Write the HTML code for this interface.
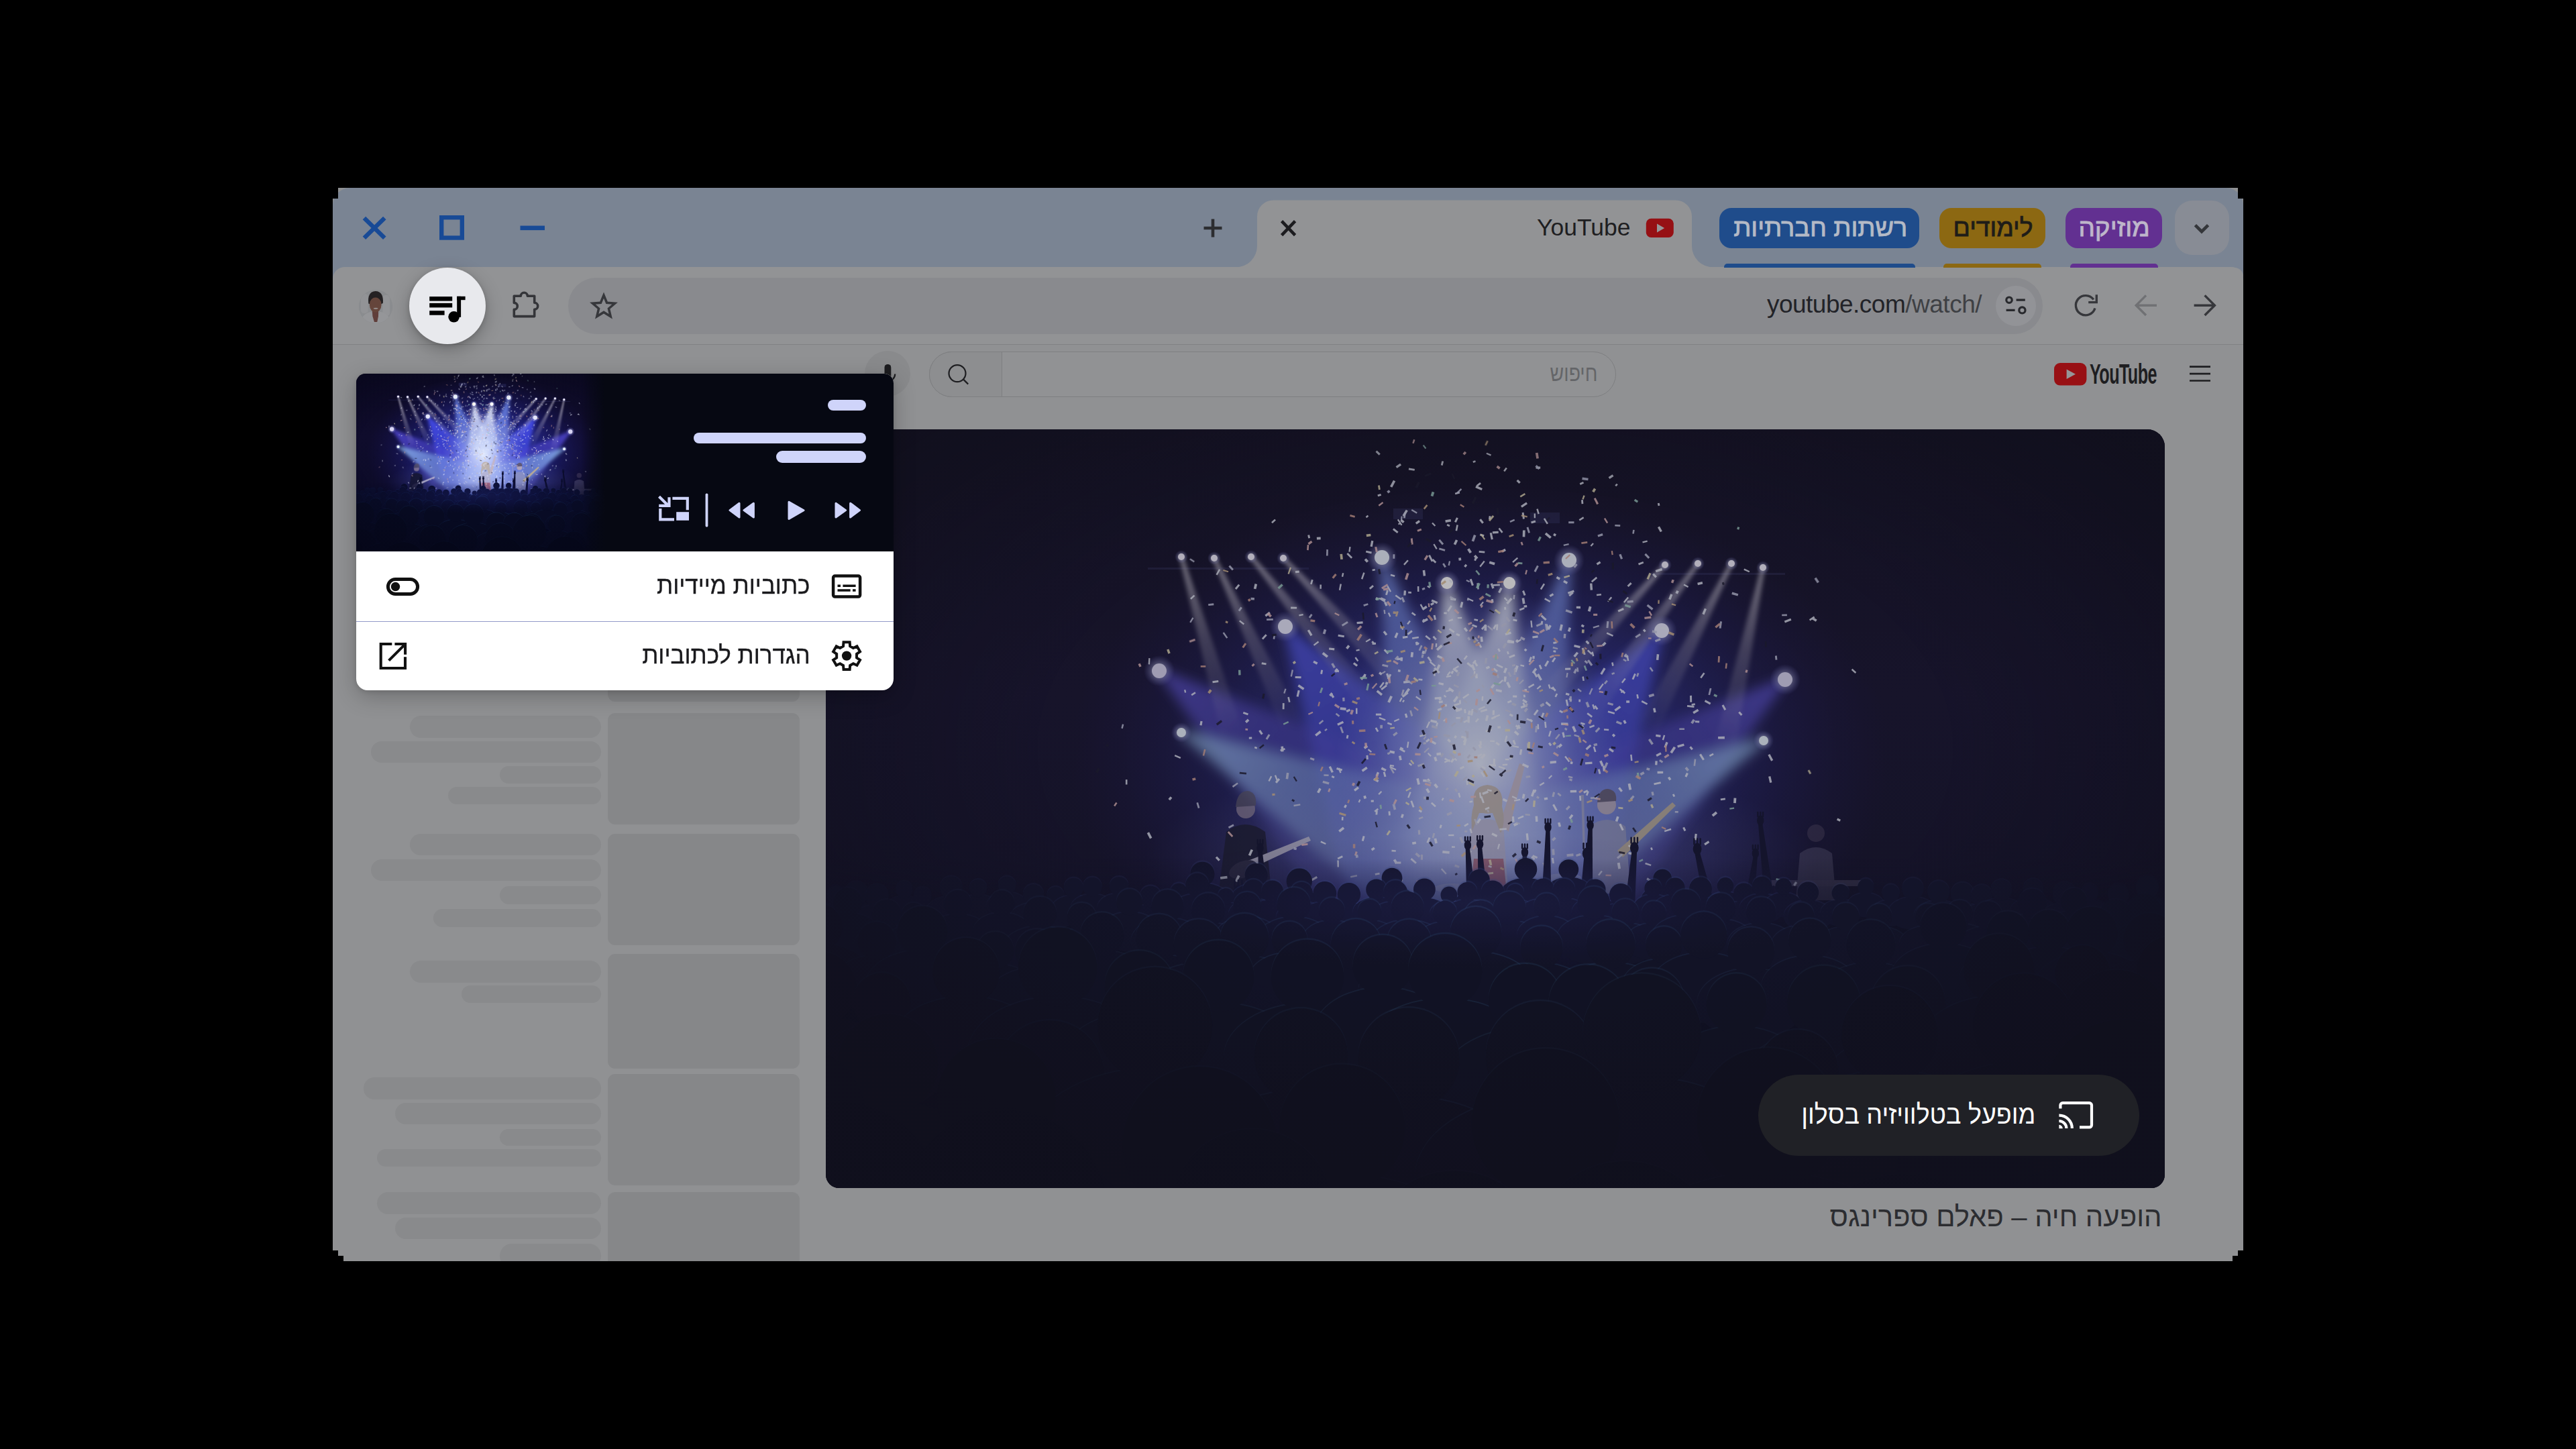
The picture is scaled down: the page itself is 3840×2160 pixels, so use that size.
<!DOCTYPE html>
<html lang="he"><head><meta charset="utf-8"><title>Chrome media controls</title>
<style>
*{box-sizing:border-box;margin:0;padding:0}
html,body{width:3840px;height:2160px;background:#000;overflow:hidden}
body{position:relative;font-family:"Liberation Sans",sans-serif;}
.abs{position:absolute}
.t{position:absolute;white-space:nowrap;line-height:1;}
.rtl{direction:rtl;unicode-bidi:isolate}
svg{position:absolute;overflow:visible}
#win{position:absolute;left:496px;top:280px;width:2848px;height:1600px;background:#8f9092;overflow:hidden;
 clip-path:polygon(8px 0,2840px 0,2840px 16px,2848px 16px,2848px 1584px,2840px 1584px,2840px 1592px,2832px 1592px,2832px 1600px,16px 1600px,16px 1592px,8px 1592px,8px 1584px,0 1584px,0 16px,8px 16px);}
</style></head><body>
<svg width="0" height="0" style="position:absolute"><defs><linearGradient id="sbg" x1="0" y1="0" x2="0" y2="1"><stop offset="0" stop-color="#0b0920"/><stop offset="0.35" stop-color="#0f0c2c"/><stop offset="0.62" stop-color="#0c0b28"/><stop offset="0.8" stop-color="#07081c"/><stop offset="1" stop-color="#040516"/></linearGradient><radialGradient id="sglow" cx="0.5" cy="0.5" r="0.5"><stop offset="0" stop-color="#4450e0" stop-opacity="0.85"/><stop offset="0.45" stop-color="#3036c0" stop-opacity="0.58"/><stop offset="0.8" stop-color="#242290" stop-opacity="0.2"/><stop offset="1" stop-color="#201870" stop-opacity="0"/></radialGradient><radialGradient id="swhite" cx="0.5" cy="0.5" r="0.5"><stop offset="0" stop-color="#e6eeff" stop-opacity="0.95"/><stop offset="0.4" stop-color="#b8c8f8" stop-opacity="0.6"/><stop offset="1" stop-color="#8090f0" stop-opacity="0"/></radialGradient><radialGradient id="svig" cx="0.5" cy="0.42" r="0.62"><stop offset="0.55" stop-color="#050516" stop-opacity="0"/><stop offset="1" stop-color="#050516" stop-opacity="0.75"/></radialGradient><radialGradient id="shalo" cx="0.5" cy="0.5" r="0.5"><stop offset="0" stop-color="#ffffff" stop-opacity="1"/><stop offset="0.3" stop-color="#dfe4ff" stop-opacity="0.75"/><stop offset="1" stop-color="#8a8cff" stop-opacity="0"/></radialGradient><linearGradient id="scrowd" x1="0" y1="0" x2="0" y2="1"><stop offset="0" stop-color="#070a26" stop-opacity="0"/><stop offset="0.25" stop-color="#060922" stop-opacity="0.85"/><stop offset="1" stop-color="#03051a" stop-opacity="1"/></linearGradient><linearGradient id="bm0" gradientUnits="userSpaceOnUse" x1="530" y1="190" x2="607.2" y2="459.2"><stop offset="0" stop-color="rgb(232,228,240)" stop-opacity="0.6"/><stop offset="0.45" stop-color="rgb(232,228,240)" stop-opacity="0.27"/><stop offset="1" stop-color="rgb(232,228,240)" stop-opacity="0"/></linearGradient><linearGradient id="bm1" gradientUnits="userSpaceOnUse" x1="579" y1="192" x2="697.3" y2="445.8"><stop offset="0" stop-color="rgb(232,228,240)" stop-opacity="0.6"/><stop offset="0.45" stop-color="rgb(232,228,240)" stop-opacity="0.27"/><stop offset="1" stop-color="rgb(232,228,240)" stop-opacity="0"/></linearGradient><linearGradient id="bm2" gradientUnits="userSpaceOnUse" x1="634" y1="190" x2="810.2" y2="407.6"><stop offset="0" stop-color="rgb(232,228,240)" stop-opacity="0.6"/><stop offset="0.45" stop-color="rgb(232,228,240)" stop-opacity="0.27"/><stop offset="1" stop-color="rgb(232,228,240)" stop-opacity="0"/></linearGradient><linearGradient id="bm3" gradientUnits="userSpaceOnUse" x1="682" y1="192" x2="873" y2="396.8"><stop offset="0" stop-color="rgb(232,228,240)" stop-opacity="0.6"/><stop offset="0.45" stop-color="rgb(232,228,240)" stop-opacity="0.27"/><stop offset="1" stop-color="rgb(232,228,240)" stop-opacity="0"/></linearGradient><linearGradient id="bm4" gradientUnits="userSpaceOnUse" x1="1251" y1="202" x2="1063.6" y2="410.1"><stop offset="0" stop-color="rgb(232,228,240)" stop-opacity="0.6"/><stop offset="0.45" stop-color="rgb(232,228,240)" stop-opacity="0.27"/><stop offset="1" stop-color="rgb(232,228,240)" stop-opacity="0"/></linearGradient><linearGradient id="bm5" gradientUnits="userSpaceOnUse" x1="1300" y1="200" x2="1135.4" y2="426.5"><stop offset="0" stop-color="rgb(232,228,240)" stop-opacity="0.6"/><stop offset="0.45" stop-color="rgb(232,228,240)" stop-opacity="0.27"/><stop offset="1" stop-color="rgb(232,228,240)" stop-opacity="0"/></linearGradient><linearGradient id="bm6" gradientUnits="userSpaceOnUse" x1="1350" y1="200" x2="1222.9" y2="449.5"><stop offset="0" stop-color="rgb(232,228,240)" stop-opacity="0.6"/><stop offset="0.45" stop-color="rgb(232,228,240)" stop-opacity="0.27"/><stop offset="1" stop-color="rgb(232,228,240)" stop-opacity="0"/></linearGradient><linearGradient id="bm7" gradientUnits="userSpaceOnUse" x1="1397" y1="206" x2="1338.8" y2="479.9"><stop offset="0" stop-color="rgb(232,228,240)" stop-opacity="0.6"/><stop offset="0.45" stop-color="rgb(232,228,240)" stop-opacity="0.27"/><stop offset="1" stop-color="rgb(232,228,240)" stop-opacity="0"/></linearGradient><linearGradient id="bm8" gradientUnits="userSpaceOnUse" x1="829" y1="191" x2="940.3" y2="637.3"><stop offset="0" stop-color="rgb(120,150,255)" stop-opacity="0.88"/><stop offset="0.45" stop-color="rgb(120,150,255)" stop-opacity="0.40"/><stop offset="1" stop-color="rgb(120,150,255)" stop-opacity="0"/></linearGradient><linearGradient id="bm9" gradientUnits="userSpaceOnUse" x1="1108" y1="195" x2="996.7" y2="641.3"><stop offset="0" stop-color="rgb(120,150,255)" stop-opacity="0.88"/><stop offset="0.45" stop-color="rgb(120,150,255)" stop-opacity="0.40"/><stop offset="1" stop-color="rgb(120,150,255)" stop-opacity="0"/></linearGradient><linearGradient id="bm10" gradientUnits="userSpaceOnUse" x1="926" y1="229" x2="1003.9" y2="783.6"><stop offset="0" stop-color="rgb(238,244,255)" stop-opacity="1.0"/><stop offset="0.45" stop-color="rgb(238,244,255)" stop-opacity="0.45"/><stop offset="1" stop-color="rgb(238,244,255)" stop-opacity="0"/></linearGradient><linearGradient id="bm11" gradientUnits="userSpaceOnUse" x1="1019" y1="229" x2="941.1" y2="783.6"><stop offset="0" stop-color="rgb(238,244,255)" stop-opacity="1.0"/><stop offset="0.45" stop-color="rgb(238,244,255)" stop-opacity="0.45"/><stop offset="1" stop-color="rgb(238,244,255)" stop-opacity="0"/></linearGradient><linearGradient id="bm12" gradientUnits="userSpaceOnUse" x1="685" y1="294" x2="1011.8" y2="797.2"><stop offset="0" stop-color="rgb(70,78,240)" stop-opacity="0.95"/><stop offset="0.45" stop-color="rgb(70,78,240)" stop-opacity="0.43"/><stop offset="1" stop-color="rgb(70,78,240)" stop-opacity="0"/></linearGradient><linearGradient id="bm13" gradientUnits="userSpaceOnUse" x1="1246" y1="300" x2="919.2" y2="803.2"><stop offset="0" stop-color="rgb(70,78,240)" stop-opacity="0.95"/><stop offset="0.45" stop-color="rgb(70,78,240)" stop-opacity="0.43"/><stop offset="1" stop-color="rgb(70,78,240)" stop-opacity="0"/></linearGradient><linearGradient id="bm14" gradientUnits="userSpaceOnUse" x1="497" y1="360" x2="938.3" y2="704.8"><stop offset="0" stop-color="rgb(84,74,218)" stop-opacity="0.85"/><stop offset="0.45" stop-color="rgb(84,74,218)" stop-opacity="0.38"/><stop offset="1" stop-color="rgb(84,74,218)" stop-opacity="0"/></linearGradient><linearGradient id="bm15" gradientUnits="userSpaceOnUse" x1="1430" y1="373" x2="988.7" y2="717.8"><stop offset="0" stop-color="rgb(84,74,218)" stop-opacity="0.85"/><stop offset="0.45" stop-color="rgb(84,74,218)" stop-opacity="0.38"/><stop offset="1" stop-color="rgb(84,74,218)" stop-opacity="0"/></linearGradient><linearGradient id="bm16" gradientUnits="userSpaceOnUse" x1="530" y1="452" x2="1100.2" y2="742.6"><stop offset="0" stop-color="rgb(140,185,240)" stop-opacity="0.8"/><stop offset="0.45" stop-color="rgb(140,185,240)" stop-opacity="0.36"/><stop offset="1" stop-color="rgb(140,185,240)" stop-opacity="0"/></linearGradient><linearGradient id="bm17" gradientUnits="userSpaceOnUse" x1="1398" y1="464" x2="827.8" y2="754.6"><stop offset="0" stop-color="rgb(140,185,240)" stop-opacity="0.8"/><stop offset="0.45" stop-color="rgb(140,185,240)" stop-opacity="0.36"/><stop offset="1" stop-color="rgb(140,185,240)" stop-opacity="0"/></linearGradient><filter id="sblur" x="-10%" y="-10%" width="120%" height="120%"><feGaussianBlur stdDeviation="9"/></filter><filter id="sblur3" x="-10%" y="-10%" width="120%" height="120%"><feGaussianBlur stdDeviation="3.2"/></filter><filter id="sblur2" x="-10%" y="-10%" width="120%" height="120%"><feGaussianBlur stdDeviation="2.2"/></filter></defs><symbol id="scene" viewBox="0 0 1996 1131" preserveAspectRatio="none"><rect width="1996" height="1131" fill="url(#sbg)"/><g fill="#2a2a58" opacity="0.55"><rect x="846" y="118" width="44" height="16"/><rect x="1050" y="124" width="44" height="16"/><rect x="480" y="206" width="240" height="3"/><rect x="1230" y="214" width="200" height="3"/></g><ellipse cx="975" cy="490" rx="610" ry="410" fill="url(#sglow)"/><g filter="url(#sblur)"><polygon points="826.1,191.7 831.9,190.3 1030.7,604.4 845.1,650.7" fill="url(#bm8)"/><polygon points="1105.1,194.3 1110.9,195.7 1091.9,654.7 906.3,608.4" fill="url(#bm9)"/><polygon points="923,229.4 929,228.6 1144.8,744.5 857.8,784.8" fill="url(#bm10)"/><polygon points="1016,228.6 1022,229.4 1087.2,784.8 800.2,744.5" fill="url(#bm11)"/><polygon points="682.5,295.6 687.5,292.4 1164.2,655.1 820,878.6" fill="url(#bm12)"/><polygon points="1243.5,298.4 1248.5,301.6 1111,884.6 766.8,661.1" fill="url(#bm13)"/><polygon points="495.2,362.4 498.8,357.6 1019.8,560.7 818.2,818.7" fill="url(#bm14)"/><polygon points="1428.2,370.6 1431.8,375.4 1108.8,831.7 907.2,573.7" fill="url(#bm15)"/><polygon points="528.6,454.7 531.4,449.3 1153.6,596 1013,871.9" fill="url(#bm16)"/><polygon points="1396.6,461.3 1399.4,466.7 915,883.9 774.4,608" fill="url(#bm17)"/></g><g filter="url(#sblur3)"><polygon points="527.1,190.8 532.9,189.2 623,454.1 591.1,463.3" fill="url(#bm0)"/><polygon points="576.3,193.3 581.7,190.7 712.2,438.3 682.1,452.3" fill="url(#bm1)"/><polygon points="631.7,191.9 636.3,188.1 822.8,396.8 797,417.7" fill="url(#bm2)"/><polygon points="679.8,194 684.2,190 884.8,385.1 860.5,407.7" fill="url(#bm3)"/><polygon points="1248.8,200 1253.2,204 1076.3,420.8 1051.6,398.6" fill="url(#bm4)"/><polygon points="1297.6,198.2 1302.4,201.8 1149.1,435.9 1122.3,416.4" fill="url(#bm5)"/><polygon points="1347.3,198.6 1352.7,201.4 1237.9,456.6 1208.3,441.5" fill="url(#bm6)"/><polygon points="1394.1,205.4 1399.9,206.6 1355.1,482.9 1322.6,475.9" fill="url(#bm7)"/></g><ellipse cx="975" cy="500" rx="215" ry="270" fill="url(#swhite)"/><ellipse cx="975" cy="640" rx="500" ry="150" fill="url(#swhite)" opacity="0.34"/><circle cx="530" cy="190" r="10" fill="url(#shalo)" opacity="0.7"/><circle cx="530" cy="190" r="5" fill="#f4f0ff"/><circle cx="579" cy="192" r="10" fill="url(#shalo)" opacity="0.7"/><circle cx="579" cy="192" r="5" fill="#f4f0ff"/><circle cx="634" cy="190" r="10" fill="url(#shalo)" opacity="0.7"/><circle cx="634" cy="190" r="5" fill="#f4f0ff"/><circle cx="682" cy="192" r="10" fill="url(#shalo)" opacity="0.7"/><circle cx="682" cy="192" r="5" fill="#f4f0ff"/><circle cx="1251" cy="202" r="10" fill="url(#shalo)" opacity="0.7"/><circle cx="1251" cy="202" r="5" fill="#f4f0ff"/><circle cx="1300" cy="200" r="10" fill="url(#shalo)" opacity="0.7"/><circle cx="1300" cy="200" r="5" fill="#f4f0ff"/><circle cx="1350" cy="200" r="10" fill="url(#shalo)" opacity="0.7"/><circle cx="1350" cy="200" r="5" fill="#f4f0ff"/><circle cx="1397" cy="206" r="10" fill="url(#shalo)" opacity="0.7"/><circle cx="1397" cy="206" r="5" fill="#f4f0ff"/><circle cx="829" cy="191" r="23" fill="url(#shalo)" opacity="0.7"/><circle cx="829" cy="191" r="11" fill="#e8f0ff"/><circle cx="1108" cy="195" r="23" fill="url(#shalo)" opacity="0.7"/><circle cx="1108" cy="195" r="11" fill="#e8f0ff"/><circle cx="926" cy="229" r="19" fill="url(#shalo)" opacity="0.7"/><circle cx="926" cy="229" r="9" fill="#ffffff"/><circle cx="1019" cy="229" r="19" fill="url(#shalo)" opacity="0.7"/><circle cx="1019" cy="229" r="9" fill="#ffffff"/><circle cx="685" cy="294" r="23" fill="url(#shalo)" opacity="0.7"/><circle cx="685" cy="294" r="11" fill="#e6e8ff"/><circle cx="1246" cy="300" r="23" fill="url(#shalo)" opacity="0.7"/><circle cx="1246" cy="300" r="11" fill="#e6e8ff"/><circle cx="497" cy="360" r="23" fill="url(#shalo)" opacity="0.7"/><circle cx="497" cy="360" r="11" fill="#d8d4f4"/><circle cx="1430" cy="373" r="23" fill="url(#shalo)" opacity="0.7"/><circle cx="1430" cy="373" r="11" fill="#d8d4f4"/><circle cx="530" cy="452" r="15" fill="url(#shalo)" opacity="0.7"/><circle cx="530" cy="452" r="7" fill="#e8f4ff"/><circle cx="1398" cy="464" r="15" fill="url(#shalo)" opacity="0.7"/><circle cx="1398" cy="464" r="7" fill="#e8f4ff"/><g opacity="0.8"><g><path d="M597 600 q28 -22 58 0 l10 95 l-80 0z" fill="#15162e"/><circle cx="626" cy="566" r="14" fill="#8d7f9a"/><path d="M611 563 q2 -24 18 -24 q14 2 12 22 z" fill="#54506a"/><path d="M612 650 L720 607 l3 6 L618 662z" fill="#c8c6d8"/><ellipse cx="622" cy="656" rx="22" ry="12" transform="rotate(-22 622 656)" fill="#2a2840"/></g><g><path d="M962 590 q24 -18 48 0 l8 110 l-62 0z" fill="#b8b4d0"/><path d="M1004 590 L1034 498 l8 3 L1018 600z" fill="#c6b4c0"/><circle cx="986" cy="556" r="17" fill="#c9b8b8"/><path d="M966 560 q-4 -28 20 -30 q26 2 22 32 q6 24 -2 40 l-12 -30 l-20 0 l-10 26 q-4 -20 2 -38z" fill="#bfae9e"/><path d="M966 640 h44 l6 60 h-56z" fill="#b05a68"/></g><g><path d="M1138 592 q26 -20 54 0 l8 100 l-72 0z" fill="#8f94c0"/><circle cx="1164" cy="560" r="14" fill="#c0aeb4"/><path d="M1150 556 q2 -20 16 -20 q14 2 12 18z" fill="#5c5060"/><path d="M1180 628 L1262 556 l5 5 L1188 638z" fill="#c9b48c"/><path d="M1126 545 l3 90 l3 0 l-2 -90z" fill="#a0a4c8"/></g><g opacity="0.35"><circle cx="1476" cy="602" r="13" fill="#7a6a80"/><path d="M1452 632 q24 -18 48 0 l6 70 h-60z" fill="#8a86a8"/><rect x="1405" y="672" width="150" height="9" fill="#9a96b8"/></g><g opacity="0.5" fill="#b9bde0"><ellipse cx="1050" cy="690" rx="34" ry="9"/><ellipse cx="1100" cy="668" rx="26" ry="6"/><ellipse cx="935" cy="684" rx="28" ry="7"/></g></g><g fill="#e8ecfa" opacity="0.85"><rect x="-4.5" y="-1.2" width="8.9" height="2.3" transform="translate(926.4 494.6) rotate(-24)"/><rect x="-1.9" y="-1.4" width="3.8" height="2.9" transform="translate(1086.4 330.9) rotate(9)"/><rect x="-3.5" y="-1.6" width="7" height="3.2" transform="translate(1020.4 315.8) rotate(14)"/><rect x="-2.2" y="-1.7" width="4.3" height="3.3" transform="translate(1051.5 434.3) rotate(42)"/><rect x="-2.3" y="-1.6" width="4.6" height="3.3" transform="translate(1042.9 263.8) rotate(-7)"/><rect x="-4.2" y="-1.8" width="8.5" height="3.6" transform="translate(1156.5 498) rotate(66)"/><rect x="-2.1" y="-1.2" width="4.2" height="2.3" transform="translate(898.7 234.9) rotate(29)"/><rect x="-5" y="-1.7" width="9.9" height="3.5" transform="translate(1241.9 210) rotate(-18)"/><rect x="-3.3" y="-1.2" width="6.7" height="2.4" transform="translate(978.9 401.3) rotate(-85)"/><rect x="-2.5" y="-1.2" width="4.9" height="2.3" transform="translate(1187.6 391) rotate(-28)"/><rect x="-4.2" y="-1.9" width="8.4" height="3.8" transform="translate(932.1 388.4) rotate(35)"/><rect x="-5.2" y="-1.5" width="10.3" height="2.9" transform="translate(958.2 683.7) rotate(88)"/><rect x="-2.7" y="-1.7" width="5.4" height="3.5" transform="translate(1091.8 221.8) rotate(29)"/><rect x="-3.1" y="-1.7" width="6.2" height="3.4" transform="translate(822.3 514.1) rotate(-67)"/><rect x="-4.5" y="-1.6" width="9" height="3.2" transform="translate(796.1 288.2) rotate(-5)"/><rect x="-3" y="-1.8" width="6" height="3.5" transform="translate(1160.3 320.1) rotate(-45)"/><rect x="-2.8" y="-1.8" width="5.7" height="3.6" transform="translate(761 359.3) rotate(-56)"/><rect x="-5" y="-1.9" width="9.9" height="3.7" transform="translate(1249.8 297) rotate(11)"/><rect x="-2" y="-1.5" width="3.9" height="2.9" transform="translate(1030.3 315.2) rotate(-47)"/><rect x="-3.3" y="-1.7" width="6.6" height="3.4" transform="translate(1012.5 552.8) rotate(26)"/><rect x="-4.6" y="-1.1" width="9.2" height="2.2" transform="translate(1030.6 552.7) rotate(-11)"/><rect x="-2.2" y="-1.9" width="4.4" height="3.7" transform="translate(803.6 548.4) rotate(75)"/><rect x="-3.6" y="-1.1" width="7.2" height="2.3" transform="translate(1063 384.6) rotate(-41)"/><rect x="-3.2" y="-1.1" width="6.4" height="2.3" transform="translate(708.5 276.7) rotate(-13)"/><rect x="-3.2" y="-1.3" width="6.4" height="2.6" transform="translate(970.8 433.8) rotate(-50)"/><rect x="-3.8" y="-1.5" width="7.5" height="3.1" transform="translate(1111 245.5) rotate(-42)"/><rect x="-5.1" y="-1.9" width="10.2" height="3.8" transform="translate(1262.8 478) rotate(-57)"/><rect x="-3.5" y="-1.5" width="6.9" height="2.9" transform="translate(813.5 235.3) rotate(-41)"/><rect x="-3" y="-1.5" width="6.1" height="3" transform="translate(1027.1 398.2) rotate(3)"/><rect x="-4.8" y="-1.4" width="9.7" height="2.9" transform="translate(1057.6 365) rotate(60)"/><rect x="-3.1" y="-1.6" width="6.2" height="3.3" transform="translate(1121.9 265.4) rotate(1)"/><rect x="-3.1" y="-1.2" width="6.2" height="2.5" transform="translate(737.6 234.7) rotate(-89)"/><rect x="-4.2" y="-1.3" width="8.5" height="2.6" transform="translate(1470.1 282) rotate(-34)"/><rect x="-1.9" y="-1.4" width="3.8" height="2.8" transform="translate(1123.7 404.5) rotate(-86)"/><rect x="-5.2" y="-1.2" width="10.4" height="2.4" transform="translate(845.3 505.2) rotate(26)"/><rect x="-2.1" y="-1.1" width="4.2" height="2.2" transform="translate(855.4 140.5) rotate(-25)"/><rect x="-3.1" y="-1.1" width="6.2" height="2.2" transform="translate(826.3 541.9) rotate(-46)"/><rect x="-4.7" y="-1.5" width="9.4" height="3" transform="translate(1314.6 406.9) rotate(29)"/><rect x="-2.9" y="-1.8" width="5.8" height="3.6" transform="translate(969.2 190.4) rotate(46)"/><rect x="-3.7" y="-1.6" width="7.5" height="3.2" transform="translate(1057.1 637.2) rotate(22)"/><rect x="-3.6" y="-1.6" width="7.2" height="3.3" transform="translate(1042 405.1) rotate(32)"/><rect x="-4" y="-1.7" width="8.1" height="3.4" transform="translate(935.2 253.3) rotate(9)"/><rect x="-3.3" y="-1.4" width="6.6" height="2.8" transform="translate(821.5 447.8) rotate(61)"/><rect x="-3.6" y="-1.1" width="7.3" height="2.3" transform="translate(988.2 37.1) rotate(24)"/><rect x="-4.1" y="-1.3" width="8.3" height="2.5" transform="translate(975.6 545.4) rotate(82)"/><rect x="-5.1" y="-1.9" width="10.1" height="3.7" transform="translate(1076.8 158.4) rotate(40)"/><rect x="-3.8" y="-1.3" width="7.5" height="2.7" transform="translate(1124.7 550) rotate(86)"/><rect x="-2.5" y="-1.6" width="4.9" height="3.3" transform="translate(858.4 475.9) rotate(26)"/><rect x="-5" y="-1.9" width="10.1" height="3.8" transform="translate(841.1 402.4) rotate(-65)"/><rect x="-4.3" y="-1.4" width="8.5" height="2.7" transform="translate(979.4 514.6) rotate(56)"/><rect x="-3.9" y="-1.4" width="7.9" height="2.9" transform="translate(1215.1 199.7) rotate(-22)"/><rect x="-4.3" y="-1.4" width="8.6" height="2.8" transform="translate(978 182.8) rotate(5)"/><rect x="-3.9" y="-1.6" width="7.7" height="3.2" transform="translate(1313.3 616.7) rotate(-34)"/><rect x="-4.7" y="-1.7" width="9.4" height="3.5" transform="translate(1114.4 539.6) rotate(-2)"/><rect x="-4.9" y="-1.8" width="9.7" height="3.6" transform="translate(637.6 666.6) rotate(-45)"/><rect x="-2.8" y="-1.1" width="5.7" height="2.2" transform="translate(1038.2 352.2) rotate(12)"/><rect x="-3.3" y="-1.3" width="6.6" height="2.6" transform="translate(876.3 275.3) rotate(36)"/><rect x="-5.1" y="-1.3" width="10.2" height="2.5" transform="translate(1105.2 491.5) rotate(52)"/><rect x="-3.1" y="-1.4" width="6.1" height="2.9" transform="translate(739.1 361.7) rotate(-80)"/><rect x="-3.9" y="-1.3" width="7.9" height="2.6" transform="translate(690.4 402.9) rotate(77)"/><rect x="-4.6" y="-1.4" width="9.2" height="2.8" transform="translate(682.2 412.7) rotate(-89)"/><rect x="-3.5" y="-1.9" width="6.9" height="3.8" transform="translate(959.6 181.2) rotate(58)"/><rect x="-5" y="-1.2" width="10" height="2.4" transform="translate(829.5 431.6) rotate(20)"/><rect x="-3.1" y="-1.6" width="6.3" height="3.2" transform="translate(559.5 438.1) rotate(-80)"/><rect x="-3.1" y="-1.1" width="6.2" height="2.3" transform="translate(1078.7 383.4) rotate(72)"/><rect x="-3.1" y="-1.5" width="6.3" height="2.9" transform="translate(919 50.6) rotate(-76)"/><rect x="-3.9" y="-1.7" width="7.8" height="3.5" transform="translate(1012.6 372.3) rotate(-83)"/><rect x="-1.9" y="-1.3" width="3.8" height="2.5" transform="translate(641 474.7) rotate(19)"/><rect x="-4.7" y="-1.8" width="9.3" height="3.5" transform="translate(1115 704.1) rotate(19)"/><rect x="-4.8" y="-1.6" width="9.5" height="3.2" transform="translate(1110.9 242.6) rotate(-19)"/><rect x="-3.1" y="-1.5" width="6.2" height="3.1" transform="translate(976.2 467.7) rotate(86)"/><rect x="-3.4" y="-1.3" width="6.8" height="2.6" transform="translate(961.7 598.6) rotate(73)"/><rect x="-1.8" y="-1.8" width="3.6" height="3.6" transform="translate(924.1 411.4) rotate(-9)"/><rect x="-3.3" y="-1.3" width="6.5" height="2.5" transform="translate(1128.4 438.7) rotate(15)"/><rect x="-4" y="-1.3" width="8" height="2.6" transform="translate(710.3 666.9) rotate(80)"/><rect x="-3.8" y="-1.1" width="7.6" height="2.3" transform="translate(780.9 178.8) rotate(-82)"/><rect x="-5.1" y="-1.8" width="10.1" height="3.5" transform="translate(1274.6 471.5) rotate(-16)"/><rect x="-3.5" y="-1.7" width="6.9" height="3.5" transform="translate(1040.1 546.9) rotate(-79)"/><rect x="-3.3" y="-1.5" width="6.7" height="3.1" transform="translate(1054.7 138) rotate(-18)"/><rect x="-3.7" y="-1.9" width="7.4" height="3.7" transform="translate(844.2 481.1) rotate(12)"/><rect x="-4.7" y="-1.7" width="9.4" height="3.5" transform="translate(943.8 418.2) rotate(-20)"/><rect x="-5" y="-1.4" width="10.1" height="2.9" transform="translate(980.9 419.2) rotate(-17)"/><rect x="-3" y="-1.5" width="6.1" height="3.1" transform="translate(865.2 426.8) rotate(74)"/><rect x="-4.7" y="-1.2" width="9.3" height="2.5" transform="translate(584.8 212.8) rotate(-61)"/><rect x="-4.1" y="-1.7" width="8.2" height="3.5" transform="translate(1056.4 359.9) rotate(-54)"/><rect x="-5.1" y="-1.4" width="10.1" height="2.7" transform="translate(1004.5 352.9) rotate(25)"/><rect x="-4.9" y="-1.2" width="9.7" height="2.5" transform="translate(1193 254.2) rotate(-50)"/><rect x="-2.4" y="-1.6" width="4.9" height="3.1" transform="translate(880.7 319.3) rotate(79)"/><rect x="-2.9" y="-1.4" width="5.8" height="2.8" transform="translate(1126.9 80.4) rotate(-25)"/><rect x="-3.2" y="-1.7" width="6.4" height="3.4" transform="translate(856.8 672) rotate(27)"/><rect x="-4.8" y="-1.6" width="9.6" height="3.3" transform="translate(893.2 728.2) rotate(-50)"/><rect x="-3.7" y="-1.6" width="7.5" height="3.2" transform="translate(863.6 309.8) rotate(-8)"/><rect x="-3.5" y="-1.3" width="6.9" height="2.6" transform="translate(548.1 394.2) rotate(-33)"/><rect x="-4.4" y="-1.3" width="8.9" height="2.6" transform="translate(1035.9 578.5) rotate(-22)"/><rect x="-3.6" y="-1.5" width="7.1" height="3.1" transform="translate(823.2 35.1) rotate(43)"/><rect x="-2.8" y="-1.5" width="5.7" height="2.9" transform="translate(816.2 318.3) rotate(44)"/><rect x="-3.7" y="-1.9" width="7.4" height="3.7" transform="translate(909.2 613.5) rotate(77)"/><rect x="-3.5" y="-1.3" width="7" height="2.7" transform="translate(941.5 95) rotate(-15)"/><rect x="-2.1" y="-1.6" width="4.2" height="3.2" transform="translate(1055.1 339.9) rotate(-90)"/><rect x="-4.2" y="-1.4" width="8.4" height="2.9" transform="translate(898.4 612.4) rotate(-66)"/><rect x="-2" y="-1.8" width="4" height="3.7" transform="translate(821.5 252.5) rotate(-63)"/><rect x="-4.5" y="-1.3" width="9" height="2.6" transform="translate(1072.8 440.3) rotate(84)"/><rect x="-1.8" y="-1.1" width="3.6" height="2.3" transform="translate(861 405) rotate(-57)"/><rect x="-3" y="-1.5" width="6.1" height="3.1" transform="translate(1283.1 515.3) rotate(-64)"/><rect x="-4.5" y="-1.4" width="8.9" height="2.9" transform="translate(704.2 369.6) rotate(2)"/><rect x="-2.8" y="-1.5" width="5.6" height="2.9" transform="translate(968.6 193.1) rotate(-71)"/><rect x="-5" y="-1.8" width="10" height="3.7" transform="translate(914.8 325.4) rotate(-43)"/><rect x="-5.1" y="-1.3" width="10.1" height="2.5" transform="translate(1007.7 504.2) rotate(18)"/><rect x="-4" y="-1.7" width="8" height="3.4" transform="translate(853.8 54.4) rotate(-35)"/><rect x="-5" y="-1.8" width="9.9" height="3.7" transform="translate(1029.4 356.9) rotate(-71)"/><rect x="-3.2" y="-1.2" width="6.4" height="2.4" transform="translate(869 288) rotate(-53)"/><rect x="-2.3" y="-1.8" width="4.5" height="3.7" transform="translate(898.5 523.2) rotate(47)"/><rect x="-4.1" y="-1.3" width="8.1" height="2.7" transform="translate(1006.1 150.7) rotate(52)"/><rect x="-3.8" y="-1.7" width="7.6" height="3.3" transform="translate(673.5 523.9) rotate(-51)"/><rect x="-4" y="-1.5" width="8" height="3" transform="translate(835.5 331.3) rotate(45)"/><rect x="-2.5" y="-1.7" width="4.9" height="3.5" transform="translate(1195.7 405.9) rotate(-1)"/><rect x="-4.3" y="-1.2" width="8.6" height="2.5" transform="translate(1195.4 340.9) rotate(79)"/><rect x="-4.4" y="-1.2" width="8.9" height="2.3" transform="translate(883.3 400.9) rotate(35)"/><rect x="-4.2" y="-1.7" width="8.4" height="3.4" transform="translate(996.8 604.6) rotate(26)"/><rect x="-4.3" y="-1.2" width="8.6" height="2.4" transform="translate(671.5 519.6) rotate(69)"/><rect x="-4.7" y="-1.8" width="9.4" height="3.5" transform="translate(825.3 392.9) rotate(40)"/><rect x="-2.7" y="-1.3" width="5.4" height="2.5" transform="translate(1088.9 396.5) rotate(-63)"/><rect x="-2.1" y="-1.6" width="4.1" height="3.2" transform="translate(953.7 203.4) rotate(-53)"/><rect x="-3" y="-1.4" width="5.9" height="2.9" transform="translate(945.5 406.6) rotate(87)"/><rect x="-2.1" y="-1.2" width="4.2" height="2.5" transform="translate(816.7 209.6) rotate(-12)"/><rect x="-3.9" y="-1.7" width="7.9" height="3.5" transform="translate(915.3 339.4) rotate(23)"/><rect x="-3" y="-1.8" width="6.1" height="3.6" transform="translate(1102.6 227.7) rotate(29)"/><rect x="-3" y="-1.8" width="6" height="3.5" transform="translate(1108.5 298.5) rotate(-71)"/><rect x="-4.1" y="-1.1" width="8.1" height="2.2" transform="translate(851 433.6) rotate(-23)"/><rect x="-3.5" y="-1.6" width="6.9" height="3.3" transform="translate(584.4 640.2) rotate(47)"/><rect x="-4.4" y="-1.3" width="8.9" height="2.6" transform="translate(940.7 146.9) rotate(-79)"/><rect x="-5.2" y="-1.9" width="10.4" height="3.8" transform="translate(593.3 668.3) rotate(-7)"/><rect x="-4.8" y="-1.6" width="9.6" height="3.2" transform="translate(1201.2 632.5) rotate(11)"/><rect x="-4.5" y="-1.8" width="9" height="3.5" transform="translate(1017.2 304.4) rotate(-16)"/><rect x="-2.4" y="-1.2" width="4.8" height="2.5" transform="translate(871.5 499.3) rotate(40)"/><rect x="-3.7" y="-1.5" width="7.4" height="3" transform="translate(801.2 610) rotate(-75)"/><rect x="-3.9" y="-1.2" width="7.7" height="2.3" transform="translate(1067.6 528.8) rotate(-32)"/><rect x="-2.6" y="-1.6" width="5.2" height="3.3" transform="translate(803.4 367.4) rotate(-77)"/><rect x="-3.3" y="-1.3" width="6.6" height="2.6" transform="translate(975 485.6) rotate(-28)"/><rect x="-4.2" y="-1.6" width="8.4" height="3.2" transform="translate(1024.7 581.4) rotate(86)"/><rect x="-4.1" y="-1.6" width="8.1" height="3.1" transform="translate(1338.9 414.7) rotate(61)"/><rect x="-5.2" y="-1.5" width="10.4" height="3" transform="translate(1129.7 330.9) rotate(72)"/><rect x="-3.5" y="-1.4" width="6.9" height="2.9" transform="translate(653.2 349.3) rotate(10)"/><rect x="-3.9" y="-1.5" width="7.8" height="3" transform="translate(880.1 734.4) rotate(1)"/><rect x="-3.9" y="-1.5" width="7.8" height="3.1" transform="translate(1519.6 725.3) rotate(13)"/><rect x="-2.7" y="-1.6" width="5.3" height="3.2" transform="translate(1021.8 426.2) rotate(29)"/><rect x="-5.1" y="-1.1" width="10.2" height="2.2" transform="translate(897.9 440.3) rotate(-65)"/><rect x="-3.9" y="-1.2" width="7.9" height="2.4" transform="translate(1189.3 374.7) rotate(-52)"/><rect x="-3" y="-1.6" width="6" height="3.3" transform="translate(834.9 260.3) rotate(65)"/><rect x="-1.8" y="-1.7" width="3.6" height="3.4" transform="translate(1043.1 328.9) rotate(42)"/><rect x="-2.8" y="-1.7" width="5.6" height="3.3" transform="translate(1135.4 317.7) rotate(47)"/><rect x="-5" y="-1.6" width="10" height="3.3" transform="translate(1040.8 413) rotate(-20)"/><rect x="-2" y="-1.9" width="4" height="3.7" transform="translate(945.2 193.6) rotate(82)"/><rect x="-3.3" y="-1.8" width="6.7" height="3.5" transform="translate(969.9 367.7) rotate(86)"/><rect x="-4.4" y="-1.8" width="8.7" height="3.6" transform="translate(768.7 596.7) rotate(-39)"/><rect x="-3.4" y="-1.8" width="6.7" height="3.7" transform="translate(909.8 531.6) rotate(51)"/><rect x="-2.5" y="-1.7" width="5.1" height="3.5" transform="translate(929.2 464) rotate(45)"/><rect x="-3.9" y="-1.7" width="7.8" height="3.3" transform="translate(951.1 459.3) rotate(16)"/><rect x="-4.9" y="-1.4" width="9.7" height="2.7" transform="translate(829 381.1) rotate(-54)"/><rect x="-4.3" y="-1.4" width="8.7" height="2.8" transform="translate(1000.7 295.1) rotate(-86)"/><rect x="-3.1" y="-1.3" width="6.2" height="2.6" transform="translate(1013 60) rotate(-54)"/><rect x="-3.1" y="-1.4" width="6.2" height="2.8" transform="translate(942.6 430.3) rotate(-2)"/><rect x="-3" y="-1.7" width="6.1" height="3.3" transform="translate(1152 199.5) rotate(-33)"/><rect x="-4" y="-1.2" width="8" height="2.5" transform="translate(883.2 238.1) rotate(89)"/><rect x="-3.1" y="-1.1" width="6.3" height="2.3" transform="translate(906.2 141.7) rotate(46)"/><rect x="-2.6" y="-1.7" width="5.2" height="3.4" transform="translate(904 260.3) rotate(-32)"/><rect x="-3.9" y="-1.5" width="7.7" height="2.9" transform="translate(833 514.3) rotate(75)"/><rect x="-2" y="-1.5" width="4" height="2.9" transform="translate(1241.6 112) rotate(77)"/><rect x="-3.8" y="-1.8" width="7.5" height="3.5" transform="translate(830.7 253.4) rotate(23)"/><rect x="-3.4" y="-1.5" width="6.8" height="2.9" transform="translate(822.2 662.8) rotate(-11)"/><rect x="-3.4" y="-1.3" width="6.7" height="2.6" transform="translate(954.9 589.6) rotate(-30)"/><rect x="-3.5" y="-1.5" width="7" height="3" transform="translate(1198.1 231.6) rotate(-44)"/><rect x="-3.6" y="-1.2" width="7.2" height="2.5" transform="translate(1163.6 447.8) rotate(4)"/><rect x="-3.2" y="-1.2" width="6.4" height="2.3" transform="translate(945 281.1) rotate(-1)"/><rect x="-2.7" y="-1.6" width="5.4" height="3.2" transform="translate(1021.6 489.6) rotate(-35)"/><rect x="-2.4" y="-1.7" width="4.7" height="3.4" transform="translate(1257.7 520.6) rotate(56)"/><rect x="-5.1" y="-1.2" width="10.3" height="2.3" transform="translate(921.2 658.9) rotate(47)"/><rect x="-3.4" y="-1.8" width="6.8" height="3.5" transform="translate(1078.7 295.1) rotate(-61)"/><rect x="-3.8" y="-1.8" width="7.6" height="3.7" transform="translate(640.4 234.2) rotate(-77)"/><rect x="-3.5" y="-1.5" width="7.1" height="2.9" transform="translate(836.5 243.5) rotate(-73)"/><rect x="-4.1" y="-1.5" width="8.2" height="3" transform="translate(1068.5 426.5) rotate(-68)"/><rect x="-3.5" y="-1.3" width="7" height="2.6" transform="translate(1152.5 246.6) rotate(-7)"/><rect x="-4.8" y="-1.8" width="9.6" height="3.7" transform="translate(482.6 605.4) rotate(63)"/><rect x="-4.5" y="-1.4" width="9.1" height="2.8" transform="translate(926.5 492.9) rotate(29)"/><rect x="-3.2" y="-1.4" width="6.3" height="2.9" transform="translate(821.1 571.3) rotate(-86)"/><rect x="-3.1" y="-1.5" width="6.3" height="2.9" transform="translate(807.1 488.9) rotate(86)"/><rect x="-3.6" y="-1.6" width="7.2" height="3.3" transform="translate(1240.9 456.8) rotate(8)"/><rect x="-4.2" y="-1.4" width="8.3" height="2.9" transform="translate(870.6 303) rotate(-38)"/><rect x="-3.1" y="-1.9" width="6.3" height="3.7" transform="translate(908.9 491.5) rotate(72)"/><rect x="-3.4" y="-1.9" width="6.7" height="3.7" transform="translate(631.6 654.5) rotate(-31)"/><rect x="-3.4" y="-1.2" width="6.7" height="2.3" transform="translate(882.8 705.3) rotate(-11)"/><rect x="-3.8" y="-1.4" width="7.5" height="2.8" transform="translate(967.1 293.1) rotate(21)"/><rect x="-3.7" y="-1.4" width="7.3" height="2.8" transform="translate(681.1 477.5) rotate(-21)"/><rect x="-5.2" y="-1.4" width="10.5" height="2.8" transform="translate(1289.2 413) rotate(7)"/><rect x="-3.9" y="-1.5" width="7.8" height="3" transform="translate(1099.7 455.5) rotate(77)"/><rect x="-4.4" y="-1.9" width="8.8" height="3.8" transform="translate(771.1 416.6) rotate(5)"/><rect x="-5.2" y="-1.8" width="10.4" height="3.5" transform="translate(1054.4 542.2) rotate(-70)"/><rect x="-5.2" y="-1.8" width="10.5" height="3.6" transform="translate(845.1 81.3) rotate(-62)"/><rect x="-3" y="-1.4" width="6" height="2.9" transform="translate(1027.4 284.5) rotate(12)"/><rect x="-3.9" y="-1.7" width="7.9" height="3.5" transform="translate(938.5 358.9) rotate(34)"/><rect x="-2.6" y="-1.3" width="5.3" height="2.6" transform="translate(1172.9 350) rotate(78)"/><rect x="-4.4" y="-1.9" width="8.7" height="3.7" transform="translate(1040 255.9) rotate(81)"/><rect x="-4.3" y="-1.4" width="8.6" height="2.9" transform="translate(849.3 151.1) rotate(38)"/><rect x="-2" y="-1.4" width="4.1" height="2.8" transform="translate(1012.7 266.8) rotate(85)"/><rect x="-3.8" y="-1.8" width="7.5" height="3.6" transform="translate(831.7 506.8) rotate(27)"/><rect x="-3.8" y="-1.2" width="7.5" height="2.4" transform="translate(1249 459.5) rotate(-73)"/><rect x="-4.2" y="-1.5" width="8.5" height="2.9" transform="translate(653.8 309.4) rotate(-47)"/><rect x="-3" y="-1.7" width="6.1" height="3.3" transform="translate(953.9 298.5) rotate(50)"/><rect x="-3.2" y="-1.5" width="6.5" height="3.1" transform="translate(854.1 646) rotate(0)"/><rect x="-3.2" y="-1.3" width="6.4" height="2.7" transform="translate(1081.4 675.8) rotate(-18)"/><rect x="-4.7" y="-1.8" width="9.5" height="3.6" transform="translate(633.4 631) rotate(-66)"/><rect x="-4.9" y="-1.4" width="9.8" height="2.8" transform="translate(930 267.2) rotate(-57)"/><rect x="-3.9" y="-1.1" width="7.7" height="2.3" transform="translate(1026.7 548.9) rotate(25)"/><rect x="-3.6" y="-1.2" width="7.1" height="2.4" transform="translate(928.8 364) rotate(-52)"/><rect x="-4.6" y="-1.4" width="9.1" height="2.8" transform="translate(974.8 321.5) rotate(59)"/><rect x="-5.2" y="-1.6" width="10.4" height="3.2" transform="translate(958.2 632) rotate(-45)"/><rect x="-3.5" y="-1.5" width="7.1" height="3" transform="translate(907.8 280.4) rotate(78)"/><rect x="-2.8" y="-1.6" width="5.5" height="3.1" transform="translate(942.4 306.2) rotate(23)"/><rect x="-4.6" y="-1.1" width="9.1" height="2.2" transform="translate(867.7 470) rotate(-82)"/><rect x="-3.2" y="-1.1" width="6.3" height="2.2" transform="translate(899.9 485.1) rotate(45)"/><rect x="-2.1" y="-1.2" width="4.3" height="2.4" transform="translate(891.9 284.8) rotate(49)"/><rect x="-3.7" y="-1.2" width="7.5" height="2.5" transform="translate(1126.4 133.4) rotate(-32)"/><rect x="-4.5" y="-1.2" width="9.1" height="2.5" transform="translate(907.2 363.1) rotate(85)"/><rect x="-1.8" y="-1.9" width="3.6" height="3.7" transform="translate(1027.9 357.8) rotate(40)"/><rect x="-2.6" y="-1.4" width="5.1" height="2.8" transform="translate(916.7 592) rotate(-75)"/><rect x="-2.7" y="-1.5" width="5.4" height="2.9" transform="translate(1096.1 420.8) rotate(29)"/><rect x="-3.8" y="-1.3" width="7.6" height="2.6" transform="translate(546.7 250.2) rotate(-43)"/><rect x="-3" y="-1.3" width="5.9" height="2.6" transform="translate(886.5 373.1) rotate(6)"/><rect x="-3.8" y="-1.4" width="7.6" height="2.8" transform="translate(625.9 423.6) rotate(19)"/><rect x="-4.1" y="-1.2" width="8.2" height="2.3" transform="translate(662.4 520.8) rotate(-63)"/><rect x="-3.3" y="-1.5" width="6.7" height="3" transform="translate(1148.3 414.7) rotate(54)"/><rect x="-3" y="-1.6" width="6" height="3.2" transform="translate(1081.9 247.1) rotate(-31)"/><rect x="-4.4" y="-1.3" width="8.8" height="2.5" transform="translate(937.2 490.8) rotate(41)"/><rect x="-3.8" y="-1.1" width="7.6" height="2.2" transform="translate(808.4 314.7) rotate(-30)"/><rect x="-4.6" y="-1.2" width="9.3" height="2.4" transform="translate(766.9 235.2) rotate(-79)"/><rect x="-2.4" y="-1.6" width="4.8" height="3.1" transform="translate(1079.6 469.5) rotate(53)"/><rect x="-4.7" y="-1.7" width="9.4" height="3.4" transform="translate(907.4 256.9) rotate(24)"/><rect x="-2.6" y="-1.3" width="5.1" height="2.7" transform="translate(777.5 458.3) rotate(-78)"/><rect x="-4.3" y="-1.6" width="8.6" height="3.3" transform="translate(947.7 261.5) rotate(-77)"/><rect x="-5.1" y="-1.8" width="10.1" height="3.5" transform="translate(863.7 124.9) rotate(-58)"/><rect x="-3" y="-1.6" width="5.9" height="3.2" transform="translate(1054.3 639.3) rotate(42)"/><rect x="-4.8" y="-1.8" width="9.6" height="3.6" transform="translate(912.8 355.4) rotate(-65)"/><rect x="-2.6" y="-1.7" width="5.2" height="3.5" transform="translate(1191.1 436.2) rotate(65)"/><rect x="-4.7" y="-1.9" width="9.5" height="3.8" transform="translate(1198.4 532.7) rotate(79)"/><rect x="-4.5" y="-1.4" width="8.9" height="2.7" transform="translate(1138.7 426) rotate(38)"/><rect x="-3.5" y="-1.5" width="6.9" height="3" transform="translate(995.4 429.9) rotate(-26)"/><rect x="-4.3" y="-1.5" width="8.6" height="3.1" transform="translate(765.6 506.7) rotate(18)"/><rect x="-5.2" y="-1.2" width="10.4" height="2.4" transform="translate(1255.1 597.6) rotate(-18)"/><rect x="-2" y="-1.5" width="3.9" height="3.1" transform="translate(1220.4 300.1) rotate(50)"/><rect x="-3.3" y="-1.2" width="6.7" height="2.5" transform="translate(1143.4 334.8) rotate(76)"/><rect x="-4.6" y="-1.5" width="9.2" height="2.9" transform="translate(801.2 369.4) rotate(-52)"/><rect x="-2.1" y="-1.7" width="4.2" height="3.5" transform="translate(1128.3 293) rotate(29)"/><rect x="-3.2" y="-1.1" width="6.4" height="2.2" transform="translate(1080 518.2) rotate(-45)"/><rect x="-4.9" y="-1.2" width="9.9" height="2.5" transform="translate(763.7 647.5) rotate(89)"/><rect x="-4.3" y="-1.6" width="8.7" height="3.1" transform="translate(1076.8 409.6) rotate(41)"/><rect x="-3" y="-1.4" width="6.1" height="2.8" transform="translate(840.2 572.4) rotate(84)"/><rect x="-4.6" y="-1.9" width="9.1" height="3.8" transform="translate(744.4 336.3) rotate(39)"/><rect x="-3.9" y="-1.2" width="7.7" height="2.4" transform="translate(766.1 508.6) rotate(69)"/><rect x="-4.9" y="-1.5" width="9.8" height="3" transform="translate(1289.6 401.8) rotate(89)"/><rect x="-3" y="-1.4" width="5.9" height="2.8" transform="translate(1127.7 108.2) rotate(86)"/><rect x="-5.1" y="-1.5" width="10.2" height="3" transform="translate(993.9 500.8) rotate(5)"/><rect x="-3.9" y="-1.8" width="7.7" height="3.5" transform="translate(1013.1 359.4) rotate(-68)"/><rect x="-5.2" y="-1.7" width="10.5" height="3.3" transform="translate(1137.2 497.5) rotate(-4)"/><rect x="-4.5" y="-1.4" width="9.1" height="2.8" transform="translate(981 294.7) rotate(-47)"/><rect x="-2.2" y="-1.4" width="4.3" height="2.7" transform="translate(1106.4 665.2) rotate(60)"/><rect x="-2.7" y="-1.4" width="5.4" height="2.7" transform="translate(931.5 226.5) rotate(46)"/><rect x="-4.2" y="-1.7" width="8.5" height="3.4" transform="translate(1252.5 470.4) rotate(-69)"/><rect x="-3.9" y="-1.1" width="7.8" height="2.3" transform="translate(1033 315.4) rotate(-32)"/><rect x="-5.2" y="-1.3" width="10.4" height="2.6" transform="translate(954.2 397.7) rotate(-34)"/><rect x="-3.9" y="-1.8" width="7.8" height="3.6" transform="translate(892.6 266.4) rotate(-35)"/><rect x="-3.7" y="-1.5" width="7.4" height="3.1" transform="translate(917.2 379.3) rotate(12)"/><rect x="-4.1" y="-1.6" width="8.2" height="3.3" transform="translate(658.6 275.6) rotate(-37)"/><rect x="-4.7" y="-1.7" width="9.5" height="3.3" transform="translate(865.8 376.6) rotate(-6)"/><rect x="-3.6" y="-1.8" width="7.2" height="3.6" transform="translate(735.4 538.6) rotate(-62)"/><rect x="-3.4" y="-1.5" width="6.7" height="2.9" transform="translate(1065.3 354.4) rotate(67)"/><rect x="-3.3" y="-1.2" width="6.7" height="2.5" transform="translate(931.6 284.5) rotate(-18)"/><rect x="-5.1" y="-1.9" width="10.2" height="3.8" transform="translate(1020.9 316.8) rotate(5)"/><rect x="-4.8" y="-1.8" width="9.5" height="3.6" transform="translate(939.1 402.2) rotate(-54)"/><rect x="-5.1" y="-1.1" width="10.2" height="2.3" transform="translate(1052 290.3) rotate(84)"/><rect x="-3.7" y="-1.2" width="7.4" height="2.5" transform="translate(1012.4 499.9) rotate(-3)"/><rect x="-2.9" y="-1.3" width="5.7" height="2.7" transform="translate(969.3 284) rotate(11)"/><rect x="-3.4" y="-1.5" width="6.7" height="3.1" transform="translate(1132.8 539.9) rotate(-24)"/><rect x="-5.2" y="-1.8" width="10.4" height="3.7" transform="translate(924.5 630.3) rotate(6)"/><rect x="-2.9" y="-1.8" width="5.8" height="3.5" transform="translate(1010.6 180.8) rotate(-29)"/><rect x="-3.7" y="-1.8" width="7.4" height="3.7" transform="translate(873.8 335.9) rotate(-84)"/><rect x="-3.4" y="-1.7" width="6.8" height="3.5" transform="translate(1110.9 577.5) rotate(-53)"/><rect x="-3.4" y="-1.6" width="6.9" height="3.2" transform="translate(977.5 136.9) rotate(52)"/><rect x="-5.2" y="-1.7" width="10.4" height="3.5" transform="translate(1063.9 369.4) rotate(61)"/><rect x="-3.9" y="-1.6" width="7.8" height="3.2" transform="translate(1241.6 484.7) rotate(-28)"/><rect x="-3.5" y="-1.6" width="7" height="3.2" transform="translate(837.7 367.3) rotate(71)"/><rect x="-4.9" y="-1.9" width="9.9" height="3.7" transform="translate(1040.7 155.5) rotate(-88)"/><rect x="-2.5" y="-1.8" width="5" height="3.6" transform="translate(915.2 401.6) rotate(55)"/><rect x="-2" y="-1.3" width="4.1" height="2.7" transform="translate(1138.1 657.9) rotate(-36)"/><rect x="-4.7" y="-1.4" width="9.5" height="2.8" transform="translate(780.7 188.3) rotate(44)"/><rect x="-3.3" y="-1.6" width="6.7" height="3.3" transform="translate(1061.8 57.1) rotate(0)"/><rect x="-3.5" y="-1.2" width="7" height="2.4" transform="translate(956 526.7) rotate(85)"/><rect x="-4.1" y="-1.9" width="8.3" height="3.8" transform="translate(993.1 199.4) rotate(17)"/><rect x="-3.2" y="-1.3" width="6.5" height="2.6" transform="translate(1320.2 485.4) rotate(-29)"/><rect x="-4.8" y="-1.1" width="9.5" height="2.2" transform="translate(929 389.4) rotate(-14)"/><rect x="-2.8" y="-1.7" width="5.6" height="3.4" transform="translate(1032.6 77.9) rotate(46)"/><rect x="-2.2" y="-1.4" width="4.3" height="2.8" transform="translate(928.1 143.1) rotate(24)"/><rect x="-4.9" y="-1.4" width="9.9" height="2.8" transform="translate(999.8 232.2) rotate(-3)"/><rect x="-3.8" y="-1.6" width="7.6" height="3.3" transform="translate(973.5 583.6) rotate(-55)"/><rect x="-3.5" y="-1.6" width="7" height="3.1" transform="translate(995.4 422.2) rotate(-88)"/><rect x="-2.8" y="-1.8" width="5.7" height="3.6" transform="translate(778.2 324.7) rotate(-53)"/><rect x="-4.1" y="-1.4" width="8.2" height="2.8" transform="translate(900 342.7) rotate(54)"/><rect x="-4.7" y="-1.3" width="9.4" height="2.6" transform="translate(1220.4 407.4) rotate(27)"/><rect x="-2.9" y="-1.1" width="5.8" height="2.3" transform="translate(1406.7 681.1) rotate(-47)"/><rect x="-3.2" y="-1.7" width="6.5" height="3.5" transform="translate(1093.6 589.2) rotate(75)"/><rect x="-3.2" y="-1.9" width="6.5" height="3.8" transform="translate(1028.5 588.8) rotate(-27)"/><rect x="-3" y="-1.9" width="6" height="3.8" transform="translate(1094.6 471.7) rotate(-41)"/><rect x="-4.4" y="-1.9" width="8.7" height="3.8" transform="translate(983.4 295.7) rotate(-89)"/><rect x="-2.8" y="-1.7" width="5.6" height="3.4" transform="translate(858.3 342.6) rotate(-86)"/><rect x="-4.5" y="-1.8" width="9.1" height="3.6" transform="translate(965.1 354.9) rotate(68)"/><rect x="-3.6" y="-1.2" width="7.1" height="2.4" transform="translate(858.7 295.4) rotate(62)"/><rect x="-2.6" y="-1.6" width="5.2" height="3.2" transform="translate(1314.7 704.2) rotate(81)"/><rect x="-3.6" y="-1.1" width="7.2" height="2.2" transform="translate(977.8 260.2) rotate(-52)"/><rect x="-2.8" y="-1.2" width="5.6" height="2.4" transform="translate(770.6 217.1) rotate(-78)"/><rect x="-3.2" y="-1.1" width="6.3" height="2.2" transform="translate(952.1 463.4) rotate(-64)"/><rect x="-4.1" y="-1.8" width="8.3" height="3.6" transform="translate(927.7 136.5) rotate(-9)"/><rect x="-1.8" y="-1.8" width="3.7" height="3.5" transform="translate(778.2 692.4) rotate(64)"/><rect x="-3.6" y="-1.1" width="7.2" height="2.3" transform="translate(888.4 264) rotate(61)"/><rect x="-2.6" y="-1.3" width="5.1" height="2.6" transform="translate(770.2 580.3) rotate(-87)"/><rect x="-4.2" y="-1.2" width="8.4" height="2.5" transform="translate(1138.9 332.2) rotate(43)"/><rect x="-3.3" y="-1.3" width="6.5" height="2.6" transform="translate(820.8 567.7) rotate(-39)"/><rect x="-4.5" y="-1.8" width="8.9" height="3.6" transform="translate(1017.8 381.1) rotate(64)"/><rect x="-5" y="-1.1" width="9.9" height="2.3" transform="translate(839.7 237.8) rotate(61)"/><rect x="-4.1" y="-1.2" width="8.2" height="2.4" transform="translate(932.3 605.1) rotate(-1)"/><rect x="-3.4" y="-1.3" width="6.8" height="2.6" transform="translate(1135.4 542.6) rotate(-69)"/><rect x="-2" y="-1.8" width="4.1" height="3.6" transform="translate(836 378.7) rotate(-75)"/><rect x="-4.8" y="-1.2" width="9.5" height="2.4" transform="translate(524.6 488) rotate(24)"/><rect x="-3.8" y="-1.2" width="7.6" height="2.4" transform="translate(1052.6 662.2) rotate(-3)"/><rect x="-4.8" y="-1.8" width="9.7" height="3.6" transform="translate(708.4 384.4) rotate(34)"/><rect x="-4.1" y="-1.6" width="8.2" height="3.2" transform="translate(840 368.8) rotate(-64)"/><rect x="-4" y="-1.8" width="8" height="3.6" transform="translate(680.5 476.5) rotate(86)"/><rect x="-2.1" y="-1.2" width="4.1" height="2.3" transform="translate(919.7 551.3) rotate(-60)"/><rect x="-4.1" y="-1.5" width="8.1" height="3" transform="translate(1106.2 357.1) rotate(-1)"/><rect x="-4.9" y="-1.3" width="9.8" height="2.5" transform="translate(879 310.8) rotate(-8)"/><rect x="-4.2" y="-1.6" width="8.3" height="3.1" transform="translate(1036.1 481) rotate(-80)"/><rect x="-4.8" y="-1.7" width="9.7" height="3.5" transform="translate(906.2 435.3) rotate(13)"/><rect x="-3" y="-1.2" width="6.1" height="2.4" transform="translate(923.3 433) rotate(-38)"/><rect x="-3.3" y="-1.3" width="6.5" height="2.6" transform="translate(845.1 217.8) rotate(16)"/><rect x="-3" y="-1.6" width="6" height="3.1" transform="translate(1001.6 468.8) rotate(35)"/><rect x="-5.2" y="-1.3" width="10.3" height="2.6" transform="translate(853.5 250.5) rotate(36)"/><rect x="-3.7" y="-1.9" width="7.5" height="3.8" transform="translate(1138.7 267.8) rotate(-74)"/><rect x="-3.3" y="-1.7" width="6.6" height="3.4" transform="translate(789.5 350.5) rotate(37)"/><rect x="-2" y="-1.3" width="3.9" height="2.6" transform="translate(807 129.9) rotate(-42)"/><rect x="-4.4" y="-1.6" width="8.8" height="3.2" transform="translate(580.9 376.1) rotate(-8)"/><rect x="-2.8" y="-1.4" width="5.5" height="2.9" transform="translate(817.3 319.4) rotate(-3)"/><rect x="-2.8" y="-1.9" width="5.5" height="3.7" transform="translate(805.9 195.6) rotate(48)"/><rect x="-3.1" y="-1.5" width="6.3" height="2.9" transform="translate(907.6 311.1) rotate(48)"/><rect x="-4.2" y="-1.7" width="8.4" height="3.4" transform="translate(985.5 430.5) rotate(-77)"/><rect x="-2.1" y="-1.2" width="4.3" height="2.5" transform="translate(1016.9 333.1) rotate(72)"/><rect x="-4.7" y="-1.8" width="9.4" height="3.6" transform="translate(883.1 524.9) rotate(77)"/><rect x="-3.4" y="-1.7" width="6.9" height="3.3" transform="translate(1184.5 537.1) rotate(52)"/><rect x="-2.4" y="-1.4" width="4.9" height="2.9" transform="translate(720.2 159.8) rotate(78)"/><rect x="-3.5" y="-1.3" width="6.9" height="2.7" transform="translate(667.5 136.9) rotate(-43)"/><rect x="-3.8" y="-1.7" width="7.5" height="3.3" transform="translate(1171 478.4) rotate(36)"/><rect x="-3.7" y="-1.7" width="7.4" height="3.4" transform="translate(791 536.2) rotate(-37)"/><rect x="-5.1" y="-1.8" width="10.2" height="3.6" transform="translate(866.6 390.9) rotate(-54)"/><rect x="-5" y="-1.6" width="9.9" height="3.3" transform="translate(1041 112.6) rotate(-34)"/><rect x="-3.9" y="-1.5" width="7.7" height="3" transform="translate(1031.9 443.6) rotate(30)"/><rect x="-4.4" y="-1.2" width="8.8" height="2.4" transform="translate(1372.8 210.4) rotate(25)"/><rect x="-3.1" y="-1.5" width="6.1" height="3.1" transform="translate(1226.8 671.3) rotate(33)"/><rect x="-4.7" y="-1.7" width="9.4" height="3.4" transform="translate(952.9 466.3) rotate(-75)"/><rect x="-3.4" y="-1.5" width="6.7" height="3.1" transform="translate(1032 443.9) rotate(-60)"/><rect x="-4.7" y="-1.8" width="9.3" height="3.6" transform="translate(1084.3 496.2) rotate(-5)"/><rect x="-4" y="-1.7" width="8.1" height="3.3" transform="translate(850.5 307.1) rotate(-67)"/><rect x="-2.7" y="-1.1" width="5.4" height="2.3" transform="translate(1142.2 171.9) rotate(-48)"/><rect x="-4.4" y="-1.8" width="8.7" height="3.6" transform="translate(1296.9 420.5) rotate(-31)"/><rect x="-3.8" y="-1.4" width="7.6" height="2.8" transform="translate(1037.7 267.9) rotate(-22)"/><rect x="-4.5" y="-1.7" width="9" height="3.4" transform="translate(1003.3 389.6) rotate(12)"/><rect x="-1.9" y="-1.8" width="3.7" height="3.6" transform="translate(1086.6 157.2) rotate(-63)"/><rect x="-2.3" y="-1.8" width="4.6" height="3.5" transform="translate(969.4 670.2) rotate(7)"/><rect x="-5" y="-1.7" width="10.1" height="3.5" transform="translate(1141.1 234.5) rotate(86)"/><rect x="-4.7" y="-1.8" width="9.4" height="3.5" transform="translate(767.2 438.3) rotate(-25)"/><rect x="-1.8" y="-1.7" width="3.7" height="3.5" transform="translate(1111.6 497.1) rotate(-77)"/><rect x="-4.9" y="-1.6" width="9.9" height="3.2" transform="translate(912.6 400.8) rotate(-4)"/><rect x="-5" y="-1.5" width="10" height="3" transform="translate(876.2 643.4) rotate(42)"/><rect x="-5.1" y="-1.6" width="10.1" height="3.2" transform="translate(962.8 228) rotate(71)"/><rect x="-3" y="-1.6" width="6" height="3.3" transform="translate(778.8 419.2) rotate(-25)"/><rect x="-2.8" y="-1.8" width="5.5" height="3.7" transform="translate(805 473.5) rotate(-36)"/><rect x="-3.1" y="-1.5" width="6.1" height="3.1" transform="translate(1193.2 338.2) rotate(24)"/><rect x="-4.2" y="-1.5" width="8.3" height="3" transform="translate(824.1 425.1) rotate(0)"/><rect x="-5.2" y="-1.4" width="10.4" height="2.8" transform="translate(1239.6 527.8) rotate(-13)"/><rect x="-4.5" y="-1.5" width="8.9" height="2.9" transform="translate(873.4 59.8) rotate(9)"/><rect x="-4.8" y="-1.6" width="9.6" height="3.1" transform="translate(728.1 669.8) rotate(-29)"/><rect x="-3.4" y="-1.2" width="6.8" height="2.4" transform="translate(791.4 342.7) rotate(54)"/><rect x="-2.2" y="-1.8" width="4.5" height="3.5" transform="translate(826.9 364) rotate(34)"/><rect x="-4.6" y="-1.8" width="9.2" height="3.7" transform="translate(948.2 699.7) rotate(9)"/><rect x="-4.7" y="-1.6" width="9.4" height="3.2" transform="translate(1296.7 607.6) rotate(-83)"/><rect x="-2.2" y="-1.7" width="4.5" height="3.3" transform="translate(1003.6 444.1) rotate(-7)"/><rect x="-2.4" y="-1.5" width="4.8" height="3" transform="translate(886.2 568.9) rotate(31)"/><rect x="-4.9" y="-1.8" width="9.9" height="3.7" transform="translate(613.6 669.7) rotate(-64)"/><rect x="-4.5" y="-1.5" width="8.9" height="3" transform="translate(933.1 300) rotate(36)"/><rect x="-4.6" y="-1.3" width="9.2" height="2.5" transform="translate(1075.7 254.6) rotate(29)"/><rect x="-5.1" y="-1.6" width="10.2" height="3.2" transform="translate(1434.1 285.1) rotate(-22)"/><rect x="-2.7" y="-1.6" width="5.4" height="3.2" transform="translate(1105.7 394.8) rotate(14)"/><rect x="-5" y="-1.6" width="10.1" height="3.1" transform="translate(992.2 159.1) rotate(78)"/><rect x="-2.4" y="-1.4" width="4.8" height="2.8" transform="translate(1003.6 329.1) rotate(60)"/><rect x="-4.8" y="-1.7" width="9.6" height="3.4" transform="translate(753.3 507) rotate(65)"/><rect x="-5.2" y="-1.1" width="10.3" height="2.3" transform="translate(855.7 138.6) rotate(56)"/><rect x="-2.5" y="-1.7" width="5.1" height="3.4" transform="translate(1509.9 582.1) rotate(25)"/><rect x="-2.5" y="-1.5" width="5" height="2.9" transform="translate(1067.4 288.3) rotate(-75)"/><rect x="-2.9" y="-1.2" width="5.8" height="2.4" transform="translate(1015.7 492.1) rotate(0)"/><rect x="-4.7" y="-1.3" width="9.4" height="2.6" transform="translate(1073.4 136.9) rotate(58)"/><rect x="-4.5" y="-1.5" width="9.1" height="3.1" transform="translate(1074.6 349.2) rotate(-60)"/><rect x="-2.2" y="-1.1" width="4.4" height="2.2" transform="translate(795.5 554) rotate(-68)"/><rect x="-1.8" y="-1.5" width="3.6" height="3.1" transform="translate(1043.3 388.6) rotate(1)"/><rect x="-3.1" y="-1.4" width="6.2" height="2.9" transform="translate(1019.2 406) rotate(-21)"/><rect x="-3.8" y="-1.8" width="7.6" height="3.6" transform="translate(939 168.4) rotate(-65)"/><rect x="-4.8" y="-1.2" width="9.6" height="2.4" transform="translate(1028.2 472.9) rotate(12)"/><rect x="-2.5" y="-1.1" width="5.1" height="2.2" transform="translate(793 329.2) rotate(-14)"/><rect x="-3.1" y="-1.1" width="6.2" height="2.3" transform="translate(1013.9 253.3) rotate(45)"/><rect x="-2.3" y="-1.3" width="4.7" height="2.5" transform="translate(1109.8 402.9) rotate(34)"/><rect x="-3.1" y="-1.3" width="6.3" height="2.5" transform="translate(1047.6 432.8) rotate(23)"/><rect x="-3.4" y="-1.6" width="6.9" height="3.3" transform="translate(755 396.9) rotate(56)"/><rect x="-2.6" y="-1.9" width="5.2" height="3.8" transform="translate(859.5 137) rotate(39)"/><rect x="-4.9" y="-1.2" width="9.7" height="2.5" transform="translate(1068.4 234.3) rotate(-58)"/><rect x="-1.9" y="-1.3" width="3.8" height="2.6" transform="translate(1231 625.3) rotate(67)"/><rect x="-3.7" y="-1.2" width="7.3" height="2.4" transform="translate(928.6 368.2) rotate(-10)"/><rect x="-5.1" y="-1.5" width="10.2" height="3" transform="translate(832.1 384.7) rotate(-38)"/><rect x="-3.6" y="-1.4" width="7.2" height="2.7" transform="translate(998.3 358.8) rotate(41)"/><rect x="-4.4" y="-1.7" width="8.9" height="3.3" transform="translate(814 170.6) rotate(-79)"/><rect x="-4.4" y="-1.8" width="8.7" height="3.6" transform="translate(803.2 506.7) rotate(-35)"/><rect x="-2.8" y="-1.7" width="5.5" height="3.4" transform="translate(859.4 576.3) rotate(-72)"/><rect x="-3.3" y="-1.6" width="6.7" height="3.2" transform="translate(948.5 504.4) rotate(-27)"/><rect x="-3.7" y="-1.8" width="7.5" height="3.6" transform="translate(1303.2 229.7) rotate(-13)"/><rect x="-3.9" y="-1.2" width="7.8" height="2.5" transform="translate(1532.5 360.3) rotate(42)"/><rect x="-3.5" y="-1.5" width="7.1" height="2.9" transform="translate(1153.1 510.1) rotate(75)"/><rect x="-5.2" y="-1.2" width="10.5" height="2.3" transform="translate(978.5 200.7) rotate(-52)"/><rect x="-4.6" y="-1.2" width="9.2" height="2.4" transform="translate(869.9 544.9) rotate(-69)"/><rect x="-2.7" y="-1.2" width="5.4" height="2.4" transform="translate(910 321.8) rotate(-86)"/><rect x="-5.2" y="-1.3" width="10.5" height="2.5" transform="translate(977.8 415.6) rotate(-25)"/><rect x="-4" y="-1.8" width="8.1" height="3.5" transform="translate(1011.4 724.9) rotate(42)"/><rect x="-2.2" y="-1.4" width="4.5" height="2.8" transform="translate(691.3 670.6) rotate(8)"/><rect x="-4.5" y="-1.7" width="9" height="3.4" transform="translate(1309.7 271.6) rotate(-67)"/><rect x="-5.2" y="-1.7" width="10.4" height="3.4" transform="translate(1408.3 489.3) rotate(62)"/><rect x="-3.4" y="-1.4" width="6.8" height="2.7" transform="translate(840.5 439) rotate(19)"/><rect x="-1.9" y="-1.6" width="3.8" height="3.2" transform="translate(938.6 458.5) rotate(-61)"/><rect x="-5.1" y="-1.7" width="10.2" height="3.5" transform="translate(1018.8 255.9) rotate(-49)"/><rect x="-3.9" y="-1.2" width="7.8" height="2.5" transform="translate(1061.6 122.3) rotate(74)"/><rect x="-4" y="-1.2" width="7.9" height="2.5" transform="translate(1154.4 661.6) rotate(-52)"/><rect x="-4.3" y="-1.8" width="8.6" height="3.6" transform="translate(893.3 284.9) rotate(-27)"/><rect x="-4.3" y="-1.3" width="8.6" height="2.5" transform="translate(791.3 419.9) rotate(-90)"/><rect x="-4.4" y="-1.2" width="8.8" height="2.4" transform="translate(731 319.2) rotate(-37)"/><rect x="-4.8" y="-1.4" width="9.7" height="2.9" transform="translate(1039.8 128.7) rotate(82)"/><rect x="-2.6" y="-1.5" width="5.1" height="3.1" transform="translate(1290.2 475.3) rotate(51)"/><rect x="-5.1" y="-1.2" width="10.2" height="2.5" transform="translate(800.7 218.4) rotate(-71)"/><rect x="-3.7" y="-1.3" width="7.4" height="2.6" transform="translate(1085.5 387) rotate(54)"/><rect x="-1.9" y="-1.3" width="3.7" height="2.6" transform="translate(1178.6 82.9) rotate(-45)"/><rect x="-4.7" y="-1.4" width="9.4" height="2.9" transform="translate(988.2 448.9) rotate(-19)"/><rect x="-5.1" y="-1.8" width="10.3" height="3.6" transform="translate(1101.2 439.2) rotate(2)"/><rect x="-4.8" y="-1.8" width="9.7" height="3.6" transform="translate(1043 501.3) rotate(24)"/><rect x="-3.3" y="-1.6" width="6.6" height="3.3" transform="translate(834 303.9) rotate(52)"/><rect x="-3.4" y="-1.2" width="6.7" height="2.3" transform="translate(1056.8 128.9) rotate(89)"/><rect x="-4" y="-1.5" width="8.1" height="3" transform="translate(1050.2 343.3) rotate(-71)"/><rect x="-2.3" y="-1.6" width="4.6" height="3.2" transform="translate(774.5 562) rotate(-63)"/><rect x="-2.6" y="-1.4" width="5.1" height="2.9" transform="translate(1087 318) rotate(-10)"/><rect x="-3.8" y="-1.2" width="7.7" height="2.4" transform="translate(967 364.3) rotate(-87)"/><rect x="-4.8" y="-1.5" width="9.7" height="3.1" transform="translate(704.1 393.8) rotate(-77)"/><rect x="-4.3" y="-1.7" width="8.6" height="3.4" transform="translate(1243.9 511.4) rotate(-1)"/><rect x="-2.4" y="-1.7" width="4.8" height="3.3" transform="translate(882 319) rotate(29)"/><rect x="-4.2" y="-1.4" width="8.4" height="2.9" transform="translate(1084 643) rotate(82)"/><rect x="-3.8" y="-1.7" width="7.7" height="3.3" transform="translate(820.2 523) rotate(27)"/><rect x="-2.3" y="-1.4" width="4.7" height="2.8" transform="translate(870.5 243.2) rotate(2)"/><rect x="-4.9" y="-1.3" width="9.8" height="2.6" transform="translate(1187.5 390.3) rotate(39)"/><rect x="-3.6" y="-1.7" width="7.2" height="3.5" transform="translate(1170.5 70.6) rotate(-34)"/><rect x="-3" y="-1.5" width="5.9" height="3" transform="translate(762.1 360.3) rotate(9)"/><rect x="-3.2" y="-1.3" width="6.4" height="2.5" transform="translate(1129.1 371.7) rotate(81)"/><rect x="-3" y="-1.4" width="5.9" height="2.8" transform="translate(952.9 420.2) rotate(83)"/><rect x="-4.3" y="-1.5" width="8.7" height="2.9" transform="translate(859.4 478.4) rotate(30)"/><rect x="-5.2" y="-1.4" width="10.4" height="2.8" transform="translate(978.8 552) rotate(70)"/><rect x="-4.4" y="-1.6" width="8.8" height="3.1" transform="translate(998.3 153.7) rotate(-3)"/><rect x="-4.5" y="-1.4" width="9" height="2.7" transform="translate(1306.9 366.9) rotate(-55)"/><rect x="-2.9" y="-1.8" width="5.9" height="3.5" transform="translate(916.7 406.4) rotate(-10)"/><rect x="-4.1" y="-1.4" width="8.2" height="2.9" transform="translate(940.5 410.3) rotate(-16)"/><rect x="-3.1" y="-1.7" width="6.2" height="3.5" transform="translate(994.2 382.9) rotate(-50)"/><rect x="-4.9" y="-1.8" width="9.8" height="3.6" transform="translate(1335 459.7) rotate(-1)"/><rect x="-2.7" y="-1.7" width="5.4" height="3.5" transform="translate(986.9 355.1) rotate(-21)"/><rect x="-4" y="-1.7" width="8.1" height="3.4" transform="translate(1243.4 148.9) rotate(61)"/><rect x="-4.2" y="-1.7" width="8.3" height="3.5" transform="translate(1059.6 580.7) rotate(86)"/><rect x="-4.5" y="-1.6" width="9.1" height="3.3" transform="translate(1119.9 323.6) rotate(12)"/><rect x="-3.3" y="-1.7" width="6.5" height="3.4" transform="translate(882.5 138.4) rotate(-35)"/><rect x="-2.5" y="-1.5" width="5.1" height="2.9" transform="translate(825.2 98.2) rotate(-18)"/><rect x="-4.7" y="-1.2" width="9.4" height="2.3" transform="translate(1014 461.4) rotate(-75)"/><rect x="-3.1" y="-1.6" width="6.1" height="3.2" transform="translate(915.1 417.5) rotate(-19)"/><rect x="-4.6" y="-1.7" width="9.2" height="3.5" transform="translate(991.7 725.8) rotate(36)"/><rect x="-5.2" y="-1.5" width="10.5" height="3" transform="translate(1087 563.9) rotate(61)"/><rect x="-4.4" y="-1.7" width="8.9" height="3.4" transform="translate(905.5 466.7) rotate(29)"/><rect x="-5.2" y="-1.2" width="10.3" height="2.4" transform="translate(1168.9 305.8) rotate(25)"/><rect x="-3.1" y="-1.8" width="6.1" height="3.6" transform="translate(476.8 693.7) rotate(-23)"/><rect x="-5.2" y="-1.7" width="10.5" height="3.4" transform="translate(940.6 416.5) rotate(33)"/><rect x="-5.1" y="-1.6" width="10.2" height="3.3" transform="translate(973.6 87.4) rotate(24)"/><rect x="-4.1" y="-1.5" width="8.2" height="3" transform="translate(968.9 349.4) rotate(56)"/><rect x="-2.8" y="-1.2" width="5.6" height="2.5" transform="translate(911.1 439.9) rotate(-73)"/><rect x="-3.7" y="-1.2" width="7.4" height="2.3" transform="translate(1282.3 233.2) rotate(28)"/><rect x="-3.7" y="-1.8" width="7.5" height="3.6" transform="translate(1029.7 452.8) rotate(41)"/><rect x="-3.3" y="-1.7" width="6.6" height="3.3" transform="translate(1235.5 218.1) rotate(47)"/><rect x="-4.4" y="-1.2" width="8.9" height="2.4" transform="translate(864.9 198.6) rotate(-48)"/><rect x="-5" y="-1.7" width="9.9" height="3.5" transform="translate(1180.4 416.2) rotate(-36)"/><rect x="-3.5" y="-1.6" width="6.9" height="3.2" transform="translate(854.7 342.4) rotate(-4)"/><rect x="-3.1" y="-1.5" width="6.1" height="3.1" transform="translate(1363.4 423.7) rotate(49)"/><rect x="-3.4" y="-1.3" width="6.9" height="2.7" transform="translate(724.3 227.6) rotate(-73)"/><rect x="-3.6" y="-1.5" width="7.1" height="3" transform="translate(1026.3 466.7) rotate(69)"/><rect x="-3.7" y="-1.3" width="7.4" height="2.5" transform="translate(1144.5 413.7) rotate(72)"/><rect x="-3.6" y="-1.5" width="7.3" height="3" transform="translate(939.9 135.2) rotate(-65)"/><rect x="-2.1" y="-1.3" width="4.3" height="2.6" transform="translate(923.5 274) rotate(4)"/><rect x="-4.1" y="-1.1" width="8.1" height="2.3" transform="translate(1002.9 621.8) rotate(-75)"/><rect x="-5.2" y="-1.4" width="10.3" height="2.8" transform="translate(874.5 558.6) rotate(70)"/><rect x="-5.2" y="-1.7" width="10.4" height="3.3" transform="translate(1045.7 607.5) rotate(84)"/><rect x="-5.2" y="-1.2" width="10.3" height="2.4" transform="translate(904.7 349.8) rotate(40)"/><rect x="-2.2" y="-1.5" width="4.4" height="3.1" transform="translate(633 460.1) rotate(-2)"/><rect x="-5.2" y="-1.5" width="10.4" height="3" transform="translate(901.8 192.2) rotate(63)"/><rect x="-4.7" y="-1.2" width="9.5" height="2.5" transform="translate(889.9 456.1) rotate(-17)"/><rect x="-2.2" y="-1.2" width="4.4" height="2.3" transform="translate(535.6 390.4) rotate(77)"/><rect x="-4.2" y="-1.5" width="8.3" height="3" transform="translate(613.6 234.8) rotate(-51)"/><rect x="-4.3" y="-1.5" width="8.6" height="3" transform="translate(809.4 183.1) rotate(13)"/><rect x="-3.2" y="-1.3" width="6.3" height="2.6" transform="translate(846.7 628.3) rotate(3)"/><rect x="-3.1" y="-1.2" width="6.2" height="2.3" transform="translate(810.9 479.1) rotate(40)"/><rect x="-3.3" y="-1.1" width="6.5" height="2.3" transform="translate(857.2 403.1) rotate(-63)"/><rect x="-4.6" y="-1.7" width="9.1" height="3.5" transform="translate(983.2 541.7) rotate(-20)"/><rect x="-4.6" y="-1.2" width="9.3" height="2.3" transform="translate(482.2 345.8) rotate(-87)"/><rect x="-3.6" y="-1.5" width="7.2" height="2.9" transform="translate(997.3 294.5) rotate(-60)"/><rect x="-3.8" y="-1.1" width="7.6" height="2.3" transform="translate(1084.4 387.1) rotate(26)"/><rect x="-4.5" y="-1.4" width="9.1" height="2.8" transform="translate(1204.7 368.6) rotate(-66)"/><rect x="-2.7" y="-1.7" width="5.4" height="3.4" transform="translate(993.6 255.9) rotate(83)"/><rect x="-2.5" y="-1.4" width="5.1" height="2.7" transform="translate(1059.4 734.2) rotate(-38)"/><rect x="-4.1" y="-1.5" width="8.2" height="3.1" transform="translate(1057.5 309.4) rotate(-8)"/><rect x="-3.8" y="-1.8" width="7.6" height="3.6" transform="translate(1179.7 580.9) rotate(-72)"/><rect x="-4.4" y="-1.8" width="8.8" height="3.6" transform="translate(894.6 523.8) rotate(3)"/><rect x="-2" y="-1.4" width="4" height="2.8" transform="translate(756.1 518.2) rotate(27)"/><rect x="-3.4" y="-1.3" width="6.8" height="2.7" transform="translate(1041 410.5) rotate(66)"/><rect x="-5" y="-1.6" width="10" height="3.2" transform="translate(863.7 395.6) rotate(-37)"/><rect x="-4.2" y="-1.7" width="8.4" height="3.5" transform="translate(1259.3 249.7) rotate(-69)"/><rect x="-2.2" y="-1.8" width="4.5" height="3.6" transform="translate(890.7 332.6) rotate(-72)"/><rect x="-3.7" y="-1.5" width="7.4" height="3" transform="translate(1040.8 244.1) rotate(69)"/><rect x="-2.9" y="-1.8" width="5.7" height="3.7" transform="translate(877.1 616.7) rotate(-11)"/><rect x="-4.3" y="-1.7" width="8.5" height="3.5" transform="translate(892 214.3) rotate(83)"/><rect x="-4.2" y="-1.1" width="8.5" height="2.2" transform="translate(908.5 174.7) rotate(59)"/><rect x="-3.3" y="-1.2" width="6.6" height="2.3" transform="translate(940.6 354.7) rotate(-32)"/><rect x="-3.8" y="-1.2" width="7.6" height="2.4" transform="translate(1061.9 443.3) rotate(87)"/><rect x="-3.4" y="-1.9" width="6.8" height="3.7" transform="translate(897.5 538.7) rotate(59)"/><rect x="-3.7" y="-1.3" width="7.4" height="2.6" transform="translate(448.2 525.8) rotate(-90)"/><rect x="-3.1" y="-1.3" width="6.2" height="2.6" transform="translate(1210.1 398.2) rotate(80)"/><rect x="-5.1" y="-1.3" width="10.2" height="2.6" transform="translate(1170.9 422.1) rotate(15)"/><rect x="-4" y="-1.6" width="8.1" height="3.2" transform="translate(754.1 327.4) rotate(6)"/><rect x="-3.2" y="-1.9" width="6.4" height="3.8" transform="translate(913.7 483.9) rotate(-7)"/><rect x="-3.6" y="-1.6" width="7.1" height="3.2" transform="translate(648.5 451.8) rotate(57)"/><rect x="-2.6" y="-1.4" width="5.2" height="2.8" transform="translate(1293.2 410.1) rotate(-12)"/><rect x="-4" y="-1.8" width="8" height="3.7" transform="translate(979.7 487.4) rotate(-49)"/><rect x="-5.2" y="-1.4" width="10.4" height="2.7" transform="translate(1009.6 596.1) rotate(-4)"/><rect x="-5.1" y="-1.2" width="10.1" height="2.4" transform="translate(829.5 254.4) rotate(31)"/><rect x="-4.5" y="-1.4" width="9" height="2.9" transform="translate(1022.9 338.2) rotate(-22)"/><rect x="-2.6" y="-1.8" width="5.2" height="3.5" transform="translate(1073.5 550.6) rotate(-10)"/><rect x="-2.5" y="-1.7" width="5.1" height="3.5" transform="translate(753.1 395.2) rotate(-49)"/><rect x="-2.3" y="-1.4" width="4.5" height="2.7" transform="translate(1198.6 621.5) rotate(27)"/><rect x="-3" y="-1.7" width="6.1" height="3.3" transform="translate(1238 497.5) rotate(-86)"/><rect x="-4.7" y="-1.8" width="9.4" height="3.6" transform="translate(733.9 453.4) rotate(-38)"/><rect x="-3.2" y="-1.5" width="6.3" height="2.9" transform="translate(1299.1 435.9) rotate(4)"/><rect x="-4.9" y="-1.2" width="9.8" height="2.3" transform="translate(1027.7 194.9) rotate(-42)"/><rect x="-2.9" y="-1.5" width="5.8" height="3" transform="translate(1279.8 595.9) rotate(64)"/><rect x="-4.7" y="-1.3" width="9.4" height="2.6" transform="translate(1051.6 382.5) rotate(-29)"/><rect x="-2.5" y="-1.8" width="5" height="3.5" transform="translate(815.8 625.6) rotate(-35)"/><rect x="-3.9" y="-1.7" width="7.9" height="3.4" transform="translate(993.6 233.4) rotate(70)"/><rect x="-3.9" y="-1.3" width="7.7" height="2.6" transform="translate(1142.1 442.9) rotate(-21)"/><rect x="-3.3" y="-1.8" width="6.7" height="3.6" transform="translate(856.3 489.9) rotate(78)"/><rect x="-2.4" y="-1.8" width="4.9" height="3.6" transform="translate(513.4 550.3) rotate(-49)"/><rect x="-4.4" y="-1.6" width="8.9" height="3.1" transform="translate(1185.2 269.4) rotate(-24)"/><rect x="-4.1" y="-1.1" width="8.2" height="2.2" transform="translate(1000.9 427.3) rotate(-21)"/><rect x="-2.7" y="-1.8" width="5.5" height="3.6" transform="translate(628.1 434.8) rotate(-43)"/><rect x="-4.9" y="-1.7" width="9.8" height="3.4" transform="translate(958.2 432.5) rotate(-89)"/><rect x="-3.2" y="-1.1" width="6.3" height="2.2" transform="translate(840.2 276.4) rotate(66)"/><rect x="-2" y="-1.4" width="4.1" height="2.8" transform="translate(1264 545.6) rotate(65)"/><rect x="-4.6" y="-1.9" width="9.1" height="3.8" transform="translate(1182.4 650.7) rotate(81)"/><rect x="-3.2" y="-1.4" width="6.3" height="2.8" transform="translate(980.5 504.2) rotate(28)"/><rect x="-3.8" y="-1.8" width="7.7" height="3.7" transform="translate(977.7 312.9) rotate(83)"/><rect x="-4" y="-1.9" width="8" height="3.8" transform="translate(1324.9 573.5) rotate(-40)"/><rect x="-3" y="-1.5" width="6.1" height="3.1" transform="translate(897.2 463.9) rotate(-39)"/><rect x="-3.9" y="-1.6" width="7.9" height="3.2" transform="translate(1005.3 240) rotate(-63)"/><rect x="-4.3" y="-1.8" width="8.7" height="3.5" transform="translate(1240.1 339.6) rotate(-84)"/><rect x="-3.1" y="-1.7" width="6.3" height="3.4" transform="translate(729.8 347.7) rotate(26)"/><rect x="-2.1" y="-1.5" width="4.1" height="3" transform="translate(814.8 554.2) rotate(-3)"/><rect x="-4.6" y="-1.3" width="9.1" height="2.5" transform="translate(1225.9 648.5) rotate(18)"/><rect x="-4.8" y="-1.4" width="9.5" height="2.8" transform="translate(1105 407.6) rotate(78)"/><rect x="-4" y="-1.3" width="8" height="2.6" transform="translate(1146.1 477) rotate(73)"/><rect x="-2.2" y="-1.4" width="4.5" height="2.8" transform="translate(1057.2 539.3) rotate(-62)"/><rect x="-3.2" y="-1.7" width="6.4" height="3.4" transform="translate(1235.4 418.7) rotate(77)"/><rect x="-1.9" y="-1.4" width="3.9" height="2.7" transform="translate(966.6 48.2) rotate(-18)"/><rect x="-4.4" y="-1.9" width="8.9" height="3.7" transform="translate(1115.6 446.8) rotate(66)"/><rect x="-2.9" y="-1.9" width="5.8" height="3.7" transform="translate(734.8 162.5) rotate(-2)"/><rect x="-4.4" y="-1.6" width="8.7" height="3.2" transform="translate(996.3 495.3) rotate(-88)"/><rect x="-4.3" y="-1.3" width="8.6" height="2.5" transform="translate(1079.4 453.7) rotate(-73)"/><rect x="-1.9" y="-1.2" width="3.9" height="2.5" transform="translate(923 397.8) rotate(43)"/><rect x="-4.2" y="-1.4" width="8.5" height="2.8" transform="translate(973.1 730) rotate(15)"/><rect x="-4.3" y="-1.4" width="8.6" height="2.7" transform="translate(897.6 310.6) rotate(38)"/><rect x="-4.2" y="-1.5" width="8.4" height="3" transform="translate(1075.6 294.6) rotate(74)"/><rect x="-3.3" y="-1.3" width="6.6" height="2.7" transform="translate(986 565.1) rotate(-23)"/><rect x="-2.3" y="-1.3" width="4.6" height="2.6" transform="translate(961.8 555.1) rotate(-7)"/><rect x="-3.1" y="-1.2" width="6.2" height="2.3" transform="translate(843.9 501.4) rotate(9)"/><rect x="-2.3" y="-1.5" width="4.6" height="3" transform="translate(933.9 362.2) rotate(-64)"/><rect x="-3.6" y="-1.9" width="7.2" height="3.7" transform="translate(1473.6 283.4) rotate(31)"/><rect x="-4.1" y="-1.1" width="8.2" height="2.3" transform="translate(741.6 616.3) rotate(25)"/><rect x="-4.6" y="-1.5" width="9.2" height="3" transform="translate(768.2 308) rotate(9)"/><rect x="-4.8" y="-1.6" width="9.6" height="3.2" transform="translate(1070.1 280.9) rotate(43)"/><rect x="-2.9" y="-1.8" width="5.9" height="3.6" transform="translate(878.3 725.2) rotate(-88)"/><rect x="-4.5" y="-1.5" width="9.1" height="3.1" transform="translate(1136.9 473.9) rotate(-43)"/><rect x="-4.8" y="-1.6" width="9.5" height="3.2" transform="translate(963.4 421.7) rotate(-77)"/><rect x="-2.5" y="-1.9" width="5" height="3.8" transform="translate(1089.4 673.4) rotate(14)"/><rect x="-4.7" y="-1.2" width="9.3" height="2.5" transform="translate(1200.9 489.5) rotate(84)"/><rect x="-1.9" y="-1.4" width="3.8" height="2.7" transform="translate(1041.3 397.5) rotate(81)"/><rect x="-2.4" y="-1.2" width="4.9" height="2.4" transform="translate(935.4 622.6) rotate(1)"/><rect x="-4.1" y="-1.2" width="8.3" height="2.4" transform="translate(620 287.9) rotate(38)"/><rect x="-3.8" y="-1.4" width="7.6" height="2.8" transform="translate(1085.2 343.6) rotate(-57)"/><rect x="-3.4" y="-1.2" width="6.8" height="2.4" transform="translate(989.4 538.2) rotate(14)"/><rect x="-3.7" y="-1.9" width="7.4" height="3.8" transform="translate(1355.2 553.4) rotate(-86)"/><rect x="-3.5" y="-1.4" width="7.1" height="2.8" transform="translate(1337.3 551.4) rotate(-8)"/><rect x="-4.3" y="-1.6" width="8.6" height="3.3" transform="translate(934.8 492.8) rotate(-54)"/><rect x="-5" y="-1.3" width="9.9" height="2.7" transform="translate(1145.5 224) rotate(-40)"/><rect x="-2.3" y="-1.5" width="4.6" height="3" transform="translate(989.8 131.6) rotate(-81)"/><rect x="-4.6" y="-1.5" width="9.1" height="3.1" transform="translate(959.9 351.1) rotate(38)"/><rect x="-4.7" y="-1.6" width="9.5" height="3.3" transform="translate(1407.8 522) rotate(77)"/><rect x="-1.8" y="-1.7" width="3.7" height="3.4" transform="translate(854.8 359.9) rotate(12)"/><rect x="-4" y="-1.8" width="7.9" height="3.5" transform="translate(1118.3 335.8) rotate(-51)"/><rect x="-2.5" y="-1.2" width="5" height="2.4" transform="translate(990.1 651.8) rotate(16)"/><rect x="-3.5" y="-1.4" width="7" height="2.8" transform="translate(973.3 82.3) rotate(-38)"/><rect x="-3.5" y="-1.2" width="6.9" height="2.4" transform="translate(993.6 464.8) rotate(3)"/><rect x="-3.4" y="-1.9" width="6.8" height="3.8" transform="translate(849.2 644.3) rotate(60)"/><rect x="-4.2" y="-1.2" width="8.4" height="2.3" transform="translate(1006.2 376.8) rotate(-42)"/><rect x="-5.1" y="-1.1" width="10.3" height="2.3" transform="translate(1155.8 383.6) rotate(-54)"/><rect x="-3.4" y="-1.3" width="6.9" height="2.6" transform="translate(953.7 340.3) rotate(-52)"/><rect x="-3.8" y="-1.7" width="7.6" height="3.4" transform="translate(1160 505.7) rotate(84)"/><rect x="-4.2" y="-1.2" width="8.4" height="2.5" transform="translate(1168.5 253.5) rotate(-50)"/><rect x="-3.2" y="-1.4" width="6.3" height="2.8" transform="translate(953.8 435.4) rotate(-25)"/><rect x="-3.4" y="-1.5" width="6.7" height="2.9" transform="translate(906.9 196.4) rotate(45)"/><rect x="-4.2" y="-1.1" width="8.5" height="2.2" transform="translate(961.2 254.2) rotate(24)"/><rect x="-4.6" y="-1.8" width="9.2" height="3.6" transform="translate(1096.1 295.5) rotate(-77)"/><rect x="-4.5" y="-1.5" width="9.1" height="2.9" transform="translate(978.6 732.9) rotate(55)"/><rect x="-4.5" y="-1.4" width="9" height="2.8" transform="translate(697.6 266.1) rotate(1)"/><rect x="-3.2" y="-1.7" width="6.4" height="3.4" transform="translate(959.2 422.4) rotate(-76)"/><rect x="-4.8" y="-1.7" width="9.5" height="3.4" transform="translate(721.7 303.4) rotate(60)"/><rect x="-3.2" y="-1.3" width="6.4" height="2.6" transform="translate(966.8 346.7) rotate(-49)"/><rect x="-2" y="-1.8" width="4" height="3.6" transform="translate(1174.5 456.2) rotate(45)"/><rect x="-3.1" y="-1.5" width="6.2" height="3.1" transform="translate(978.2 157.8) rotate(18)"/><rect x="-5.1" y="-1.6" width="10.2" height="3.1" transform="translate(1186 593) rotate(64)"/><rect x="-2.8" y="-1.6" width="5.7" height="3.3" transform="translate(702.8 212.3) rotate(-4)"/><rect x="-3.4" y="-1.2" width="6.8" height="2.4" transform="translate(944.4 545.3) rotate(76)"/><rect x="-4.9" y="-1.6" width="9.8" height="3.2" transform="translate(1306 488.6) rotate(58)"/><rect x="-5.2" y="-1.6" width="10.5" height="3.2" transform="translate(1158.4 360.6) rotate(-59)"/><rect x="-4.1" y="-1.3" width="8.2" height="2.7" transform="translate(905.9 559.4) rotate(42)"/><rect x="-3.7" y="-1.2" width="7.4" height="2.4" transform="translate(1221.1 167.5) rotate(-15)"/><rect x="-3.9" y="-1.4" width="7.9" height="2.8" transform="translate(766.7 638.3) rotate(-25)"/><rect x="-3.6" y="-1.6" width="7.1" height="3.3" transform="translate(863.1 243.9) rotate(-86)"/><rect x="-5.2" y="-1.7" width="10.4" height="3.4" transform="translate(910.9 359.4) rotate(45)"/><rect x="-2.9" y="-1.7" width="5.9" height="3.4" transform="translate(975.2 472.6) rotate(63)"/><rect x="-2.2" y="-1.9" width="4.4" height="3.8" transform="translate(1269.1 242.8) rotate(-65)"/><rect x="-4.6" y="-1.5" width="9.3" height="3" transform="translate(1058.7 422.1) rotate(-54)"/></g><g fill="#eebcbc" opacity="0.85"><rect x="-4.3" y="-1.2" width="8.5" height="2.4" transform="translate(1102.8 440.1) rotate(7)"/><rect x="-3.4" y="-1.6" width="6.8" height="3.1" transform="translate(849.4 717.7) rotate(-23)"/><rect x="-3.7" y="-1.7" width="7.3" height="3.5" transform="translate(795.7 295.9) rotate(-46)"/><rect x="-3.6" y="-1.1" width="7.2" height="2.2" transform="translate(722.7 423.3) rotate(-24)"/><rect x="-3.4" y="-1.9" width="6.9" height="3.8" transform="translate(784.1 421.7) rotate(-70)"/><rect x="-3.1" y="-1.8" width="6.2" height="3.6" transform="translate(920.2 343.4) rotate(71)"/><rect x="-4.4" y="-1.2" width="8.8" height="2.4" transform="translate(1153.6 322.7) rotate(-3)"/><rect x="-3.6" y="-1.7" width="7.1" height="3.4" transform="translate(902.5 463.3) rotate(-83)"/><rect x="-4.4" y="-1.4" width="8.9" height="2.8" transform="translate(1150.2 550.6) rotate(10)"/><rect x="-4.8" y="-1.9" width="9.5" height="3.7" transform="translate(866.6 370.5) rotate(-72)"/><rect x="-3.3" y="-1.4" width="6.5" height="2.9" transform="translate(930 318.8) rotate(-5)"/><rect x="-3" y="-1.5" width="5.9" height="3" transform="translate(960.3 289.5) rotate(-24)"/><rect x="-3.9" y="-1.7" width="7.7" height="3.5" transform="translate(839.4 259.9) rotate(51)"/><rect x="-4.4" y="-1.6" width="8.8" height="3.2" transform="translate(897.5 529.6) rotate(18)"/><rect x="-5" y="-1.6" width="9.9" height="3.1" transform="translate(1148.4 107.1) rotate(63)"/><rect x="-3.2" y="-1.7" width="6.4" height="3.5" transform="translate(1029.6 201.7) rotate(-48)"/><rect x="-1.9" y="-1.6" width="3.8" height="3.2" transform="translate(1069.3 503.3) rotate(-34)"/><rect x="-1.9" y="-1.7" width="3.9" height="3.3" transform="translate(994.2 358.3) rotate(-87)"/><rect x="-1.8" y="-1.4" width="3.7" height="2.7" transform="translate(627.2 447.4) rotate(8)"/><rect x="-3" y="-1.7" width="6" height="3.4" transform="translate(1242.9 668.4) rotate(-0)"/><rect x="-3.5" y="-1.8" width="7" height="3.5" transform="translate(805.1 470.8) rotate(84)"/><rect x="-4" y="-1.7" width="7.9" height="3.5" transform="translate(762.1 412.5) rotate(33)"/><rect x="-3.8" y="-1.2" width="7.6" height="2.5" transform="translate(841.9 663.1) rotate(-72)"/><rect x="-4.1" y="-1.5" width="8.2" height="3" transform="translate(849.5 347.5) rotate(31)"/><rect x="-4.9" y="-1.7" width="9.8" height="3.4" transform="translate(970.1 406.6) rotate(-82)"/><rect x="-4.1" y="-1.3" width="8.2" height="2.5" transform="translate(1163 136.2) rotate(59)"/><rect x="-2.2" y="-1.9" width="4.4" height="3.7" transform="translate(944.4 484.5) rotate(-10)"/><rect x="-3.5" y="-1.4" width="7" height="2.9" transform="translate(924.8 434) rotate(89)"/><rect x="-2.5" y="-1.6" width="5" height="3.2" transform="translate(775.2 379.4) rotate(-18)"/><rect x="-3.1" y="-1.6" width="6.3" height="3.3" transform="translate(721.9 169) rotate(-37)"/><rect x="-4" y="-1.5" width="8.1" height="3.1" transform="translate(940.3 271.6) rotate(42)"/><rect x="-4" y="-1.8" width="7.9" height="3.6" transform="translate(883.1 675.9) rotate(67)"/><rect x="-3.6" y="-1.3" width="7.1" height="2.5" transform="translate(1229.2 274.6) rotate(61)"/><rect x="-3.7" y="-1.6" width="7.5" height="3.2" transform="translate(1253.4 487.2) rotate(-33)"/><rect x="-4.9" y="-1.8" width="9.8" height="3.6" transform="translate(989.3 256.4) rotate(16)"/><rect x="-2.1" y="-1.5" width="4.3" height="3.1" transform="translate(637 351.3) rotate(-43)"/><rect x="-5.1" y="-1.6" width="10.2" height="3.2" transform="translate(820.9 519) rotate(-71)"/><rect x="-2" y="-1.4" width="4" height="2.8" transform="translate(973.2 309.4) rotate(-83)"/><rect x="-5" y="-1.2" width="10" height="2.3" transform="translate(818.1 382.5) rotate(-48)"/><rect x="-4.3" y="-1.6" width="8.5" height="3.3" transform="translate(1088.5 484.3) rotate(32)"/><rect x="-3.3" y="-1.9" width="6.6" height="3.7" transform="translate(1139.4 435.9) rotate(-64)"/><rect x="-5.2" y="-1.4" width="10.4" height="2.8" transform="translate(833.2 234.3) rotate(-32)"/><rect x="-3" y="-1.5" width="6.1" height="3.1" transform="translate(1125.4 539.4) rotate(-35)"/><rect x="-4.3" y="-1.8" width="8.5" height="3.5" transform="translate(840.1 374.3) rotate(85)"/><rect x="-2.4" y="-1.8" width="4.9" height="3.5" transform="translate(1262.4 226.6) rotate(-70)"/><rect x="-2.6" y="-1.2" width="5.2" height="2.4" transform="translate(909.1 458.3) rotate(-8)"/><rect x="-2.3" y="-1.8" width="4.6" height="3.6" transform="translate(952.3 35.6) rotate(-49)"/><rect x="-3.1" y="-1.2" width="6.1" height="2.5" transform="translate(1290.1 351.3) rotate(38)"/><rect x="-3.9" y="-1.2" width="7.8" height="2.4" transform="translate(827.4 111.4) rotate(-37)"/><rect x="-4.6" y="-1.4" width="9.2" height="2.8" transform="translate(713.9 618.9) rotate(-8)"/><rect x="-4.9" y="-1.6" width="9.9" height="3.2" transform="translate(1225.3 280.8) rotate(-7)"/><rect x="-2.5" y="-1.7" width="4.9" height="3.4" transform="translate(468.1 351.6) rotate(67)"/><rect x="-3.4" y="-1.8" width="6.8" height="3.7" transform="translate(661.3 276.6) rotate(47)"/><rect x="-3.4" y="-1.6" width="6.8" height="3.2" transform="translate(966.9 622.9) rotate(-54)"/><rect x="-3.1" y="-1.5" width="6.1" height="2.9" transform="translate(1030.6 372.4) rotate(-77)"/><rect x="-3.7" y="-1.6" width="7.4" height="3.2" transform="translate(848.8 555.3) rotate(-64)"/><rect x="-4" y="-1.3" width="8" height="2.6" transform="translate(718.7 176.1) rotate(-86)"/><rect x="-4.4" y="-1.5" width="8.9" height="3" transform="translate(546.3 315) rotate(-20)"/><rect x="-5" y="-1.2" width="9.9" height="2.3" transform="translate(1030.5 644.8) rotate(61)"/><rect x="-3.1" y="-1.6" width="6.1" height="3.1" transform="translate(1147.2 276.4) rotate(-0)"/><rect x="-1.9" y="-1.3" width="3.9" height="2.7" transform="translate(977.8 263.9) rotate(-55)"/><rect x="-3.1" y="-1.4" width="6.2" height="2.9" transform="translate(972.4 389.3) rotate(-34)"/><rect x="-3.8" y="-1.7" width="7.6" height="3.3" transform="translate(895 191.4) rotate(-57)"/><rect x="-5" y="-1.4" width="10" height="2.8" transform="translate(993.2 391.1) rotate(60)"/><rect x="-4.3" y="-1.9" width="8.6" height="3.8" transform="translate(1060.4 39.2) rotate(81)"/><rect x="-2.1" y="-1.7" width="4.2" height="3.4" transform="translate(814.5 366.9) rotate(-26)"/><rect x="-4.1" y="-1.2" width="8.3" height="2.4" transform="translate(1166.6 664.9) rotate(2)"/><rect x="-3.7" y="-1.1" width="7.4" height="2.3" transform="translate(762 275.6) rotate(26)"/><rect x="-5.2" y="-1.3" width="10.4" height="2.6" transform="translate(1052.1 347.1) rotate(-46)"/><rect x="-5" y="-1.4" width="9.9" height="2.8" transform="translate(1058.8 302.9) rotate(21)"/><rect x="-2.8" y="-1.2" width="5.6" height="2.3" transform="translate(899 262.1) rotate(83)"/><rect x="-4.1" y="-1.7" width="8.2" height="3.3" transform="translate(882.5 484.5) rotate(3)"/><rect x="-3.6" y="-1.8" width="7.1" height="3.7" transform="translate(933.2 553.5) rotate(17)"/><rect x="-2" y="-1.5" width="4.1" height="3.1" transform="translate(1372.4 360.7) rotate(-74)"/><rect x="-4" y="-1.5" width="7.9" height="3" transform="translate(965.3 547.8) rotate(-6)"/><rect x="-3.4" y="-1.2" width="6.7" height="2.4" transform="translate(1131.2 465) rotate(36)"/><rect x="-3.9" y="-1.8" width="7.7" height="3.7" transform="translate(834.8 238.1) rotate(-9)"/><rect x="-2.3" y="-1.2" width="4.6" height="2.4" transform="translate(1228.3 311.5) rotate(3)"/><rect x="-3.3" y="-1.4" width="6.7" height="2.9" transform="translate(1082.3 338.6) rotate(-23)"/><rect x="-2.4" y="-1.4" width="4.9" height="2.7" transform="translate(1037.6 170.3) rotate(69)"/><rect x="-4.5" y="-1.5" width="9.1" height="2.9" transform="translate(904.1 323.7) rotate(-82)"/><rect x="-5" y="-1.8" width="10" height="3.7" transform="translate(866.2 219.2) rotate(-72)"/><rect x="-2.7" y="-1.4" width="5.3" height="2.7" transform="translate(750.5 537.9) rotate(-68)"/><rect x="-3.4" y="-1.3" width="6.7" height="2.6" transform="translate(1018.4 436.5) rotate(58)"/><rect x="-3.9" y="-1.2" width="7.8" height="2.4" transform="translate(1051 482.7) rotate(9)"/><rect x="-4" y="-1.5" width="8" height="3.1" transform="translate(820.6 179.1) rotate(78)"/><rect x="-4.8" y="-1.4" width="9.5" height="2.8" transform="translate(603.1 603.5) rotate(47)"/><rect x="-3.8" y="-1.6" width="7.7" height="3.2" transform="translate(1067.9 301) rotate(-31)"/><rect x="-3.2" y="-1.5" width="6.3" height="3.1" transform="translate(884.9 150.2) rotate(-21)"/><rect x="-3.4" y="-1.5" width="6.8" height="2.9" transform="translate(820.9 276.9) rotate(71)"/><rect x="-4.5" y="-1.5" width="9.1" height="3" transform="translate(873.7 167) rotate(84)"/><rect x="-3" y="-1.2" width="6" height="2.5" transform="translate(431.8 559) rotate(-56)"/><rect x="-5.1" y="-1.1" width="10.2" height="2.2" transform="translate(1043.3 390.5) rotate(13)"/><rect x="-3.1" y="-1.5" width="6.2" height="3" transform="translate(790.3 632.4) rotate(-72)"/><rect x="-3.1" y="-1.6" width="6.3" height="3.3" transform="translate(1163.4 486.2) rotate(-21)"/><rect x="-2.9" y="-1.3" width="5.9" height="2.5" transform="translate(876.4 18.1) rotate(-71)"/><rect x="-4.2" y="-1.3" width="8.4" height="2.6" transform="translate(962 298) rotate(-50)"/><rect x="-3.1" y="-1.6" width="6.1" height="3.2" transform="translate(997 338) rotate(-29)"/><rect x="-3.2" y="-1.3" width="6.3" height="2.5" transform="translate(1156 391.6) rotate(8)"/><rect x="-2.2" y="-1.9" width="4.4" height="3.7" transform="translate(786.6 529.2) rotate(-66)"/><rect x="-3.9" y="-1.3" width="7.9" height="2.7" transform="translate(1000.3 338.2) rotate(67)"/><rect x="-3.4" y="-1.2" width="6.8" height="2.3" transform="translate(1044.1 213) rotate(-76)"/><rect x="-2.5" y="-1.8" width="5" height="3.7" transform="translate(1002.6 56.8) rotate(36)"/><rect x="-3.8" y="-1.2" width="7.6" height="2.4" transform="translate(880.1 416.6) rotate(37)"/></g><g fill="#c8cce6" opacity="0.85"><rect x="-4.4" y="-1.5" width="8.8" height="3" transform="translate(917.2 168.2) rotate(50)"/><rect x="-3.8" y="-1.5" width="7.5" height="2.9" transform="translate(906 605.6) rotate(-77)"/><rect x="-4.8" y="-1.4" width="9.7" height="2.7" transform="translate(661.9 283.5) rotate(-1)"/><rect x="-3.5" y="-1.3" width="7" height="2.7" transform="translate(805 261.5) rotate(-18)"/><rect x="-4.9" y="-1.9" width="9.9" height="3.7" transform="translate(933.9 487) rotate(43)"/><rect x="-3.6" y="-1.4" width="7.1" height="2.8" transform="translate(893.8 331.1) rotate(-68)"/><rect x="-4.1" y="-1.7" width="8.2" height="3.4" transform="translate(1016.7 283.3) rotate(52)"/><rect x="-4.3" y="-1.8" width="8.6" height="3.6" transform="translate(847.4 562.8) rotate(75)"/><rect x="-4.1" y="-1.7" width="8.1" height="3.4" transform="translate(1010.5 291.6) rotate(-31)"/><rect x="-3.4" y="-1.3" width="6.9" height="2.6" transform="translate(1230.7 357.9) rotate(55)"/><rect x="-5.2" y="-1.3" width="10.4" height="2.6" transform="translate(1220.1 699.7) rotate(-18)"/><rect x="-3.5" y="-1.7" width="7" height="3.3" transform="translate(1121.9 634.5) rotate(-17)"/><rect x="-4.5" y="-1.9" width="9" height="3.7" transform="translate(1132 74) rotate(7)"/><rect x="-4.2" y="-1.4" width="8.3" height="2.9" transform="translate(1111.4 138.7) rotate(1)"/><rect x="-3" y="-1.5" width="6.1" height="2.9" transform="translate(1416.6 340.5) rotate(84)"/><rect x="-3.9" y="-1.9" width="7.8" height="3.8" transform="translate(929.6 573) rotate(-25)"/><rect x="-4" y="-1.9" width="8.1" height="3.7" transform="translate(1135.6 410.3) rotate(69)"/><rect x="-3.5" y="-1.4" width="6.9" height="2.8" transform="translate(1324.6 734.9) rotate(58)"/><rect x="-3.9" y="-1.3" width="7.7" height="2.6" transform="translate(1429.1 276.9) rotate(-1)"/><rect x="-3.2" y="-1.2" width="6.4" height="2.4" transform="translate(1123.6 388.9) rotate(38)"/><rect x="-3.7" y="-1.3" width="7.4" height="2.6" transform="translate(1023.3 136.4) rotate(-24)"/><rect x="-2.6" y="-1.7" width="5.3" height="3.3" transform="translate(1044.5 411.1) rotate(-66)"/><rect x="-5" y="-1.7" width="10" height="3.5" transform="translate(956.4 455.4) rotate(-89)"/><rect x="-4.6" y="-1.6" width="9.1" height="3.3" transform="translate(1199.2 256.7) rotate(-5)"/><rect x="-3.1" y="-1.8" width="6.2" height="3.6" transform="translate(1043.7 418.4) rotate(-54)"/><rect x="-5" y="-1.5" width="9.9" height="2.9" transform="translate(773.9 289.8) rotate(-32)"/><rect x="-4.4" y="-1.4" width="8.7" height="2.8" transform="translate(872.7 423.4) rotate(73)"/><rect x="-3.4" y="-1.7" width="6.9" height="3.3" transform="translate(1061 56.6) rotate(44)"/><rect x="-3.4" y="-1.8" width="6.9" height="3.7" transform="translate(968.4 419.6) rotate(28)"/><rect x="-4.1" y="-1.5" width="8.2" height="3" transform="translate(604.2 206.5) rotate(49)"/><rect x="-4.6" y="-1.4" width="9.2" height="2.8" transform="translate(1017.5 509.2) rotate(-18)"/><rect x="-5.1" y="-1.5" width="10.2" height="3" transform="translate(1064 291.1) rotate(-23)"/><rect x="-3.5" y="-1.8" width="7" height="3.7" transform="translate(743.5 301.7) rotate(-73)"/><rect x="-4.2" y="-1.1" width="8.5" height="2.2" transform="translate(1036.9 376.6) rotate(-44)"/><rect x="-2.2" y="-1.3" width="4.3" height="2.6" transform="translate(1173.7 364) rotate(-20)"/><rect x="-4.6" y="-1.3" width="9.3" height="2.7" transform="translate(1027 361.4) rotate(-87)"/><rect x="-3" y="-1.8" width="6" height="3.5" transform="translate(918.6 485.5) rotate(-57)"/><rect x="-3.2" y="-1.7" width="6.5" height="3.4" transform="translate(1101.5 308.2) rotate(-85)"/><rect x="-5.1" y="-1.4" width="10.2" height="2.8" transform="translate(1157.2 697) rotate(61)"/><rect x="-2" y="-1.2" width="4" height="2.4" transform="translate(745.5 447.9) rotate(-37)"/><rect x="-3" y="-1.1" width="6.1" height="2.2" transform="translate(1031.7 587.1) rotate(12)"/><rect x="-4.5" y="-1.5" width="8.9" height="3.1" transform="translate(833.9 352.2) rotate(13)"/><rect x="-2.5" y="-1.5" width="5" height="3" transform="translate(889.5 338.1) rotate(-76)"/><rect x="-4.2" y="-1.4" width="8.5" height="2.8" transform="translate(604.2 591.8) rotate(-28)"/><rect x="-2.3" y="-1.9" width="4.6" height="3.7" transform="translate(791.7 636.4) rotate(81)"/><rect x="-4" y="-1.9" width="8" height="3.8" transform="translate(1230.8 396.7) rotate(-17)"/><rect x="-3.5" y="-1.6" width="7" height="3.3" transform="translate(940.9 651.3) rotate(20)"/><rect x="-4" y="-1.1" width="8" height="2.3" transform="translate(1103.7 172) rotate(-13)"/><rect x="-1.9" y="-1.6" width="3.8" height="3.2" transform="translate(1061.4 548.7) rotate(34)"/><rect x="-4.7" y="-1.3" width="9.3" height="2.6" transform="translate(972.1 233.9) rotate(82)"/><rect x="-4" y="-1.3" width="7.9" height="2.7" transform="translate(1180.3 143.4) rotate(3)"/><rect x="-2.7" y="-1.7" width="5.4" height="3.5" transform="translate(636.2 252.6) rotate(1)"/><rect x="-3.1" y="-1.1" width="6.2" height="2.3" transform="translate(833 272.1) rotate(82)"/><rect x="-3.8" y="-1.7" width="7.5" height="3.3" transform="translate(1185.2 189.8) rotate(69)"/><rect x="-2.6" y="-1.3" width="5.3" height="2.6" transform="translate(668.3 310.2) rotate(-81)"/><rect x="-2.5" y="-1.9" width="5" height="3.7" transform="translate(828.2 443.3) rotate(-88)"/><rect x="-2.3" y="-1.8" width="4.7" height="3.6" transform="translate(1225.8 506.5) rotate(12)"/><rect x="-3.5" y="-1.7" width="6.9" height="3.4" transform="translate(848.9 454.2) rotate(-36)"/><rect x="-2" y="-1.8" width="4" height="3.7" transform="translate(838.9 92.9) rotate(-36)"/><rect x="-5" y="-1.2" width="10" height="2.4" transform="translate(1140.5 390.7) rotate(-66)"/><rect x="-4.2" y="-1.6" width="8.4" height="3.2" transform="translate(1110.3 402.1) rotate(89)"/><rect x="-2" y="-1.3" width="4.1" height="2.6" transform="translate(957.3 253.3) rotate(-82)"/><rect x="-5.1" y="-1.3" width="10.3" height="2.6" transform="translate(1295.4 496.7) rotate(-83)"/><rect x="-4" y="-1.4" width="8" height="2.8" transform="translate(935.6 440) rotate(-37)"/><rect x="-4.9" y="-1.4" width="9.8" height="2.9" transform="translate(769.2 448) rotate(70)"/><rect x="-2.8" y="-1.1" width="5.6" height="2.2" transform="translate(893 459.8) rotate(-54)"/><rect x="-3" y="-1.5" width="6.1" height="3" transform="translate(1117.6 203.4) rotate(-51)"/><rect x="-2.8" y="-1.5" width="5.5" height="3" transform="translate(1245.2 494.7) rotate(34)"/><rect x="-3" y="-1.3" width="5.9" height="2.6" transform="translate(1204 152.7) rotate(-81)"/><rect x="-3.1" y="-1.4" width="6.1" height="2.8" transform="translate(1162.9 377) rotate(-50)"/><rect x="-2.7" y="-1.2" width="5.4" height="2.3" transform="translate(957.3 226.2) rotate(26)"/><rect x="-1.9" y="-1.3" width="3.9" height="2.6" transform="translate(926.3 536) rotate(-41)"/><rect x="-4.6" y="-1.8" width="9.1" height="3.5" transform="translate(1229.9 465.8) rotate(56)"/><rect x="-3.2" y="-1.1" width="6.3" height="2.2" transform="translate(858.3 132.6) rotate(-83)"/><rect x="-4.7" y="-1.8" width="9.4" height="3.5" transform="translate(1355.3 245.6) rotate(16)"/><rect x="-4.5" y="-1.8" width="8.9" height="3.5" transform="translate(907.6 443.9) rotate(17)"/><rect x="-2.5" y="-1.1" width="4.9" height="2.2" transform="translate(979.8 383.1) rotate(56)"/><rect x="-2" y="-1.5" width="4" height="3.1" transform="translate(839.2 483) rotate(-19)"/><rect x="-5" y="-1.6" width="10" height="3.2" transform="translate(887.2 500.3) rotate(-19)"/><rect x="-4.5" y="-1.2" width="9" height="2.4" transform="translate(944.2 92) rotate(-44)"/><rect x="-2.2" y="-1.5" width="4.4" height="3" transform="translate(1110.5 522.5) rotate(19)"/><rect x="-3.2" y="-1.3" width="6.5" height="2.6" transform="translate(887.1 579.3) rotate(-21)"/><rect x="-3.6" y="-1.5" width="7.3" height="3.1" transform="translate(1019.4 365.3) rotate(63)"/><rect x="-5" y="-1.2" width="10.1" height="2.4" transform="translate(694.8 363.5) rotate(-78)"/><rect x="-5" y="-1.7" width="10" height="3.3" transform="translate(1107.8 271.6) rotate(19)"/><rect x="-3.2" y="-1.2" width="6.4" height="2.4" transform="translate(1120.8 358.3) rotate(82)"/><rect x="-5.2" y="-1.4" width="10.3" height="2.7" transform="translate(1318 391) rotate(-77)"/><rect x="-3.6" y="-1.3" width="7.3" height="2.5" transform="translate(1046.1 574.6) rotate(3)"/><rect x="-3.4" y="-1.4" width="6.8" height="2.8" transform="translate(955.4 452.3) rotate(55)"/><rect x="-4" y="-1.7" width="8" height="3.4" transform="translate(1477.2 225) rotate(56)"/><rect x="-5.1" y="-1.7" width="10.1" height="3.4" transform="translate(1228.6 265.2) rotate(39)"/><rect x="-4.9" y="-1.9" width="9.9" height="3.8" transform="translate(1109.5 634.7) rotate(-5)"/><rect x="-4.3" y="-1.6" width="8.5" height="3.1" transform="translate(984.1 345.1) rotate(-83)"/><rect x="-3.2" y="-1.9" width="6.5" height="3.8" transform="translate(1292.6 435.6) rotate(-56)"/><rect x="-4.5" y="-1.2" width="8.9" height="2.3" transform="translate(1017 419.9) rotate(20)"/><rect x="-4.7" y="-1.4" width="9.4" height="2.7" transform="translate(747.5 183.8) rotate(-88)"/><rect x="-1.9" y="-1.2" width="3.8" height="2.5" transform="translate(987.3 569) rotate(63)"/><rect x="-4.6" y="-1.2" width="9.1" height="2.5" transform="translate(969.1 585.3) rotate(68)"/><rect x="-2.1" y="-1.4" width="4.2" height="2.7" transform="translate(954.2 599.4) rotate(2)"/><rect x="-5" y="-1.9" width="9.9" height="3.7" transform="translate(966.1 162.2) rotate(-70)"/><rect x="-4.9" y="-1.1" width="9.7" height="2.2" transform="translate(895.6 478.3) rotate(-44)"/><rect x="-3.9" y="-1.3" width="7.7" height="2.6" transform="translate(738.5 436.4) rotate(-41)"/><rect x="-3.1" y="-1.9" width="6.1" height="3.8" transform="translate(1067.9 411) rotate(-30)"/><rect x="-2.3" y="-1.7" width="4.6" height="3.3" transform="translate(1140.7 633.9) rotate(53)"/><rect x="-1.8" y="-1.5" width="3.7" height="3" transform="translate(1103.2 446.8) rotate(39)"/><rect x="-4.7" y="-1.1" width="9.3" height="2.3" transform="translate(877.3 122.4) rotate(31)"/><rect x="-5" y="-1.5" width="9.9" height="3" transform="translate(1165.4 291.1) rotate(-85)"/><rect x="-3.6" y="-1.3" width="7.2" height="2.6" transform="translate(746 515.6) rotate(2)"/><rect x="-2.9" y="-1.8" width="5.8" height="3.6" transform="translate(1283.8 506.5) rotate(51)"/><rect x="-2.4" y="-1.6" width="4.8" height="3.2" transform="translate(958.7 312.2) rotate(60)"/><rect x="-3.4" y="-1.5" width="6.8" height="3" transform="translate(884.5 600.8) rotate(85)"/><rect x="-3.8" y="-1.6" width="7.6" height="3.2" transform="translate(1154.5 157.8) rotate(-18)"/><rect x="-4.7" y="-1.2" width="9.3" height="2.4" transform="translate(1090.9 458.1) rotate(-51)"/><rect x="-4.9" y="-1.1" width="9.8" height="2.3" transform="translate(990.4 296.2) rotate(41)"/><rect x="-4.5" y="-1.9" width="9" height="3.8" transform="translate(1084.5 630.1) rotate(86)"/><rect x="-4.5" y="-1.5" width="8.9" height="2.9" transform="translate(1047.2 150.2) rotate(73)"/><rect x="-2.2" y="-1.6" width="4.3" height="3.2" transform="translate(842 683.2) rotate(64)"/><rect x="-5.2" y="-1.5" width="10.4" height="3" transform="translate(1333.8 291.5) rotate(-82)"/><rect x="-3.6" y="-1.4" width="7.3" height="2.8" transform="translate(1036.3 663) rotate(80)"/><rect x="-2.6" y="-1.9" width="5.3" height="3.7" transform="translate(1147.3 470.2) rotate(-15)"/><rect x="-1.9" y="-1.4" width="3.9" height="2.8" transform="translate(892.6 549.3) rotate(85)"/><rect x="-4.7" y="-1.3" width="9.4" height="2.6" transform="translate(844.4 508.6) rotate(60)"/><rect x="-4.5" y="-1.4" width="8.9" height="2.9" transform="translate(934.8 469.5) rotate(2)"/><rect x="-3.7" y="-1.4" width="7.4" height="2.7" transform="translate(978.9 507.2) rotate(37)"/><rect x="-4.5" y="-1.4" width="9" height="2.9" transform="translate(860 392.5) rotate(-74)"/><rect x="-4.5" y="-1.3" width="9" height="2.6" transform="translate(898.9 525.3) rotate(34)"/><rect x="-3.2" y="-1.4" width="6.4" height="2.8" transform="translate(922 202.8) rotate(59)"/><rect x="-4.6" y="-1.8" width="9.2" height="3.6" transform="translate(947.7 612.2) rotate(66)"/><rect x="-3.2" y="-1.7" width="6.4" height="3.3" transform="translate(851.2 340.7) rotate(-47)"/><rect x="-4.4" y="-1.7" width="8.8" height="3.3" transform="translate(926.7 709.7) rotate(-24)"/><rect x="-4.1" y="-1.4" width="8.3" height="2.7" transform="translate(886.6 326) rotate(-66)"/><rect x="-4.1" y="-1.6" width="8.2" height="3.2" transform="translate(1240.3 314.2) rotate(-21)"/><rect x="-2" y="-1.3" width="4" height="2.7" transform="translate(1192.5 336.5) rotate(-73)"/><rect x="-3.4" y="-1.8" width="6.8" height="3.6" transform="translate(1038.8 311.9) rotate(26)"/><rect x="-2" y="-1.6" width="4.1" height="3.1" transform="translate(892.7 468) rotate(-4)"/><rect x="-4.1" y="-1.2" width="8.2" height="2.4" transform="translate(1070.8 649.7) rotate(67)"/><rect x="-4.9" y="-1.2" width="9.9" height="2.4" transform="translate(702.4 560.2) rotate(-9)"/><rect x="-4.8" y="-1.7" width="9.6" height="3.4" transform="translate(745.5 526.7) rotate(15)"/><rect x="-3" y="-1.3" width="6" height="2.7" transform="translate(1093.5 544.4) rotate(40)"/><rect x="-3.8" y="-1.2" width="7.7" height="2.5" transform="translate(1276.1 446.7) rotate(0)"/><rect x="-3.1" y="-1.5" width="6.2" height="2.9" transform="translate(958.5 487.7) rotate(-53)"/><rect x="-4.7" y="-1.2" width="9.4" height="2.4" transform="translate(1148.3 294.3) rotate(-17)"/><rect x="-2.7" y="-1.3" width="5.4" height="2.7" transform="translate(1210.2 365.9) rotate(-70)"/><rect x="-4" y="-1.4" width="8.1" height="2.7" transform="translate(939.7 382.7) rotate(25)"/><rect x="-2.5" y="-1.3" width="4.9" height="2.6" transform="translate(1268.3 570.3) rotate(2)"/><rect x="-4.1" y="-1.4" width="8.2" height="2.7" transform="translate(1046.3 471.8) rotate(89)"/><rect x="-2.5" y="-1.2" width="5" height="2.4" transform="translate(1191.1 344.2) rotate(29)"/><rect x="-3.9" y="-1.6" width="7.9" height="3.2" transform="translate(888.5 637.9) rotate(-89)"/><rect x="-4.2" y="-1.7" width="8.5" height="3.4" transform="translate(1182.4 437.4) rotate(22)"/><rect x="-4" y="-1.8" width="8" height="3.6" transform="translate(1012 322.6) rotate(-62)"/><rect x="-2.8" y="-1.8" width="5.7" height="3.7" transform="translate(1085.3 610.8) rotate(-41)"/><rect x="-2.4" y="-1.3" width="4.7" height="2.7" transform="translate(1025.6 351.8) rotate(-11)"/><rect x="-4.2" y="-1.4" width="8.4" height="2.9" transform="translate(1210.7 307.7) rotate(-33)"/><rect x="-5" y="-1.3" width="10" height="2.6" transform="translate(787.1 666.3) rotate(-11)"/><rect x="-2.7" y="-1.6" width="5.4" height="3.2" transform="translate(771.9 402.6) rotate(87)"/><rect x="-4.8" y="-1.6" width="9.6" height="3.2" transform="translate(1183.7 636.3) rotate(-39)"/><rect x="-3.3" y="-1.2" width="6.5" height="2.5" transform="translate(1110.1 518.5) rotate(14)"/><rect x="-3.7" y="-1.6" width="7.4" height="3.1" transform="translate(1084.8 544.4) rotate(-76)"/><rect x="-3.2" y="-1.5" width="6.5" height="3.1" transform="translate(925.5 457) rotate(23)"/><rect x="-2.8" y="-1.6" width="5.6" height="3.2" transform="translate(1232.6 543) rotate(76)"/><rect x="-3.6" y="-1.8" width="7.1" height="3.7" transform="translate(1235.5 301.7) rotate(12)"/><rect x="-3.3" y="-1.4" width="6.6" height="2.9" transform="translate(846.8 189.5) rotate(-89)"/><rect x="-2.1" y="-1.1" width="4.2" height="2.3" transform="translate(1090.3 473.5) rotate(-73)"/><rect x="-3.3" y="-1.1" width="6.7" height="2.3" transform="translate(929.3 199.8) rotate(-78)"/><rect x="-4.1" y="-1.7" width="8.3" height="3.3" transform="translate(1169.6 409.4) rotate(16)"/><rect x="-5.2" y="-1.3" width="10.4" height="2.6" transform="translate(869.9 376.6) rotate(33)"/><rect x="-4.6" y="-1.2" width="9.3" height="2.5" transform="translate(610.2 530.2) rotate(-35)"/><rect x="-3.1" y="-1.6" width="6.2" height="3.2" transform="translate(1445.1 677.5) rotate(-56)"/><rect x="-4.5" y="-1.4" width="9.1" height="2.8" transform="translate(918.6 179.2) rotate(16)"/><rect x="-3.2" y="-1.3" width="6.4" height="2.5" transform="translate(1026 250.1) rotate(-83)"/><rect x="-3.8" y="-1.9" width="7.6" height="3.8" transform="translate(882.4 634.6) rotate(41)"/><rect x="-3.5" y="-1.1" width="7" height="2.2" transform="translate(1105 366.4) rotate(-80)"/><rect x="-4.1" y="-1.5" width="8.1" height="2.9" transform="translate(862.9 128.3) rotate(-83)"/><rect x="-2.7" y="-1.5" width="5.3" height="3" transform="translate(1133.6 346.9) rotate(40)"/><rect x="-2.5" y="-1.6" width="5.1" height="3.1" transform="translate(1001.8 368) rotate(76)"/><rect x="-2.9" y="-1.1" width="5.7" height="2.2" transform="translate(831.7 362.4) rotate(-32)"/><rect x="-3.3" y="-1.8" width="6.6" height="3.6" transform="translate(1025.9 410.1) rotate(22)"/><rect x="-4.5" y="-1.8" width="9" height="3.5" transform="translate(1163 501) rotate(-66)"/><rect x="-3.9" y="-1.2" width="7.8" height="2.4" transform="translate(952.7 520.7) rotate(-44)"/><rect x="-3.5" y="-1.2" width="6.9" height="2.5" transform="translate(1128.9 443.4) rotate(74)"/><rect x="-4.6" y="-1.8" width="9.2" height="3.6" transform="translate(688 516.6) rotate(-82)"/><rect x="-4.1" y="-1.5" width="8.1" height="3.1" transform="translate(947.8 433.1) rotate(-71)"/><rect x="-3.7" y="-1.2" width="7.5" height="2.4" transform="translate(1087.4 326.2) rotate(15)"/><rect x="-3.3" y="-1.3" width="6.5" height="2.5" transform="translate(442.4 442.7) rotate(-76)"/><rect x="-3.6" y="-1.2" width="7.2" height="2.3" transform="translate(684.4 390.2) rotate(-72)"/><rect x="-5" y="-1.5" width="10" height="3" transform="translate(1059.2 207.8) rotate(-63)"/><rect x="-3.2" y="-1.3" width="6.5" height="2.6" transform="translate(763 425.7) rotate(40)"/><rect x="-3.3" y="-1.5" width="6.6" height="3" transform="translate(1046.9 517.9) rotate(-7)"/><rect x="-3.5" y="-1.4" width="7.1" height="2.7" transform="translate(969.6 313.2) rotate(49)"/><rect x="-2.5" y="-1.5" width="5" height="3.1" transform="translate(939.8 538.1) rotate(48)"/><rect x="-3.1" y="-1.8" width="6.1" height="3.6" transform="translate(1217.1 513.1) rotate(-29)"/><rect x="-4.9" y="-1.3" width="9.9" height="2.7" transform="translate(1144.8 549.5) rotate(-2)"/><rect x="-4.1" y="-1.5" width="8.1" height="3" transform="translate(574.3 261.2) rotate(-6)"/><rect x="-4.4" y="-1.4" width="8.7" height="2.7" transform="translate(554.9 560.6) rotate(74)"/><rect x="-4.1" y="-1.2" width="8.2" height="2.3" transform="translate(545.4 284.4) rotate(-59)"/><rect x="-2.1" y="-1.5" width="4.3" height="3" transform="translate(891 237.8) rotate(-23)"/><rect x="-5" y="-1.6" width="9.9" height="3.3" transform="translate(925.9 456.6) rotate(8)"/><rect x="-4" y="-1.6" width="7.9" height="3.2" transform="translate(860.5 254.1) rotate(66)"/><rect x="-3.2" y="-1.5" width="6.3" height="3" transform="translate(617.8 268) rotate(-54)"/><rect x="-4" y="-1.5" width="8.1" height="3.1" transform="translate(934 251.7) rotate(27)"/><rect x="-2.5" y="-1.4" width="5.1" height="2.7" transform="translate(1044.9 658.4) rotate(-2)"/><rect x="-3.2" y="-1.7" width="6.4" height="3.3" transform="translate(942.7 364.8) rotate(-70)"/><rect x="-2.1" y="-1.9" width="4.2" height="3.7" transform="translate(699.7 625.2) rotate(11)"/><rect x="-5.2" y="-1.5" width="10.3" height="3" transform="translate(944.4 395.8) rotate(-82)"/><rect x="-4.8" y="-1.6" width="9.6" height="3.1" transform="translate(1059.1 446.9) rotate(-82)"/><rect x="-4.1" y="-1.6" width="8.3" height="3.1" transform="translate(1150.5 448.2) rotate(-47)"/><rect x="-4.8" y="-1.6" width="9.7" height="3.3" transform="translate(1139.2 348) rotate(54)"/><rect x="-3.2" y="-1.5" width="6.4" height="3" transform="translate(725.1 491.4) rotate(20)"/><rect x="-4.9" y="-1.2" width="9.9" height="2.5" transform="translate(595.5 307) rotate(55)"/><rect x="-3.5" y="-1.6" width="6.9" height="3.2" transform="translate(1106.4 564.3) rotate(-46)"/><rect x="-3.5" y="-1.8" width="7" height="3.5" transform="translate(1117.4 360.5) rotate(-63)"/><rect x="-3" y="-1.5" width="6" height="3" transform="translate(966.7 476.3) rotate(49)"/><rect x="-4.1" y="-1.5" width="8.3" height="3.1" transform="translate(659 458.5) rotate(-59)"/><rect x="-3" y="-1.5" width="6" height="2.9" transform="translate(722.7 278.4) rotate(-53)"/><rect x="-4" y="-1.2" width="8" height="2.4" transform="translate(1119.4 456.9) rotate(17)"/><rect x="-5.1" y="-1.4" width="10.2" height="2.8" transform="translate(1074 294.9) rotate(81)"/><rect x="-3.7" y="-1.2" width="7.5" height="2.4" transform="translate(546 195.3) rotate(33)"/><rect x="-4.9" y="-1.5" width="9.8" height="3.1" transform="translate(965.2 367.7) rotate(-38)"/><rect x="-3.3" y="-1.6" width="6.7" height="3.3" transform="translate(1202.1 549.1) rotate(-48)"/><rect x="-4.2" y="-1.6" width="8.3" height="3.1" transform="translate(1224.3 189) rotate(46)"/><rect x="-3" y="-1.1" width="6" height="2.3" transform="translate(953.4 405.8) rotate(44)"/><rect x="-3.7" y="-1.7" width="7.4" height="3.4" transform="translate(756.6 352.2) rotate(60)"/></g><g fill="#15152c" opacity="0.85"><rect x="-2" y="-1.5" width="4" height="3" transform="translate(696.7 553.2) rotate(30)"/><rect x="-5.2" y="-1.8" width="10.4" height="3.6" transform="translate(1033.5 733.1) rotate(57)"/><rect x="-3" y="-1.7" width="6.1" height="3.5" transform="translate(1108.5 593.7) rotate(-72)"/><rect x="-3.7" y="-1.5" width="7.5" height="3.1" transform="translate(652.3 397.7) rotate(-79)"/><rect x="-4.1" y="-1.8" width="8.3" height="3.6" transform="translate(1049.3 477.7) rotate(20)"/><rect x="-2.1" y="-1.3" width="4.2" height="2.6" transform="translate(1135.1 370.6) rotate(69)"/><rect x="-2.3" y="-1.1" width="4.5" height="2.3" transform="translate(847.9 257.9) rotate(-77)"/><rect x="-3.2" y="-1.3" width="6.4" height="2.6" transform="translate(1045.2 552.6) rotate(-45)"/><rect x="-3" y="-1.8" width="6.1" height="3.7" transform="translate(1162.8 393.1) rotate(-74)"/><rect x="-2.3" y="-1.9" width="4.7" height="3.7" transform="translate(897.1 550) rotate(-88)"/><rect x="-5.2" y="-1.2" width="10.4" height="2.4" transform="translate(992.9 504.8) rotate(36)"/><rect x="-3.4" y="-1.5" width="6.9" height="3.1" transform="translate(1228 551.5) rotate(-32)"/><rect x="-4.6" y="-1.4" width="9.2" height="2.7" transform="translate(865.1 303.3) rotate(-89)"/><rect x="-2.4" y="-1.8" width="4.8" height="3.6" transform="translate(1022.1 487.5) rotate(7)"/><rect x="-4.9" y="-1.3" width="9.8" height="2.7" transform="translate(925.5 319.2) rotate(-23)"/><rect x="-2.6" y="-1.5" width="5.3" height="3" transform="translate(936.7 415.2) rotate(47)"/><rect x="-4.1" y="-1.1" width="8.3" height="2.3" transform="translate(1147.1 508.9) rotate(-75)"/><rect x="-3.8" y="-1.6" width="7.6" height="3.2" transform="translate(825.2 212.1) rotate(79)"/><rect x="-1.9" y="-1.5" width="3.8" height="3" transform="translate(1337.8 229.9) rotate(73)"/><rect x="-5.1" y="-1.8" width="10.3" height="3.7" transform="translate(989.5 446.5) rotate(-74)"/><rect x="-3.8" y="-1.3" width="7.6" height="2.6" transform="translate(931.7 152.1) rotate(-43)"/><rect x="-4.5" y="-1.8" width="8.9" height="3.6" transform="translate(898.6 165.3) rotate(27)"/><rect x="-4.6" y="-1.4" width="9.1" height="2.8" transform="translate(801.9 494.6) rotate(-50)"/><rect x="-3.3" y="-1.5" width="6.6" height="3" transform="translate(1174 474.5) rotate(7)"/><rect x="-2.3" y="-1.6" width="4.6" height="3.2" transform="translate(921.2 295.7) rotate(-82)"/><rect x="-3.3" y="-1.2" width="6.6" height="2.4" transform="translate(1019.9 586.7) rotate(-29)"/><rect x="-4.9" y="-1.4" width="9.9" height="2.7" transform="translate(897.8 67.7) rotate(-21)"/><rect x="-3.7" y="-1.6" width="7.4" height="3.2" transform="translate(902.4 618.3) rotate(59)"/><rect x="-1.9" y="-1.1" width="3.9" height="2.2" transform="translate(1140.9 307.2) rotate(-58)"/><rect x="-2.6" y="-1.1" width="5.3" height="2.2" transform="translate(1089.4 446.5) rotate(-19)"/><rect x="-3.4" y="-1.6" width="6.8" height="3.3" transform="translate(668.4 306.6) rotate(-7)"/><rect x="-3" y="-1.8" width="6" height="3.7" transform="translate(1062.8 615.2) rotate(23)"/><rect x="-5.2" y="-1.6" width="10.3" height="3.1" transform="translate(884.4 471.2) rotate(-65)"/><rect x="-3.8" y="-1.4" width="7.6" height="2.8" transform="translate(1205.4 597.1) rotate(55)"/><rect x="-4.9" y="-1.6" width="9.8" height="3.1" transform="translate(1173.4 203.8) rotate(90)"/><rect x="-4.3" y="-1.2" width="8.6" height="2.4" transform="translate(820.7 589.1) rotate(75)"/><rect x="-3.4" y="-1.6" width="6.8" height="3.1" transform="translate(907.8 362.2) rotate(-26)"/><rect x="-1.8" y="-1.4" width="3.6" height="2.7" transform="translate(939.8 663.1) rotate(-32)"/><rect x="-3.4" y="-1.8" width="6.7" height="3.6" transform="translate(1026.4 634.9) rotate(-42)"/><rect x="-4" y="-1.6" width="8" height="3.1" transform="translate(869.9 172.3) rotate(-52)"/><rect x="-3.5" y="-1.5" width="7.1" height="3" transform="translate(1191.3 243.1) rotate(35)"/><rect x="-3.2" y="-1.2" width="6.4" height="2.4" transform="translate(756.2 366) rotate(-38)"/><rect x="-2.5" y="-1.2" width="5.1" height="2.3" transform="translate(1143.4 211.7) rotate(-41)"/><rect x="-5" y="-1.5" width="10.1" height="2.9" transform="translate(961.4 524.3) rotate(25)"/><rect x="-3.8" y="-1.8" width="7.5" height="3.6" transform="translate(794.1 528) rotate(-64)"/><rect x="-4.3" y="-1.3" width="8.6" height="2.6" transform="translate(988.7 405.9) rotate(-51)"/><rect x="-4.2" y="-1.3" width="8.5" height="2.7" transform="translate(1031.1 429) rotate(-89)"/><rect x="-2.5" y="-1.8" width="5" height="3.5" transform="translate(1006.5 515.1) rotate(37)"/><rect x="-4" y="-1.9" width="8" height="3.8" transform="translate(936.8 473.7) rotate(78)"/><rect x="-5" y="-1.8" width="10" height="3.7" transform="translate(1111.4 417.6) rotate(49)"/><rect x="-4.4" y="-1.7" width="8.8" height="3.3" transform="translate(1018.5 469.1) rotate(53)"/><rect x="-3.3" y="-1.6" width="6.6" height="3.2" transform="translate(868.6 592.2) rotate(55)"/><rect x="-5.1" y="-1.4" width="10.2" height="2.9" transform="translate(621.9 512.6) rotate(6)"/><rect x="-3.3" y="-1.8" width="6.7" height="3.6" transform="translate(405.5 508.6) rotate(-59)"/><rect x="-5" y="-1.2" width="10" height="2.5" transform="translate(944.6 345.4) rotate(49)"/><rect x="-4" y="-1.2" width="7.9" height="2.3" transform="translate(699.8 521.3) rotate(58)"/><rect x="-2.8" y="-1.7" width="5.6" height="3.5" transform="translate(891.3 502.8) rotate(69)"/><rect x="-4" y="-1.6" width="8.1" height="3.2" transform="translate(928.8 308) rotate(-30)"/><rect x="-3.1" y="-1.2" width="6.3" height="2.5" transform="translate(999.1 541.5) rotate(-36)"/><rect x="-4.9" y="-1.2" width="9.7" height="2.4" transform="translate(1010 511.2) rotate(-42)"/><rect x="-1.9" y="-1.8" width="3.7" height="3.7" transform="translate(1115 389.5) rotate(-43)"/><rect x="-1.9" y="-1.4" width="3.7" height="2.8" transform="translate(419.8 471.2) rotate(22)"/><rect x="-5.2" y="-1.2" width="10.3" height="2.5" transform="translate(801.3 278.4) rotate(86)"/><rect x="-2.2" y="-1.3" width="4.3" height="2.7" transform="translate(965 310.7) rotate(85)"/><rect x="-4" y="-1.3" width="8.1" height="2.5" transform="translate(649.8 472.9) rotate(-39)"/><rect x="-2.5" y="-1.5" width="5" height="3" transform="translate(1149.5 349.5) rotate(46)"/><rect x="-3.6" y="-1.3" width="7.1" height="2.6" transform="translate(1060.3 226.7) rotate(-82)"/><rect x="-4.3" y="-1.2" width="8.7" height="2.4" transform="translate(935.4 70.1) rotate(67)"/><rect x="-4.5" y="-1.2" width="9" height="2.4" transform="translate(1125.8 442.8) rotate(36)"/><rect x="-5.2" y="-1.7" width="10.4" height="3.4" transform="translate(966.7 105.8) rotate(-64)"/><rect x="-4.9" y="-1.1" width="9.8" height="2.2" transform="translate(1066.8 430.5) rotate(33)"/><rect x="-3" y="-1.8" width="6" height="3.6" transform="translate(1025.8 276) rotate(-72)"/><rect x="-3.7" y="-1.8" width="7.5" height="3.5" transform="translate(890.9 451.8) rotate(67)"/><rect x="-4.1" y="-1.1" width="8.1" height="2.2" transform="translate(992.7 271.4) rotate(30)"/><rect x="-5.1" y="-1.4" width="10.1" height="2.7" transform="translate(1001.7 122.5) rotate(85)"/><rect x="-4.6" y="-1.7" width="9.1" height="3.4" transform="translate(586.5 437.3) rotate(-36)"/><rect x="-3.5" y="-1.5" width="7.1" height="3" transform="translate(1065.2 473.4) rotate(10)"/><rect x="-4.8" y="-1.5" width="9.5" height="3" transform="translate(986.3 577.4) rotate(-8)"/><rect x="-4.8" y="-1.8" width="9.6" height="3.6" transform="translate(882.2 83) rotate(-64)"/><rect x="-3.1" y="-1.1" width="6.1" height="2.3" transform="translate(1076.8 133.7) rotate(-47)"/><rect x="-5" y="-1.2" width="10" height="2.4" transform="translate(1141.5 321.6) rotate(64)"/><rect x="-4.2" y="-1.3" width="8.4" height="2.6" transform="translate(1401.2 320.3) rotate(87)"/><rect x="-4" y="-1.5" width="7.9" height="3.1" transform="translate(1154.9 338.6) rotate(88)"/><rect x="-4.4" y="-1.1" width="8.7" height="2.2" transform="translate(1169.6 256.3) rotate(20)"/><rect x="-3.8" y="-1.2" width="7.6" height="2.3" transform="translate(886.2 392.1) rotate(82)"/><rect x="-4.1" y="-1.4" width="8.2" height="2.8" transform="translate(834.7 473.1) rotate(70)"/><rect x="-4.1" y="-1.8" width="8.2" height="3.6" transform="translate(1039.1 436.3) rotate(8)"/><rect x="-5.1" y="-1.4" width="10.3" height="2.8" transform="translate(1126.7 495.9) rotate(-74)"/><rect x="-4.5" y="-1.4" width="9" height="2.9" transform="translate(1186.8 631) rotate(10)"/><rect x="-4.5" y="-1.2" width="8.9" height="2.3" transform="translate(1149.8 545.9) rotate(-34)"/><rect x="-4.7" y="-1.5" width="9.5" height="3" transform="translate(1068.3 326.3) rotate(-75)"/><rect x="-4.9" y="-1.1" width="9.8" height="2.2" transform="translate(858.6 291.5) rotate(70)"/></g><g fill="#9ad0c2" opacity="0.85"><rect x="-4.2" y="-1.3" width="8.3" height="2.5" transform="translate(686 438) rotate(-25)"/><rect x="-3" y="-1.4" width="6" height="2.8" transform="translate(827.3 562.7) rotate(81)"/><rect x="-4.4" y="-1.6" width="8.8" height="3.2" transform="translate(1195.5 263.4) rotate(17)"/><rect x="-4.7" y="-1.7" width="9.3" height="3.4" transform="translate(840.5 330.8) rotate(-8)"/><rect x="-3.8" y="-1.7" width="7.6" height="3.4" transform="translate(616.8 362.6) rotate(88)"/><rect x="-2.2" y="-1.6" width="4.4" height="3.2" transform="translate(1193.2 691) rotate(63)"/><rect x="-3.8" y="-1.6" width="7.6" height="3.2" transform="translate(900.3 231.2) rotate(81)"/><rect x="-5.1" y="-1.5" width="10.3" height="2.9" transform="translate(801.5 370.7) rotate(1)"/><rect x="-3.3" y="-1.9" width="6.5" height="3.8" transform="translate(904.5 96.5) rotate(-72)"/><rect x="-4.5" y="-1.6" width="8.9" height="3.2" transform="translate(1210.9 516.3) rotate(84)"/><rect x="-3.1" y="-1.1" width="6.2" height="2.3" transform="translate(892.6 26.1) rotate(53)"/><rect x="-5.1" y="-1.5" width="10.2" height="3" transform="translate(1000.6 379.5) rotate(13)"/><rect x="-4.1" y="-1.7" width="8.2" height="3.4" transform="translate(677.6 234.2) rotate(-43)"/><rect x="-4.5" y="-1.5" width="8.9" height="3" transform="translate(999 339.5) rotate(-87)"/><rect x="-4.2" y="-1.4" width="8.4" height="2.9" transform="translate(987.3 247) rotate(27)"/><rect x="-3.5" y="-1.2" width="7.1" height="2.3" transform="translate(1113.8 346.4) rotate(46)"/><rect x="-2.7" y="-1.7" width="5.4" height="3.5" transform="translate(822.5 252.9) rotate(-4)"/><rect x="-5.2" y="-1.4" width="10.3" height="2.8" transform="translate(807.8 384) rotate(-78)"/><rect x="-3.1" y="-1.6" width="6.2" height="3.1" transform="translate(1102.1 506.2) rotate(-27)"/><rect x="-2.7" y="-1.6" width="5.4" height="3.2" transform="translate(987.1 233.9) rotate(-86)"/><rect x="-3.4" y="-1.1" width="6.8" height="2.2" transform="translate(1350.7 565.1) rotate(-8)"/><rect x="-3.4" y="-1.2" width="6.8" height="2.5" transform="translate(906.4 382.1) rotate(0)"/><rect x="-1.8" y="-1.6" width="3.7" height="3.2" transform="translate(1360.2 147.5) rotate(-74)"/><rect x="-3" y="-1.3" width="6.1" height="2.6" transform="translate(1215.2 642.8) rotate(-25)"/><rect x="-3.4" y="-1.6" width="6.8" height="3.2" transform="translate(1063.9 163.2) rotate(-63)"/><rect x="-3.5" y="-1.4" width="7" height="2.8" transform="translate(1420 671.2) rotate(14)"/><rect x="-4.2" y="-1.9" width="8.3" height="3.7" transform="translate(972.5 233.1) rotate(-63)"/><rect x="-2.5" y="-1.6" width="5" height="3.2" transform="translate(1326.2 396.9) rotate(26)"/><rect x="-4.1" y="-1.3" width="8.2" height="2.6" transform="translate(971.9 213.7) rotate(51)"/><rect x="-3.4" y="-1.4" width="6.7" height="2.8" transform="translate(1035.1 199.6) rotate(6)"/><rect x="-2.8" y="-1.6" width="5.5" height="3.2" transform="translate(1208 106.7) rotate(33)"/><rect x="-4.4" y="-1.7" width="8.8" height="3.3" transform="translate(1109.1 651.2) rotate(-37)"/><rect x="-4" y="-1.4" width="8.1" height="2.9" transform="translate(738.6 389.1) rotate(-70)"/><rect x="-3.9" y="-1.4" width="7.9" height="2.7" transform="translate(1132.3 355.9) rotate(69)"/><rect x="-4.1" y="-1.1" width="8.3" height="2.2" transform="translate(1106.6 456.9) rotate(-5)"/><rect x="-2.8" y="-1.7" width="5.5" height="3.3" transform="translate(1111.5 583.8) rotate(73)"/></g><g fill="#e0a492" opacity="0.85"><rect x="-3.8" y="-1.3" width="7.6" height="2.6" transform="translate(562.5 353.4) rotate(0)"/><rect x="-4.1" y="-1.4" width="8.1" height="2.7" transform="translate(1052.2 441.6) rotate(87)"/><rect x="-4.3" y="-1.7" width="8.5" height="3.4" transform="translate(1006.5 181.9) rotate(-10)"/><rect x="-4.5" y="-1.4" width="9" height="2.7" transform="translate(1130.8 169) rotate(-8)"/><rect x="-2.6" y="-1.2" width="5.1" height="2.5" transform="translate(779.2 554.6) rotate(-70)"/><rect x="-2" y="-1.1" width="4" height="2.2" transform="translate(1132.6 326.5) rotate(35)"/><rect x="-3.6" y="-1.8" width="7.2" height="3.6" transform="translate(1102.5 419.8) rotate(-22)"/><rect x="-3.7" y="-1.4" width="7.5" height="2.7" transform="translate(785 129.4) rotate(16)"/><rect x="-4.8" y="-1.2" width="9.6" height="2.5" transform="translate(564 481.8) rotate(-76)"/><rect x="-2.4" y="-1.5" width="4.8" height="3" transform="translate(968.9 488.8) rotate(2)"/><rect x="-3.5" y="-1.7" width="6.9" height="3.3" transform="translate(725.9 285.5) rotate(9)"/><rect x="-4.7" y="-1.7" width="9.3" height="3.4" transform="translate(1074.3 198.6) rotate(-4)"/><rect x="-2.9" y="-1.3" width="5.9" height="2.6" transform="translate(1254.5 714) rotate(-71)"/><rect x="-4.1" y="-1.3" width="8.2" height="2.5" transform="translate(1342.3 352.6) rotate(-84)"/><rect x="-4.5" y="-1.2" width="9" height="2.4" transform="translate(814.7 484.4) rotate(5)"/><rect x="-3.7" y="-1.6" width="7.4" height="3.2" transform="translate(758.1 218.9) rotate(-50)"/><rect x="-3.6" y="-1.3" width="7.2" height="2.6" transform="translate(739.2 506.3) rotate(-67)"/><rect x="-2.4" y="-1.3" width="4.8" height="2.5" transform="translate(1105.5 428.7) rotate(85)"/><rect x="-2.4" y="-1.8" width="4.8" height="3.6" transform="translate(548.9 521.6) rotate(-12)"/><rect x="-3.4" y="-1.8" width="6.8" height="3.5" transform="translate(971.8 321.1) rotate(-14)"/><rect x="-4" y="-1.9" width="8" height="3.7" transform="translate(1211.1 518.8) rotate(29)"/><rect x="-5.2" y="-1.2" width="10.5" height="2.5" transform="translate(1171.9 291.4) rotate(87)"/><rect x="-4.6" y="-1.3" width="9.1" height="2.6" transform="translate(1005.4 227.7) rotate(-5)"/><rect x="-3.8" y="-1.8" width="7.6" height="3.7" transform="translate(977.5 251.5) rotate(-38)"/><rect x="-3.2" y="-1.8" width="6.3" height="3.5" transform="translate(787.6 621.3) rotate(-89)"/><rect x="-5.2" y="-1.8" width="10.4" height="3.6" transform="translate(795.5 310.1) rotate(-56)"/><rect x="-3" y="-1.5" width="6" height="3.1" transform="translate(920 412.4) rotate(-32)"/><rect x="-4.7" y="-1.3" width="9.5" height="2.5" transform="translate(1252.2 475.8) rotate(87)"/><rect x="-5.1" y="-1.8" width="10.1" height="3.7" transform="translate(901.3 281.3) rotate(50)"/><rect x="-2.7" y="-1.7" width="5.4" height="3.4" transform="translate(894.1 326.2) rotate(34)"/><rect x="-1.8" y="-1.7" width="3.6" height="3.5" transform="translate(631.3 254.4) rotate(56)"/><rect x="-4.8" y="-1.9" width="9.5" height="3.7" transform="translate(799.7 449.3) rotate(-3)"/><rect x="-4.1" y="-1.9" width="8.2" height="3.8" transform="translate(1202.5 293) rotate(44)"/><rect x="-3.4" y="-1.1" width="6.7" height="2.3" transform="translate(735.1 409.4) rotate(-75)"/><rect x="-3" y="-1.9" width="6" height="3.8" transform="translate(1134.8 485.4) rotate(23)"/><rect x="-4.3" y="-1.1" width="8.6" height="2.2" transform="translate(1106.1 190.1) rotate(-43)"/><rect x="-4.3" y="-1.4" width="8.6" height="2.8" transform="translate(1088.3 314.6) rotate(47)"/><rect x="-2.5" y="-1.8" width="5" height="3.5" transform="translate(793.6 401.3) rotate(-14)"/><rect x="-3.8" y="-1.5" width="7.6" height="3" transform="translate(623.8 322.2) rotate(-55)"/><rect x="-4.2" y="-1.2" width="8.4" height="2.5" transform="translate(1054.7 470.8) rotate(-73)"/><rect x="-3.1" y="-1.7" width="6.3" height="3.4" transform="translate(1074.6 425.6) rotate(-64)"/><rect x="-4.4" y="-1.7" width="8.7" height="3.3" transform="translate(1329.7 292.5) rotate(-41)"/><rect x="-3.6" y="-1.6" width="7.1" height="3.3" transform="translate(876.3 376.3) rotate(-10)"/><rect x="-2.6" y="-1.5" width="5.2" height="3" transform="translate(785.7 436.8) rotate(87)"/><rect x="-4.7" y="-1.4" width="9.4" height="2.8" transform="translate(1331.3 342.8) rotate(-87)"/><rect x="-3.3" y="-1.1" width="6.6" height="2.3" transform="translate(948.6 114) rotate(31)"/><rect x="-3.3" y="-1.1" width="6.6" height="2.3" transform="translate(1109.5 491.6) rotate(42)"/><rect x="-4.6" y="-1.2" width="9.3" height="2.3" transform="translate(950.9 169.9) rotate(42)"/><rect x="-3.4" y="-1.2" width="6.8" height="2.4" transform="translate(1249.1 594.4) rotate(25)"/><rect x="-3.2" y="-1.3" width="6.5" height="2.7" transform="translate(1065 276.6) rotate(-45)"/><rect x="-3" y="-1.2" width="6" height="2.3" transform="translate(1172.2 184.1) rotate(82)"/><rect x="-3" y="-1.7" width="5.9" height="3.4" transform="translate(1163.2 509.6) rotate(37)"/><rect x="-4.2" y="-1.2" width="8.4" height="2.4" transform="translate(1090.2 337) rotate(-1)"/><rect x="-3.3" y="-1.9" width="6.6" height="3.8" transform="translate(997.3 364.9) rotate(21)"/><rect x="-3.4" y="-1.4" width="6.7" height="2.7" transform="translate(1187.4 336.2) rotate(-76)"/><rect x="-3.2" y="-1.8" width="6.4" height="3.6" transform="translate(1111.1 416.9) rotate(43)"/></g><g fill="#ece2b4" opacity="0.85"><rect x="-4.1" y="-1.2" width="8.2" height="2.5" transform="translate(1038.8 98.2) rotate(-30)"/><rect x="-4.8" y="-1.1" width="9.7" height="2.2" transform="translate(979.4 160.2) rotate(54)"/><rect x="-3.3" y="-1.8" width="6.6" height="3.5" transform="translate(510.9 331.1) rotate(70)"/><rect x="-5.1" y="-1.2" width="10.3" height="2.3" transform="translate(691.3 210.8) rotate(-71)"/><rect x="-4.8" y="-1.5" width="9.5" height="3" transform="translate(992.1 132.6) rotate(-49)"/><rect x="-4" y="-1.8" width="8.1" height="3.7" transform="translate(768.7 189.8) rotate(84)"/><rect x="-3.1" y="-1.4" width="6.2" height="2.8" transform="translate(1466.4 510.8) rotate(61)"/><rect x="-4.8" y="-1.7" width="9.6" height="3.3" transform="translate(1056 558.2) rotate(-85)"/><rect x="-4.4" y="-1.8" width="8.9" height="3.6" transform="translate(940.1 513.6) rotate(-60)"/><rect x="-3.3" y="-1.4" width="6.6" height="2.8" transform="translate(824.9 86.7) rotate(81)"/><rect x="-2.7" y="-1.8" width="5.4" height="3.6" transform="translate(1128.8 301) rotate(-86)"/><rect x="-3.4" y="-1.2" width="6.9" height="2.4" transform="translate(874.1 495.9) rotate(51)"/><rect x="-3.3" y="-1.8" width="6.6" height="3.7" transform="translate(809.1 157.9) rotate(-8)"/><rect x="-5" y="-1.8" width="10" height="3.5" transform="translate(1048.2 470.8) rotate(-87)"/><rect x="-4.3" y="-1.8" width="8.5" height="3.6" transform="translate(990.7 645.8) rotate(78)"/><rect x="-2.8" y="-1.8" width="5.5" height="3.7" transform="translate(1145.2 90.8) rotate(-58)"/><rect x="-4.8" y="-1.6" width="9.7" height="3.2" transform="translate(1227 218.9) rotate(-66)"/><rect x="-2.2" y="-1.8" width="4.4" height="3.7" transform="translate(1086 468.3) rotate(-43)"/><rect x="-3.5" y="-1.3" width="7.1" height="2.6" transform="translate(1184.8 564.5) rotate(6)"/><rect x="-3.5" y="-1.1" width="6.9" height="2.2" transform="translate(696.5 720.7) rotate(72)"/><rect x="-3.8" y="-1.8" width="7.7" height="3.6" transform="translate(888.7 347.5) rotate(-12)"/><rect x="-3.4" y="-1.3" width="6.8" height="2.5" transform="translate(915 301.3) rotate(38)"/><rect x="-3" y="-1.6" width="5.9" height="3.2" transform="translate(1231.7 561.8) rotate(67)"/><rect x="-4.2" y="-1.5" width="8.3" height="3.1" transform="translate(991 661.7) rotate(-6)"/><rect x="-1.8" y="-1.8" width="3.6" height="3.7" transform="translate(965.2 517) rotate(-46)"/><rect x="-4.2" y="-1.3" width="8.4" height="2.6" transform="translate(1017.3 301.1) rotate(-56)"/><rect x="-3.1" y="-1.4" width="6.1" height="2.8" transform="translate(820.8 333.1) rotate(-30)"/><rect x="-2.6" y="-1.7" width="5.3" height="3.5" transform="translate(937.2 481.3) rotate(33)"/><rect x="-3.4" y="-1.2" width="6.8" height="2.5" transform="translate(844.6 445.1) rotate(-8)"/><rect x="-3.1" y="-1.2" width="6.2" height="2.4" transform="translate(1129.5 101.5) rotate(-71)"/><rect x="-4.8" y="-1.4" width="9.6" height="2.8" transform="translate(1109.7 709.4) rotate(57)"/><rect x="-3.7" y="-1.5" width="7.5" height="2.9" transform="translate(838.8 601.6) rotate(-57)"/><rect x="-4.3" y="-1.2" width="8.7" height="2.4" transform="translate(868.6 536.6) rotate(-29)"/><rect x="-2.9" y="-1.3" width="5.9" height="2.7" transform="translate(867 557.7) rotate(33)"/><rect x="-4" y="-1.6" width="8" height="3.1" transform="translate(879.5 373.1) rotate(39)"/><rect x="-4.6" y="-1.5" width="9.2" height="3" transform="translate(1001.4 271.7) rotate(37)"/><rect x="-2" y="-1.8" width="4.1" height="3.5" transform="translate(698.4 347.7) rotate(-34)"/><rect x="-4.4" y="-1.3" width="8.8" height="2.6" transform="translate(1104.7 219.5) rotate(-17)"/><rect x="-4.8" y="-1.5" width="9.6" height="2.9" transform="translate(962.5 528.8) rotate(29)"/><rect x="-3.7" y="-1.8" width="7.4" height="3.7" transform="translate(1016.2 448.5) rotate(-1)"/></g><g fill="#e0bc8c" opacity="0.85"><rect x="-4.1" y="-1.6" width="8.2" height="3.3" transform="translate(788.6 406.9) rotate(21)"/><rect x="-3.4" y="-1.8" width="6.8" height="3.7" transform="translate(1129.4 331.1) rotate(-84)"/><rect x="-3.1" y="-1.5" width="6.3" height="3" transform="translate(886.9 564.8) rotate(56)"/><rect x="-4" y="-1.7" width="8" height="3.5" transform="translate(950.8 633.8) rotate(-42)"/><rect x="-3.9" y="-1.4" width="7.8" height="2.8" transform="translate(851.4 275.1) rotate(-74)"/><rect x="-3.7" y="-1.4" width="7.4" height="2.9" transform="translate(839.3 345.6) rotate(-12)"/><rect x="-4" y="-1.1" width="8" height="2.2" transform="translate(596.2 211.1) rotate(17)"/><rect x="-4.2" y="-1.3" width="8.4" height="2.6" transform="translate(1138.4 554.7) rotate(-21)"/><rect x="-2.9" y="-1.9" width="5.8" height="3.8" transform="translate(572.4 390.8) rotate(-53)"/><rect x="-2.9" y="-1.5" width="5.8" height="3" transform="translate(1008.1 654.9) rotate(27)"/><rect x="-2" y="-1.6" width="4.1" height="3.3" transform="translate(967.4 316.5) rotate(-29)"/><rect x="-4.8" y="-1.5" width="9.7" height="2.9" transform="translate(983.3 513.5) rotate(59)"/><rect x="-3.8" y="-1.6" width="7.6" height="3.3" transform="translate(921 228.5) rotate(-36)"/><rect x="-3.7" y="-1.3" width="7.4" height="2.6" transform="translate(894.1 115.8) rotate(-51)"/><rect x="-3.3" y="-1.6" width="6.6" height="3.1" transform="translate(1199.5 553.1) rotate(-23)"/><rect x="-5.1" y="-1.5" width="10.2" height="3" transform="translate(770.4 573.8) rotate(17)"/><rect x="-3.2" y="-1.3" width="6.4" height="2.6" transform="translate(859.4 295.2) rotate(-10)"/><rect x="-2.8" y="-1.2" width="5.5" height="2.3" transform="translate(1241.6 257.2) rotate(-88)"/><rect x="-2.5" y="-1.9" width="5.1" height="3.7" transform="translate(848.1 273.3) rotate(6)"/><rect x="-3" y="-1.3" width="6" height="2.5" transform="translate(901.8 268.9) rotate(-62)"/><rect x="-3.3" y="-1.2" width="6.6" height="2.3" transform="translate(977.6 285.2) rotate(-36)"/><rect x="-1.8" y="-1.5" width="3.6" height="2.9" transform="translate(597.6 287.4) rotate(24)"/><rect x="-2.8" y="-1.3" width="5.6" height="2.6" transform="translate(1066.3 389.5) rotate(-24)"/><rect x="-3" y="-1.2" width="6" height="2.4" transform="translate(1208.6 495.8) rotate(-11)"/><rect x="-3.6" y="-1.5" width="7.2" height="3" transform="translate(860.3 331) rotate(-15)"/><rect x="-3.4" y="-1.4" width="6.8" height="2.9" transform="translate(1080 216.2) rotate(-17)"/><rect x="-2.9" y="-1.6" width="5.8" height="3.2" transform="translate(1112.3 350.2) rotate(90)"/><rect x="-3.5" y="-1.3" width="7.1" height="2.7" transform="translate(1021.9 158.5) rotate(-19)"/><rect x="-3.5" y="-1.8" width="7.1" height="3.5" transform="translate(1128.9 451.3) rotate(70)"/><rect x="-2.5" y="-1.4" width="4.9" height="2.8" transform="translate(786.6 467.3) rotate(36)"/><rect x="-4.3" y="-1.3" width="8.6" height="2.5" transform="translate(1024.5 563) rotate(-79)"/><rect x="-2.4" y="-1.4" width="4.9" height="2.7" transform="translate(1119.6 343.2) rotate(71)"/><rect x="-4.6" y="-1.1" width="9.1" height="2.3" transform="translate(1041.3 129.4) rotate(12)"/><rect x="-3.8" y="-1.6" width="7.6" height="3.2" transform="translate(960.6 494.6) rotate(-8)"/><rect x="-4.1" y="-1.7" width="8.1" height="3.4" transform="translate(1124 463.1) rotate(77)"/><rect x="-3.2" y="-1.1" width="6.4" height="2.2" transform="translate(1264 261.3) rotate(17)"/><rect x="-4.2" y="-1.2" width="8.5" height="2.5" transform="translate(1267.3 682.7) rotate(76)"/><rect x="-2.8" y="-1.3" width="5.5" height="2.6" transform="translate(943.3 590.7) rotate(-3)"/><rect x="-2.1" y="-1.6" width="4.2" height="3.1" transform="translate(667.5 544.5) rotate(-5)"/><rect x="-4.2" y="-1.8" width="8.5" height="3.5" transform="translate(1260.4 304.6) rotate(23)"/><rect x="-5.1" y="-1.2" width="10.2" height="2.4" transform="translate(914.6 426.7) rotate(-82)"/><rect x="-3.5" y="-1.5" width="7" height="3" transform="translate(820.8 521.2) rotate(-25)"/><rect x="-3.7" y="-1.3" width="7.3" height="2.6" transform="translate(985 20.5) rotate(-64)"/></g><rect x="0" y="640" width="1996" height="491" fill="url(#scrowd)"/><g fill="#0b0d2e"><path d="M645.4 697.7 L644.4 629 L650.7 629 L659.4 697.7Z"/><ellipse cx="647.5" cy="624" rx="5.2" ry="7.4"/><rect x="642.5" y="610.7" width="2.4" height="8.4" rx="1.2"/><rect x="646.3" y="610.7" width="2.4" height="8.4" rx="1.2"/><rect x="650.2" y="610.7" width="2.4" height="8.4" rx="1.2"/><path d="M955.2 699.8 L953.7 624.7 L960 624.7 L969.2 699.8Z"/><ellipse cx="956.9" cy="619.7" rx="5.2" ry="7.4"/><rect x="951.8" y="606.4" width="2.4" height="8.4" rx="1.2"/><rect x="955.7" y="606.4" width="2.4" height="8.4" rx="1.2"/><rect x="959.5" y="606.4" width="2.4" height="8.4" rx="1.2"/><path d="M972.6 700.1 L971.9 623.3 L978.2 623.3 L986.6 700.1Z"/><ellipse cx="975.1" cy="618.3" rx="5.2" ry="7.4"/><rect x="970" y="605" width="2.4" height="8.4" rx="1.2"/><rect x="973.9" y="605" width="2.4" height="8.4" rx="1.2"/><rect x="977.7" y="605" width="2.4" height="8.4" rx="1.2"/><path d="M1032.9 701.2 L1038.8 635.5 L1045.1 635.5 L1046.9 701.2Z"/><ellipse cx="1042" cy="630.5" rx="5.2" ry="7.4"/><rect x="1036.9" y="617.2" width="2.4" height="8.4" rx="1.2"/><rect x="1040.8" y="617.2" width="2.4" height="8.4" rx="1.2"/><rect x="1044.6" y="617.2" width="2.4" height="8.4" rx="1.2"/><path d="M1067.3 697 L1073.3 598.1 L1079.6 598.1 L1081.3 697Z"/><ellipse cx="1076.5" cy="593.1" rx="5.2" ry="7.4"/><rect x="1071.4" y="579.8" width="2.4" height="8.4" rx="1.2"/><rect x="1075.3" y="579.8" width="2.4" height="8.4" rx="1.2"/><rect x="1079.1" y="579.8" width="2.4" height="8.4" rx="1.2"/><path d="M1129.2 695.9 L1136.5 594.9 L1142.8 594.9 L1143.2 695.9Z"/><ellipse cx="1139.6" cy="589.9" rx="5.2" ry="7.4"/><rect x="1134.6" y="576.6" width="2.4" height="8.4" rx="1.2"/><rect x="1138.4" y="576.6" width="2.4" height="8.4" rx="1.2"/><rect x="1142.3" y="576.6" width="2.4" height="8.4" rx="1.2"/><path d="M1370.3 701.8 L1382.6 637 L1388.9 637 L1384.3 701.8Z"/><ellipse cx="1385.8" cy="632" rx="5.2" ry="7.4"/><rect x="1380.7" y="618.7" width="2.4" height="8.4" rx="1.2"/><rect x="1384.6" y="618.7" width="2.4" height="8.4" rx="1.2"/><rect x="1388.4" y="618.7" width="2.4" height="8.4" rx="1.2"/><path d="M1398.4 691.4 L1390 588 L1396.3 588 L1412.4 691.4Z"/><ellipse cx="1393.2" cy="583" rx="5.2" ry="7.4"/><rect x="1388.1" y="569.7" width="2.4" height="8.4" rx="1.2"/><rect x="1392" y="569.7" width="2.4" height="8.4" rx="1.2"/><rect x="1395.8" y="569.7" width="2.4" height="8.4" rx="1.2"/><path d="M966.2 738.1 L971.2 687.8 L978.9 687.8 L983.2 738.1Z"/><ellipse cx="975.1" cy="682.8" rx="6.4" ry="8.9"/><rect x="969.2" y="666.7" width="2.4" height="10.2" rx="1.2"/><rect x="973.9" y="666.7" width="2.4" height="10.2" rx="1.2"/><rect x="978.5" y="666.7" width="2.4" height="10.2" rx="1.2"/><path d="M1122.9 716.2 L1130.3 637.3 L1138 637.3 L1139.9 716.2Z"/><ellipse cx="1134.2" cy="632.3" rx="6.4" ry="8.9"/><rect x="1128.3" y="616.1" width="2.4" height="10.2" rx="1.2"/><rect x="1133" y="616.1" width="2.4" height="10.2" rx="1.2"/><rect x="1137.6" y="616.1" width="2.4" height="10.2" rx="1.2"/><path d="M1188.4 730.9 L1201.5 628.8 L1209.1 628.8 L1205.4 730.9Z"/><ellipse cx="1205.3" cy="623.8" rx="6.4" ry="8.9"/><rect x="1199.4" y="607.6" width="2.4" height="10.2" rx="1.2"/><rect x="1204.1" y="607.6" width="2.4" height="10.2" rx="1.2"/><rect x="1208.8" y="607.6" width="2.4" height="10.2" rx="1.2"/><path d="M1312.3 723.7 L1295.2 630.5 L1302.9 630.5 L1329.3 723.7Z"/><ellipse cx="1299.1" cy="625.5" rx="6.4" ry="8.9"/><rect x="1293.2" y="609.3" width="2.4" height="10.2" rx="1.2"/><rect x="1297.9" y="609.3" width="2.4" height="10.2" rx="1.2"/><rect x="1302.5" y="609.3" width="2.4" height="10.2" rx="1.2"/><path d="M594 768.2 L610.4 695.1 L619.4 695.1 L614 768.2Z"/><ellipse cx="614.9" cy="690.1" rx="7.5" ry="10.5"/><rect x="608.2" y="671.1" width="2.4" height="12" rx="1.2"/><rect x="613.7" y="671.1" width="2.4" height="12" rx="1.2"/><rect x="619.2" y="671.1" width="2.4" height="12" rx="1.2"/><path d="M1237.3 778.8 L1233.4 731.2 L1242.4 731.2 L1257.3 778.8Z"/><ellipse cx="1237.9" cy="726.2" rx="7.5" ry="10.5"/><rect x="1231.2" y="707.2" width="2.4" height="12" rx="1.2"/><rect x="1236.7" y="707.2" width="2.4" height="12" rx="1.2"/><rect x="1242.2" y="707.2" width="2.4" height="12" rx="1.2"/><path d="M1379.7 787.6 L1402.8 704.1 L1411.8 704.1 L1399.7 787.6Z"/><ellipse cx="1407.3" cy="699.1" rx="7.5" ry="10.5"/><rect x="1400.6" y="680.1" width="2.4" height="12" rx="1.2"/><rect x="1406.1" y="680.1" width="2.4" height="12" rx="1.2"/><rect x="1411.6" y="680.1" width="2.4" height="12" rx="1.2"/></g><ellipse cx="561.4" cy="701.8" rx="41.8" ry="27.3" fill="#33509e" opacity="0.19"/><circle cx="561.4" cy="660.4" r="18.2" fill="#33509e" opacity="0.19"/><ellipse cx="561.4" cy="703.8" rx="41.8" ry="27.3" fill="#0a0d2c"/><circle cx="561.4" cy="662.9" r="18.2" fill="#0a0d2c"/><ellipse cx="641.7" cy="700.3" rx="39.2" ry="25.6" fill="#33509e" opacity="0.21"/><circle cx="641.7" cy="661.5" r="17" fill="#33509e" opacity="0.21"/><ellipse cx="641.7" cy="702.3" rx="39.2" ry="25.6" fill="#0a0d2c"/><circle cx="641.7" cy="664" r="17" fill="#0a0d2c"/><ellipse cx="705.8" cy="714.7" rx="44.1" ry="28.8" fill="#33509e" opacity="0.23"/><circle cx="705.8" cy="671.1" r="19.2" fill="#33509e" opacity="0.23"/><ellipse cx="705.8" cy="716.7" rx="44.1" ry="28.8" fill="#0a0d2c"/><circle cx="705.8" cy="673.6" r="19.2" fill="#0a0d2c"/><ellipse cx="844" cy="701.7" rx="35.3" ry="23" fill="#33509e" opacity="0.26"/><circle cx="844" cy="666.6" r="15.4" fill="#33509e" opacity="0.26"/><ellipse cx="844" cy="703.7" rx="35.3" ry="23" fill="#0a0d2c"/><circle cx="844" cy="669.1" r="15.4" fill="#0a0d2c"/><ellipse cx="974" cy="705.4" rx="36.4" ry="23.7" fill="#33509e" opacity="0.30"/><circle cx="974" cy="669.4" r="15.8" fill="#33509e" opacity="0.30"/><ellipse cx="974" cy="707.4" rx="36.4" ry="23.7" fill="#0a0d2c"/><circle cx="974" cy="671.9" r="15.8" fill="#0a0d2c"/><ellipse cx="1043.5" cy="691.7" rx="38.7" ry="25.2" fill="#33509e" opacity="0.28"/><circle cx="1043.5" cy="653.3" r="16.8" fill="#33509e" opacity="0.28"/><ellipse cx="1043.5" cy="693.7" rx="38.7" ry="25.2" fill="#0a0d2c"/><circle cx="1043.5" cy="655.8" r="16.8" fill="#0a0d2c"/><ellipse cx="1107.3" cy="687.7" rx="34.3" ry="22.4" fill="#33509e" opacity="0.26"/><circle cx="1107.3" cy="653.6" r="14.9" fill="#33509e" opacity="0.26"/><ellipse cx="1107.3" cy="689.7" rx="34.3" ry="22.4" fill="#0a0d2c"/><circle cx="1107.3" cy="656.1" r="14.9" fill="#0a0d2c"/><ellipse cx="1247.2" cy="699.1" rx="32.1" ry="20.9" fill="#33509e" opacity="0.23"/><circle cx="1247.2" cy="667.2" r="13.9" fill="#33509e" opacity="0.23"/><ellipse cx="1247.2" cy="701.1" rx="32.1" ry="20.9" fill="#0a0d2c"/><circle cx="1247.2" cy="669.7" r="13.9" fill="#0a0d2c"/><ellipse cx="-32.9" cy="709.4" rx="29.7" ry="19.4" fill="#33509e" opacity="0.03"/><circle cx="-32.9" cy="679.8" r="12.9" fill="#33509e" opacity="0.03"/><ellipse cx="-32.9" cy="711.4" rx="29.7" ry="19.4" fill="#0a0d2c"/><circle cx="-32.9" cy="682.3" r="12.9" fill="#0a0d2c"/><ellipse cx="14.4" cy="722.1" rx="31" ry="20.2" fill="#33509e" opacity="0.04"/><circle cx="14.4" cy="691.2" r="13.5" fill="#33509e" opacity="0.04"/><ellipse cx="14.4" cy="724.1" rx="31" ry="20.2" fill="#0a0d2c"/><circle cx="14.4" cy="693.7" r="13.5" fill="#0a0d2c"/><ellipse cx="45.3" cy="730" rx="40.6" ry="26.5" fill="#33509e" opacity="0.05"/><circle cx="45.3" cy="689.8" r="17.6" fill="#33509e" opacity="0.05"/><ellipse cx="45.3" cy="732" rx="40.6" ry="26.5" fill="#0a0d2c"/><circle cx="45.3" cy="692.3" r="17.6" fill="#0a0d2c"/><ellipse cx="76.4" cy="733" rx="39.8" ry="25.9" fill="#33509e" opacity="0.06"/><circle cx="76.4" cy="693.6" r="17.3" fill="#33509e" opacity="0.06"/><ellipse cx="76.4" cy="735" rx="39.8" ry="25.9" fill="#0a0d2c"/><circle cx="76.4" cy="696.1" r="17.3" fill="#0a0d2c"/><ellipse cx="116.8" cy="713" rx="29" ry="18.9" fill="#33509e" opacity="0.07"/><circle cx="116.8" cy="684.1" r="12.6" fill="#33509e" opacity="0.07"/><ellipse cx="116.8" cy="715" rx="29" ry="18.9" fill="#0a0d2c"/><circle cx="116.8" cy="686.6" r="12.6" fill="#0a0d2c"/><ellipse cx="144.2" cy="724.5" rx="30.9" ry="20.1" fill="#33509e" opacity="0.08"/><circle cx="144.2" cy="693.8" r="13.4" fill="#33509e" opacity="0.08"/><ellipse cx="144.2" cy="726.5" rx="30.9" ry="20.1" fill="#0a0d2c"/><circle cx="144.2" cy="696.3" r="13.4" fill="#0a0d2c"/><ellipse cx="186.9" cy="719.7" rx="39" ry="25.4" fill="#33509e" opacity="0.09"/><circle cx="186.9" cy="681.1" r="16.9" fill="#33509e" opacity="0.09"/><ellipse cx="186.9" cy="721.7" rx="39" ry="25.4" fill="#0a0d2c"/><circle cx="186.9" cy="683.6" r="16.9" fill="#0a0d2c"/><ellipse cx="227.1" cy="711.7" rx="30" ry="19.6" fill="#33509e" opacity="0.10"/><circle cx="227.1" cy="681.8" r="13.1" fill="#33509e" opacity="0.10"/><ellipse cx="227.1" cy="713.7" rx="30" ry="19.6" fill="#0a0d2c"/><circle cx="227.1" cy="684.3" r="13.1" fill="#0a0d2c"/><ellipse cx="270.1" cy="708.3" rx="30.8" ry="20.1" fill="#33509e" opacity="0.11"/><circle cx="270.1" cy="677.7" r="13.4" fill="#33509e" opacity="0.11"/><ellipse cx="270.1" cy="710.3" rx="30.8" ry="20.1" fill="#0a0d2c"/><circle cx="270.1" cy="680.2" r="13.4" fill="#0a0d2c"/><ellipse cx="309.5" cy="727.6" rx="36.1" ry="23.5" fill="#33509e" opacity="0.12"/><circle cx="309.5" cy="691.8" r="15.7" fill="#33509e" opacity="0.12"/><ellipse cx="309.5" cy="729.6" rx="36.1" ry="23.5" fill="#0a0d2c"/><circle cx="309.5" cy="694.3" r="15.7" fill="#0a0d2c"/><ellipse cx="342.5" cy="723.3" rx="30.4" ry="19.8" fill="#33509e" opacity="0.13"/><circle cx="342.5" cy="693" r="13.2" fill="#33509e" opacity="0.13"/><ellipse cx="342.5" cy="725.3" rx="30.4" ry="19.8" fill="#0a0d2c"/><circle cx="342.5" cy="695.5" r="13.2" fill="#0a0d2c"/><ellipse cx="369.4" cy="714.9" rx="33.8" ry="22" fill="#33509e" opacity="0.14"/><circle cx="369.4" cy="681.3" r="14.7" fill="#33509e" opacity="0.14"/><ellipse cx="369.4" cy="716.9" rx="33.8" ry="22" fill="#0a0d2c"/><circle cx="369.4" cy="683.8" r="14.7" fill="#0a0d2c"/><ellipse cx="397.4" cy="712.2" rx="32.7" ry="21.3" fill="#33509e" opacity="0.14"/><circle cx="397.4" cy="679.7" r="14.2" fill="#33509e" opacity="0.14"/><ellipse cx="397.4" cy="714.2" rx="32.7" ry="21.3" fill="#0a0d2c"/><circle cx="397.4" cy="682.2" r="14.2" fill="#0a0d2c"/><ellipse cx="437.1" cy="711.3" rx="32.6" ry="21.3" fill="#33509e" opacity="0.15"/><circle cx="437.1" cy="678.9" r="14.2" fill="#33509e" opacity="0.15"/><ellipse cx="437.1" cy="713.3" rx="32.6" ry="21.3" fill="#0a0d2c"/><circle cx="437.1" cy="681.4" r="14.2" fill="#0a0d2c"/><ellipse cx="484" cy="730.5" rx="36.7" ry="23.9" fill="#33509e" opacity="0.17"/><circle cx="484" cy="694.1" r="15.9" fill="#33509e" opacity="0.17"/><ellipse cx="484" cy="732.5" rx="36.7" ry="23.9" fill="#0a0d2c"/><circle cx="484" cy="696.6" r="15.9" fill="#0a0d2c"/><ellipse cx="526.3" cy="716.4" rx="29.5" ry="19.3" fill="#33509e" opacity="0.18"/><circle cx="526.3" cy="687" r="12.8" fill="#33509e" opacity="0.18"/><ellipse cx="526.3" cy="718.4" rx="29.5" ry="19.3" fill="#0a0d2c"/><circle cx="526.3" cy="689.5" r="12.8" fill="#0a0d2c"/><ellipse cx="553.7" cy="716.6" rx="40.2" ry="26.2" fill="#33509e" opacity="0.19"/><circle cx="553.7" cy="676.8" r="17.5" fill="#33509e" opacity="0.19"/><ellipse cx="553.7" cy="718.6" rx="40.2" ry="26.2" fill="#0a0d2c"/><circle cx="553.7" cy="679.3" r="17.5" fill="#0a0d2c"/><ellipse cx="596.3" cy="721.6" rx="27.9" ry="18.2" fill="#33509e" opacity="0.20"/><circle cx="596.3" cy="693.8" r="12.1" fill="#33509e" opacity="0.20"/><ellipse cx="596.3" cy="723.6" rx="27.9" ry="18.2" fill="#0a0d2c"/><circle cx="596.3" cy="696.3" r="12.1" fill="#0a0d2c"/><ellipse cx="637.4" cy="722.5" rx="37.7" ry="24.6" fill="#33509e" opacity="0.21"/><circle cx="637.4" cy="685.2" r="16.4" fill="#33509e" opacity="0.21"/><ellipse cx="637.4" cy="724.5" rx="37.7" ry="24.6" fill="#0a0d2c"/><circle cx="637.4" cy="687.7" r="16.4" fill="#0a0d2c"/><ellipse cx="665.7" cy="723.8" rx="37.8" ry="24.6" fill="#33509e" opacity="0.22"/><circle cx="665.7" cy="686.3" r="16.4" fill="#33509e" opacity="0.22"/><ellipse cx="665.7" cy="725.8" rx="37.8" ry="24.6" fill="#0a0d2c"/><circle cx="665.7" cy="688.8" r="16.4" fill="#0a0d2c"/><ellipse cx="709.2" cy="727.4" rx="38.5" ry="25.1" fill="#33509e" opacity="0.23"/><circle cx="709.2" cy="689.2" r="16.8" fill="#33509e" opacity="0.23"/><ellipse cx="709.2" cy="729.4" rx="38.5" ry="25.1" fill="#0a0d2c"/><circle cx="709.2" cy="691.7" r="16.8" fill="#0a0d2c"/><ellipse cx="743.8" cy="728.5" rx="40" ry="26.1" fill="#33509e" opacity="0.24"/><circle cx="743.8" cy="688.8" r="17.4" fill="#33509e" opacity="0.24"/><ellipse cx="743.8" cy="730.5" rx="40" ry="26.1" fill="#0a0d2c"/><circle cx="743.8" cy="691.3" r="17.4" fill="#0a0d2c"/><ellipse cx="779.9" cy="729.9" rx="39.5" ry="25.8" fill="#33509e" opacity="0.25"/><circle cx="779.9" cy="690.7" r="17.2" fill="#33509e" opacity="0.25"/><ellipse cx="779.9" cy="731.9" rx="39.5" ry="25.8" fill="#0a0d2c"/><circle cx="779.9" cy="693.2" r="17.2" fill="#0a0d2c"/><ellipse cx="820.7" cy="718.7" rx="35.6" ry="23.2" fill="#33509e" opacity="0.26"/><circle cx="820.7" cy="683.4" r="15.5" fill="#33509e" opacity="0.26"/><ellipse cx="820.7" cy="720.7" rx="35.6" ry="23.2" fill="#0a0d2c"/><circle cx="820.7" cy="685.9" r="15.5" fill="#0a0d2c"/><ellipse cx="849.2" cy="728.9" rx="41.3" ry="26.9" fill="#33509e" opacity="0.27"/><circle cx="849.2" cy="688" r="18" fill="#33509e" opacity="0.27"/><ellipse cx="849.2" cy="730.9" rx="41.3" ry="26.9" fill="#0a0d2c"/><circle cx="849.2" cy="690.5" r="18" fill="#0a0d2c"/><ellipse cx="892.4" cy="720.9" rx="37.7" ry="24.6" fill="#33509e" opacity="0.28"/><circle cx="892.4" cy="683.5" r="16.4" fill="#33509e" opacity="0.28"/><ellipse cx="892.4" cy="722.9" rx="37.7" ry="24.6" fill="#0a0d2c"/><circle cx="892.4" cy="686" r="16.4" fill="#0a0d2c"/><ellipse cx="929" cy="720.2" rx="28.8" ry="18.8" fill="#33509e" opacity="0.29"/><circle cx="929" cy="691.6" r="12.5" fill="#33509e" opacity="0.29"/><ellipse cx="929" cy="722.2" rx="28.8" ry="18.8" fill="#0a0d2c"/><circle cx="929" cy="694.1" r="12.5" fill="#0a0d2c"/><ellipse cx="956.3" cy="721.3" rx="34.2" ry="22.3" fill="#33509e" opacity="0.29"/><circle cx="956.3" cy="687.3" r="14.9" fill="#33509e" opacity="0.29"/><ellipse cx="956.3" cy="723.3" rx="34.2" ry="22.3" fill="#0a0d2c"/><circle cx="956.3" cy="689.8" r="14.9" fill="#0a0d2c"/><ellipse cx="994.2" cy="727.5" rx="40.3" ry="26.3" fill="#33509e" opacity="0.29"/><circle cx="994.2" cy="687.6" r="17.5" fill="#33509e" opacity="0.29"/><ellipse cx="994.2" cy="729.5" rx="40.3" ry="26.3" fill="#0a0d2c"/><circle cx="994.2" cy="690.1" r="17.5" fill="#0a0d2c"/><ellipse cx="1027.7" cy="718.9" rx="30.4" ry="19.8" fill="#33509e" opacity="0.29"/><circle cx="1027.7" cy="688.7" r="13.2" fill="#33509e" opacity="0.29"/><ellipse cx="1027.7" cy="720.9" rx="30.4" ry="19.8" fill="#0a0d2c"/><circle cx="1027.7" cy="691.2" r="13.2" fill="#0a0d2c"/><ellipse cx="1069.3" cy="724" rx="39.9" ry="26" fill="#33509e" opacity="0.27"/><circle cx="1069.3" cy="684.5" r="17.4" fill="#33509e" opacity="0.27"/><ellipse cx="1069.3" cy="726" rx="39.9" ry="26" fill="#0a0d2c"/><circle cx="1069.3" cy="687" r="17.4" fill="#0a0d2c"/><ellipse cx="1100.5" cy="722.6" rx="38.7" ry="25.3" fill="#33509e" opacity="0.27"/><circle cx="1100.5" cy="684.3" r="16.8" fill="#33509e" opacity="0.27"/><ellipse cx="1100.5" cy="724.6" rx="38.7" ry="25.3" fill="#0a0d2c"/><circle cx="1100.5" cy="686.8" r="16.8" fill="#0a0d2c"/><ellipse cx="1147.1" cy="718.8" rx="35.6" ry="23.2" fill="#33509e" opacity="0.25"/><circle cx="1147.1" cy="683.4" r="15.5" fill="#33509e" opacity="0.25"/><ellipse cx="1147.1" cy="720.8" rx="35.6" ry="23.2" fill="#0a0d2c"/><circle cx="1147.1" cy="685.9" r="15.5" fill="#0a0d2c"/><ellipse cx="1185.1" cy="730.5" rx="39.3" ry="25.6" fill="#33509e" opacity="0.24"/><circle cx="1185.1" cy="691.6" r="17.1" fill="#33509e" opacity="0.24"/><ellipse cx="1185.1" cy="732.5" rx="39.3" ry="25.6" fill="#0a0d2c"/><circle cx="1185.1" cy="694.1" r="17.1" fill="#0a0d2c"/><ellipse cx="1233.3" cy="711.3" rx="29.9" ry="19.5" fill="#33509e" opacity="0.23"/><circle cx="1233.3" cy="681.5" r="13" fill="#33509e" opacity="0.23"/><ellipse cx="1233.3" cy="713.3" rx="29.9" ry="19.5" fill="#0a0d2c"/><circle cx="1233.3" cy="684" r="13" fill="#0a0d2c"/><ellipse cx="1266.2" cy="713.4" rx="33.3" ry="21.7" fill="#33509e" opacity="0.22"/><circle cx="1266.2" cy="680.4" r="14.5" fill="#33509e" opacity="0.22"/><ellipse cx="1266.2" cy="715.4" rx="33.3" ry="21.7" fill="#0a0d2c"/><circle cx="1266.2" cy="682.9" r="14.5" fill="#0a0d2c"/><ellipse cx="1304" cy="721" rx="39.2" ry="25.6" fill="#33509e" opacity="0.21"/><circle cx="1304" cy="682.2" r="17" fill="#33509e" opacity="0.21"/><ellipse cx="1304" cy="723" rx="39.2" ry="25.6" fill="#0a0d2c"/><circle cx="1304" cy="684.7" r="17" fill="#0a0d2c"/><ellipse cx="1341" cy="705.8" rx="28" ry="18.3" fill="#33509e" opacity="0.20"/><circle cx="1341" cy="677.8" r="12.2" fill="#33509e" opacity="0.20"/><ellipse cx="1341" cy="707.8" rx="28" ry="18.3" fill="#0a0d2c"/><circle cx="1341" cy="680.3" r="12.2" fill="#0a0d2c"/><ellipse cx="1368.5" cy="724.5" rx="35.5" ry="23.1" fill="#33509e" opacity="0.19"/><circle cx="1368.5" cy="689.3" r="15.4" fill="#33509e" opacity="0.19"/><ellipse cx="1368.5" cy="726.5" rx="35.5" ry="23.1" fill="#0a0d2c"/><circle cx="1368.5" cy="691.8" r="15.4" fill="#0a0d2c"/><ellipse cx="1395.5" cy="712.6" rx="33.9" ry="22.1" fill="#33509e" opacity="0.19"/><circle cx="1395.5" cy="678.9" r="14.7" fill="#33509e" opacity="0.19"/><ellipse cx="1395.5" cy="714.6" rx="33.9" ry="22.1" fill="#0a0d2c"/><circle cx="1395.5" cy="681.4" r="14.7" fill="#0a0d2c"/><ellipse cx="1427.6" cy="707.2" rx="28.2" ry="18.4" fill="#33509e" opacity="0.18"/><circle cx="1427.6" cy="679" r="12.3" fill="#33509e" opacity="0.18"/><ellipse cx="1427.6" cy="709.2" rx="28.2" ry="18.4" fill="#0a0d2c"/><circle cx="1427.6" cy="681.5" r="12.3" fill="#0a0d2c"/><ellipse cx="1464.3" cy="724.2" rx="36.6" ry="23.9" fill="#33509e" opacity="0.17"/><circle cx="1464.3" cy="687.8" r="15.9" fill="#33509e" opacity="0.17"/><ellipse cx="1464.3" cy="726.2" rx="36.6" ry="23.9" fill="#0a0d2c"/><circle cx="1464.3" cy="690.3" r="15.9" fill="#0a0d2c"/><ellipse cx="1512.8" cy="719" rx="30.4" ry="19.8" fill="#33509e" opacity="0.15"/><circle cx="1512.8" cy="688.8" r="13.2" fill="#33509e" opacity="0.15"/><ellipse cx="1512.8" cy="721" rx="30.4" ry="19.8" fill="#0a0d2c"/><circle cx="1512.8" cy="691.3" r="13.2" fill="#0a0d2c"/><ellipse cx="1550.2" cy="707.4" rx="27.7" ry="18.1" fill="#33509e" opacity="0.14"/><circle cx="1550.2" cy="679.7" r="12.1" fill="#33509e" opacity="0.14"/><ellipse cx="1550.2" cy="709.4" rx="27.7" ry="18.1" fill="#0a0d2c"/><circle cx="1550.2" cy="682.2" r="12.1" fill="#0a0d2c"/><ellipse cx="1587.6" cy="719.3" rx="30.1" ry="19.6" fill="#33509e" opacity="0.13"/><circle cx="1587.6" cy="689.4" r="13.1" fill="#33509e" opacity="0.13"/><ellipse cx="1587.6" cy="721.3" rx="30.1" ry="19.6" fill="#0a0d2c"/><circle cx="1587.6" cy="691.9" r="13.1" fill="#0a0d2c"/><ellipse cx="1620.4" cy="719.6" rx="37.2" ry="24.3" fill="#33509e" opacity="0.13"/><circle cx="1620.4" cy="682.7" r="16.2" fill="#33509e" opacity="0.13"/><ellipse cx="1620.4" cy="721.6" rx="37.2" ry="24.3" fill="#0a0d2c"/><circle cx="1620.4" cy="685.2" r="16.2" fill="#0a0d2c"/><ellipse cx="1658.9" cy="725.3" rx="38" ry="24.8" fill="#33509e" opacity="0.12"/><circle cx="1658.9" cy="687.6" r="16.5" fill="#33509e" opacity="0.12"/><ellipse cx="1658.9" cy="727.3" rx="38" ry="24.8" fill="#0a0d2c"/><circle cx="1658.9" cy="690.1" r="16.5" fill="#0a0d2c"/><ellipse cx="1694.4" cy="730.5" rx="40.1" ry="26.2" fill="#33509e" opacity="0.11"/><circle cx="1694.4" cy="690.8" r="17.4" fill="#33509e" opacity="0.11"/><ellipse cx="1694.4" cy="732.5" rx="40.1" ry="26.2" fill="#0a0d2c"/><circle cx="1694.4" cy="693.3" r="17.4" fill="#0a0d2c"/><ellipse cx="1723" cy="730.5" rx="37.6" ry="24.5" fill="#33509e" opacity="0.10"/><circle cx="1723" cy="693.3" r="16.3" fill="#33509e" opacity="0.10"/><ellipse cx="1723" cy="732.5" rx="37.6" ry="24.5" fill="#0a0d2c"/><circle cx="1723" cy="695.8" r="16.3" fill="#0a0d2c"/><ellipse cx="1752.6" cy="720.6" rx="36.2" ry="23.6" fill="#33509e" opacity="0.09"/><circle cx="1752.6" cy="684.7" r="15.8" fill="#33509e" opacity="0.09"/><ellipse cx="1752.6" cy="722.6" rx="36.2" ry="23.6" fill="#0a0d2c"/><circle cx="1752.6" cy="687.2" r="15.8" fill="#0a0d2c"/><ellipse cx="1799.9" cy="718.5" rx="35.4" ry="23.1" fill="#33509e" opacity="0.08"/><circle cx="1799.9" cy="683.3" r="15.4" fill="#33509e" opacity="0.08"/><ellipse cx="1799.9" cy="720.5" rx="35.4" ry="23.1" fill="#0a0d2c"/><circle cx="1799.9" cy="685.8" r="15.4" fill="#0a0d2c"/><ellipse cx="1846.6" cy="731.1" rx="40.6" ry="26.5" fill="#33509e" opacity="0.06"/><circle cx="1846.6" cy="690.8" r="17.7" fill="#33509e" opacity="0.06"/><ellipse cx="1846.6" cy="733.1" rx="40.6" ry="26.5" fill="#0a0d2c"/><circle cx="1846.6" cy="693.3" r="17.7" fill="#0a0d2c"/><ellipse cx="1883.8" cy="718.5" rx="30.4" ry="19.8" fill="#33509e" opacity="0.05"/><circle cx="1883.8" cy="688.2" r="13.2" fill="#33509e" opacity="0.05"/><ellipse cx="1883.8" cy="720.5" rx="30.4" ry="19.8" fill="#0a0d2c"/><circle cx="1883.8" cy="690.7" r="13.2" fill="#0a0d2c"/><ellipse cx="1926.8" cy="727.4" rx="36.5" ry="23.8" fill="#33509e" opacity="0.04"/><circle cx="1926.8" cy="691.2" r="15.8" fill="#33509e" opacity="0.04"/><ellipse cx="1926.8" cy="729.4" rx="36.5" ry="23.8" fill="#0a0d2c"/><circle cx="1926.8" cy="693.7" r="15.8" fill="#0a0d2c"/><ellipse cx="1969.8" cy="720" rx="40" ry="26.1" fill="#33509e" opacity="0.03"/><circle cx="1969.8" cy="680.3" r="17.4" fill="#33509e" opacity="0.03"/><ellipse cx="1969.8" cy="722" rx="40" ry="26.1" fill="#0a0d2c"/><circle cx="1969.8" cy="682.8" r="17.4" fill="#0a0d2c"/><ellipse cx="2018.7" cy="728.8" rx="35" ry="22.8" fill="#33509e" opacity="0.03"/><circle cx="2018.7" cy="694.1" r="15.2" fill="#33509e" opacity="0.03"/><ellipse cx="2018.7" cy="730.8" rx="35" ry="22.8" fill="#0a0d2c"/><circle cx="2018.7" cy="696.6" r="15.2" fill="#0a0d2c"/><ellipse cx="-17.9" cy="781.4" rx="57.8" ry="37.7" fill="#2c528c" opacity="0.03"/><circle cx="-17.9" cy="724.3" r="25.1" fill="#2c528c" opacity="0.03"/><ellipse cx="-17.9" cy="783.4" rx="57.8" ry="37.7" fill="#090c29"/><circle cx="-17.9" cy="726.8" r="25.1" fill="#090c29"/><ellipse cx="33" cy="751.3" rx="49.4" ry="32.2" fill="#2c528c" opacity="0.05"/><circle cx="33" cy="702.5" r="21.5" fill="#2c528c" opacity="0.05"/><ellipse cx="33" cy="753.3" rx="49.4" ry="32.2" fill="#090c29"/><circle cx="33" cy="705" r="21.5" fill="#090c29"/><ellipse cx="90.7" cy="770.3" rx="50.3" ry="32.8" fill="#2c528c" opacity="0.06"/><circle cx="90.7" cy="720.6" r="21.9" fill="#2c528c" opacity="0.06"/><ellipse cx="90.7" cy="772.3" rx="50.3" ry="32.8" fill="#090c29"/><circle cx="90.7" cy="723.1" r="21.9" fill="#090c29"/><ellipse cx="130.8" cy="763" rx="41.8" ry="27.2" fill="#2c528c" opacity="0.07"/><circle cx="130.8" cy="721.7" r="18.2" fill="#2c528c" opacity="0.07"/><ellipse cx="130.8" cy="765" rx="41.8" ry="27.2" fill="#090c29"/><circle cx="130.8" cy="724.2" r="18.2" fill="#090c29"/><ellipse cx="196.9" cy="751.6" rx="47.3" ry="30.8" fill="#2c528c" opacity="0.09"/><circle cx="196.9" cy="704.9" r="20.5" fill="#2c528c" opacity="0.09"/><ellipse cx="196.9" cy="753.6" rx="47.3" ry="30.8" fill="#090c29"/><circle cx="196.9" cy="707.4" r="20.5" fill="#090c29"/><ellipse cx="262.6" cy="747.1" rx="43.5" ry="28.4" fill="#2c528c" opacity="0.11"/><circle cx="262.6" cy="704" r="18.9" fill="#2c528c" opacity="0.11"/><ellipse cx="262.6" cy="749.1" rx="43.5" ry="28.4" fill="#090c29"/><circle cx="262.6" cy="706.5" r="18.9" fill="#090c29"/><ellipse cx="319.1" cy="776.1" rx="57.5" ry="37.5" fill="#2c528c" opacity="0.12"/><circle cx="319.1" cy="719.4" r="25" fill="#2c528c" opacity="0.12"/><ellipse cx="319.1" cy="778.1" rx="57.5" ry="37.5" fill="#090c29"/><circle cx="319.1" cy="721.9" r="25" fill="#090c29"/><ellipse cx="381.5" cy="775.1" rx="50.4" ry="32.9" fill="#2c528c" opacity="0.14"/><circle cx="381.5" cy="725.3" r="21.9" fill="#2c528c" opacity="0.14"/><ellipse cx="381.5" cy="777.1" rx="50.4" ry="32.9" fill="#090c29"/><circle cx="381.5" cy="727.8" r="21.9" fill="#090c29"/><ellipse cx="452.6" cy="747.1" rx="45" ry="29.3" fill="#2c528c" opacity="0.16"/><circle cx="452.6" cy="702.6" r="19.5" fill="#2c528c" opacity="0.16"/><ellipse cx="452.6" cy="749.1" rx="45" ry="29.3" fill="#090c29"/><circle cx="452.6" cy="705.1" r="19.5" fill="#090c29"/><ellipse cx="509.5" cy="762.5" rx="55.2" ry="36" fill="#2c528c" opacity="0.17"/><circle cx="509.5" cy="708" r="24" fill="#2c528c" opacity="0.17"/><ellipse cx="509.5" cy="764.5" rx="55.2" ry="36" fill="#090c29"/><circle cx="509.5" cy="710.5" r="24" fill="#090c29"/><ellipse cx="570.1" cy="770.9" rx="57.6" ry="37.5" fill="#2c528c" opacity="0.19"/><circle cx="570.1" cy="714.1" r="25" fill="#2c528c" opacity="0.19"/><ellipse cx="570.1" cy="772.9" rx="57.6" ry="37.5" fill="#090c29"/><circle cx="570.1" cy="716.6" r="25" fill="#090c29"/><ellipse cx="628.1" cy="756.2" rx="48.2" ry="31.4" fill="#2c528c" opacity="0.21"/><circle cx="628.1" cy="708.5" r="21" fill="#2c528c" opacity="0.21"/><ellipse cx="628.1" cy="758.2" rx="48.2" ry="31.4" fill="#090c29"/><circle cx="628.1" cy="711" r="21" fill="#090c29"/><ellipse cx="697.6" cy="762.7" rx="57.7" ry="37.6" fill="#2c528c" opacity="0.23"/><circle cx="697.6" cy="705.8" r="25.1" fill="#2c528c" opacity="0.23"/><ellipse cx="697.6" cy="764.7" rx="57.7" ry="37.6" fill="#090c29"/><circle cx="697.6" cy="708.3" r="25.1" fill="#090c29"/><ellipse cx="754.4" cy="759.5" rx="44.5" ry="29.1" fill="#2c528c" opacity="0.24"/><circle cx="754.4" cy="715.4" r="19.4" fill="#2c528c" opacity="0.24"/><ellipse cx="754.4" cy="761.5" rx="44.5" ry="29.1" fill="#090c29"/><circle cx="754.4" cy="717.9" r="19.4" fill="#090c29"/><ellipse cx="810.5" cy="756.9" rx="41" ry="26.8" fill="#2c528c" opacity="0.26"/><circle cx="810.5" cy="716.3" r="17.8" fill="#2c528c" opacity="0.26"/><ellipse cx="810.5" cy="758.9" rx="41" ry="26.8" fill="#090c29"/><circle cx="810.5" cy="718.8" r="17.8" fill="#090c29"/><ellipse cx="867.1" cy="766.8" rx="56.7" ry="37" fill="#2c528c" opacity="0.27"/><circle cx="867.1" cy="710.9" r="24.6" fill="#2c528c" opacity="0.27"/><ellipse cx="867.1" cy="768.8" rx="56.7" ry="37" fill="#090c29"/><circle cx="867.1" cy="713.4" r="24.6" fill="#090c29"/><ellipse cx="922.8" cy="759.9" rx="41.8" ry="27.3" fill="#2c528c" opacity="0.29"/><circle cx="922.8" cy="718.5" r="18.2" fill="#2c528c" opacity="0.29"/><ellipse cx="922.8" cy="761.9" rx="41.8" ry="27.3" fill="#090c29"/><circle cx="922.8" cy="721" r="18.2" fill="#090c29"/><ellipse cx="975.9" cy="783.9" rx="59.2" ry="38.6" fill="#2c528c" opacity="0.30"/><circle cx="975.9" cy="725.6" r="25.7" fill="#2c528c" opacity="0.30"/><ellipse cx="975.9" cy="785.9" rx="59.2" ry="38.6" fill="#090c29"/><circle cx="975.9" cy="728.1" r="25.7" fill="#090c29"/><ellipse cx="1019.3" cy="768" rx="57" ry="37.2" fill="#2c528c" opacity="0.29"/><circle cx="1019.3" cy="711.7" r="24.8" fill="#2c528c" opacity="0.29"/><ellipse cx="1019.3" cy="770" rx="57" ry="37.2" fill="#090c29"/><circle cx="1019.3" cy="714.2" r="24.8" fill="#090c29"/><ellipse cx="1074.5" cy="752.6" rx="44.4" ry="28.9" fill="#2c528c" opacity="0.27"/><circle cx="1074.5" cy="708.7" r="19.3" fill="#2c528c" opacity="0.27"/><ellipse cx="1074.5" cy="754.6" rx="44.4" ry="28.9" fill="#090c29"/><circle cx="1074.5" cy="711.2" r="19.3" fill="#090c29"/><ellipse cx="1144.8" cy="759.2" rx="56.3" ry="36.7" fill="#2c528c" opacity="0.25"/><circle cx="1144.8" cy="703.7" r="24.5" fill="#2c528c" opacity="0.25"/><ellipse cx="1144.8" cy="761.2" rx="56.3" ry="36.7" fill="#090c29"/><circle cx="1144.8" cy="706.2" r="24.5" fill="#090c29"/><ellipse cx="1191.7" cy="764.9" rx="47" ry="30.7" fill="#2c528c" opacity="0.24"/><circle cx="1191.7" cy="718.4" r="20.4" fill="#2c528c" opacity="0.24"/><ellipse cx="1191.7" cy="766.9" rx="47" ry="30.7" fill="#090c29"/><circle cx="1191.7" cy="720.9" r="20.4" fill="#090c29"/><ellipse cx="1234.4" cy="762.1" rx="43" ry="28" fill="#2c528c" opacity="0.23"/><circle cx="1234.4" cy="719.6" r="18.7" fill="#2c528c" opacity="0.23"/><ellipse cx="1234.4" cy="764.1" rx="43" ry="28" fill="#090c29"/><circle cx="1234.4" cy="722.1" r="18.7" fill="#090c29"/><ellipse cx="1282" cy="756.1" rx="51.2" ry="33.4" fill="#2c528c" opacity="0.22"/><circle cx="1282" cy="705.5" r="22.3" fill="#2c528c" opacity="0.22"/><ellipse cx="1282" cy="758.1" rx="51.2" ry="33.4" fill="#090c29"/><circle cx="1282" cy="708" r="22.3" fill="#090c29"/><ellipse cx="1333.8" cy="761.8" rx="51.2" ry="33.4" fill="#2c528c" opacity="0.20"/><circle cx="1333.8" cy="711.2" r="22.3" fill="#2c528c" opacity="0.20"/><ellipse cx="1333.8" cy="763.8" rx="51.2" ry="33.4" fill="#090c29"/><circle cx="1333.8" cy="713.7" r="22.3" fill="#090c29"/><ellipse cx="1394.2" cy="767.7" rx="51.2" ry="33.4" fill="#2c528c" opacity="0.19"/><circle cx="1394.2" cy="717.2" r="22.3" fill="#2c528c" opacity="0.19"/><ellipse cx="1394.2" cy="769.7" rx="51.2" ry="33.4" fill="#090c29"/><circle cx="1394.2" cy="719.7" r="22.3" fill="#090c29"/><ellipse cx="1454" cy="767.6" rx="45.2" ry="29.5" fill="#2c528c" opacity="0.17"/><circle cx="1454" cy="722.9" r="19.6" fill="#2c528c" opacity="0.17"/><ellipse cx="1454" cy="769.6" rx="45.2" ry="29.5" fill="#090c29"/><circle cx="1454" cy="725.4" r="19.6" fill="#090c29"/><ellipse cx="1520.4" cy="770.5" rx="46.9" ry="30.6" fill="#2c528c" opacity="0.15"/><circle cx="1520.4" cy="724.1" r="20.4" fill="#2c528c" opacity="0.15"/><ellipse cx="1520.4" cy="772.5" rx="46.9" ry="30.6" fill="#090c29"/><circle cx="1520.4" cy="726.6" r="20.4" fill="#090c29"/><ellipse cx="1570.2" cy="769.1" rx="44.9" ry="29.3" fill="#2c528c" opacity="0.14"/><circle cx="1570.2" cy="724.7" r="19.5" fill="#2c528c" opacity="0.14"/><ellipse cx="1570.2" cy="771.1" rx="44.9" ry="29.3" fill="#090c29"/><circle cx="1570.2" cy="727.2" r="19.5" fill="#090c29"/><ellipse cx="1643" cy="766.5" rx="43.2" ry="28.2" fill="#2c528c" opacity="0.12"/><circle cx="1643" cy="723.7" r="18.8" fill="#2c528c" opacity="0.12"/><ellipse cx="1643" cy="768.5" rx="43.2" ry="28.2" fill="#090c29"/><circle cx="1643" cy="726.2" r="18.8" fill="#090c29"/><ellipse cx="1690.2" cy="764.7" rx="45.7" ry="29.8" fill="#2c528c" opacity="0.11"/><circle cx="1690.2" cy="719.5" r="19.9" fill="#2c528c" opacity="0.11"/><ellipse cx="1690.2" cy="766.7" rx="45.7" ry="29.8" fill="#090c29"/><circle cx="1690.2" cy="722" r="19.9" fill="#090c29"/><ellipse cx="1732.7" cy="770.7" rx="49" ry="32" fill="#2c528c" opacity="0.10"/><circle cx="1732.7" cy="722.3" r="21.3" fill="#2c528c" opacity="0.10"/><ellipse cx="1732.7" cy="772.7" rx="49" ry="32" fill="#090c29"/><circle cx="1732.7" cy="724.8" r="21.3" fill="#090c29"/><ellipse cx="1798.4" cy="751.7" rx="48.6" ry="31.7" fill="#2c528c" opacity="0.08"/><circle cx="1798.4" cy="703.6" r="21.1" fill="#2c528c" opacity="0.08"/><ellipse cx="1798.4" cy="753.7" rx="48.6" ry="31.7" fill="#090c29"/><circle cx="1798.4" cy="706.1" r="21.1" fill="#090c29"/><ellipse cx="1860.6" cy="744.8" rx="44.5" ry="29.1" fill="#2c528c" opacity="0.06"/><circle cx="1860.6" cy="700.8" r="19.4" fill="#2c528c" opacity="0.06"/><ellipse cx="1860.6" cy="746.8" rx="44.5" ry="29.1" fill="#090c29"/><circle cx="1860.6" cy="703.3" r="19.4" fill="#090c29"/><ellipse cx="1922.8" cy="783.6" rx="60.1" ry="39.2" fill="#2c528c" opacity="0.04"/><circle cx="1922.8" cy="724.4" r="26.1" fill="#2c528c" opacity="0.04"/><ellipse cx="1922.8" cy="785.6" rx="60.1" ry="39.2" fill="#090c29"/><circle cx="1922.8" cy="726.9" r="26.1" fill="#090c29"/><ellipse cx="1965.8" cy="768.8" rx="55.8" ry="36.4" fill="#2c528c" opacity="0.03"/><circle cx="1965.8" cy="713.6" r="24.3" fill="#2c528c" opacity="0.03"/><ellipse cx="1965.8" cy="770.8" rx="55.8" ry="36.4" fill="#090c29"/><circle cx="1965.8" cy="716.1" r="24.3" fill="#090c29"/><ellipse cx="2021.9" cy="762.2" rx="44.3" ry="28.9" fill="#2c528c" opacity="0.03"/><circle cx="2021.9" cy="718.4" r="19.3" fill="#2c528c" opacity="0.03"/><ellipse cx="2021.9" cy="764.2" rx="44.3" ry="28.9" fill="#090c29"/><circle cx="2021.9" cy="720.9" r="19.3" fill="#090c29"/><ellipse cx="-8.9" cy="815.5" rx="77.5" ry="50.5" fill="#285688" opacity="0.03"/><circle cx="-8.9" cy="739.2" r="33.7" fill="#285688" opacity="0.03"/><ellipse cx="-8.9" cy="817.5" rx="77.5" ry="50.5" fill="#080b25"/><circle cx="-8.9" cy="741.7" r="33.7" fill="#080b25"/><ellipse cx="75.8" cy="824.5" rx="65.2" ry="42.5" fill="#285688" opacity="0.06"/><circle cx="75.8" cy="760.2" r="28.3" fill="#285688" opacity="0.06"/><ellipse cx="75.8" cy="826.5" rx="65.2" ry="42.5" fill="#080b25"/><circle cx="75.8" cy="762.7" r="28.3" fill="#080b25"/><ellipse cx="143.9" cy="830.6" rx="86.2" ry="56.2" fill="#285688" opacity="0.08"/><circle cx="143.9" cy="745.8" r="37.5" fill="#285688" opacity="0.08"/><ellipse cx="143.9" cy="832.6" rx="86.2" ry="56.2" fill="#080b25"/><circle cx="143.9" cy="748.3" r="37.5" fill="#080b25"/><ellipse cx="252.6" cy="837.1" rx="63.6" ry="41.5" fill="#285688" opacity="0.10"/><circle cx="252.6" cy="774.4" r="27.7" fill="#285688" opacity="0.10"/><ellipse cx="252.6" cy="839.1" rx="63.6" ry="41.5" fill="#080b25"/><circle cx="252.6" cy="776.9" r="27.7" fill="#080b25"/><ellipse cx="314.6" cy="849" rx="74.7" ry="48.7" fill="#285688" opacity="0.12"/><circle cx="314.6" cy="775.4" r="32.5" fill="#285688" opacity="0.12"/><ellipse cx="314.6" cy="851" rx="74.7" ry="48.7" fill="#080b25"/><circle cx="314.6" cy="777.9" r="32.5" fill="#080b25"/><ellipse cx="411.9" cy="824.4" rx="74.9" ry="48.8" fill="#285688" opacity="0.15"/><circle cx="411.9" cy="750.6" r="32.6" fill="#285688" opacity="0.15"/><ellipse cx="411.9" cy="826.4" rx="74.9" ry="48.8" fill="#080b25"/><circle cx="411.9" cy="753.1" r="32.6" fill="#080b25"/><ellipse cx="496.7" cy="832.5" rx="79" ry="51.5" fill="#285688" opacity="0.17"/><circle cx="496.7" cy="754.7" r="34.3" fill="#285688" opacity="0.17"/><ellipse cx="496.7" cy="834.5" rx="79" ry="51.5" fill="#080b25"/><circle cx="496.7" cy="757.2" r="34.3" fill="#080b25"/><ellipse cx="556.1" cy="850.4" rx="86.4" ry="56.3" fill="#285688" opacity="0.19"/><circle cx="556.1" cy="765.5" r="37.5" fill="#285688" opacity="0.19"/><ellipse cx="556.1" cy="852.4" rx="86.4" ry="56.3" fill="#080b25"/><circle cx="556.1" cy="768" r="37.5" fill="#080b25"/><ellipse cx="624.1" cy="837.5" rx="83.2" ry="54.2" fill="#285688" opacity="0.21"/><circle cx="624.1" cy="755.7" r="36.2" fill="#285688" opacity="0.21"/><ellipse cx="624.1" cy="839.5" rx="83.2" ry="54.2" fill="#080b25"/><circle cx="624.1" cy="758.2" r="36.2" fill="#080b25"/><ellipse cx="691.2" cy="818.4" rx="61.2" ry="39.9" fill="#285688" opacity="0.22"/><circle cx="691.2" cy="758" r="26.6" fill="#285688" opacity="0.22"/><ellipse cx="691.2" cy="820.4" rx="61.2" ry="39.9" fill="#080b25"/><circle cx="691.2" cy="760.5" r="26.6" fill="#080b25"/><ellipse cx="790.4" cy="851.1" rx="86.9" ry="56.6" fill="#285688" opacity="0.25"/><circle cx="790.4" cy="765.6" r="37.8" fill="#285688" opacity="0.25"/><ellipse cx="790.4" cy="853.1" rx="86.9" ry="56.6" fill="#080b25"/><circle cx="790.4" cy="768.1" r="37.8" fill="#080b25"/><ellipse cx="869.6" cy="836.3" rx="76" ry="49.6" fill="#285688" opacity="0.27"/><circle cx="869.6" cy="761.4" r="33.1" fill="#285688" opacity="0.27"/><ellipse cx="869.6" cy="838.3" rx="76" ry="49.6" fill="#080b25"/><circle cx="869.6" cy="763.9" r="33.1" fill="#080b25"/><ellipse cx="969" cy="834.9" rx="88.4" ry="57.6" fill="#285688" opacity="0.30"/><circle cx="969" cy="747.9" r="38.4" fill="#285688" opacity="0.30"/><ellipse cx="969" cy="836.9" rx="88.4" ry="57.6" fill="#080b25"/><circle cx="969" cy="750.4" r="38.4" fill="#080b25"/><ellipse cx="1067" cy="841.9" rx="73" ry="47.6" fill="#285688" opacity="0.28"/><circle cx="1067" cy="770" r="31.8" fill="#285688" opacity="0.28"/><ellipse cx="1067" cy="843.9" rx="73" ry="47.6" fill="#080b25"/><circle cx="1067" cy="772.5" r="31.8" fill="#080b25"/><ellipse cx="1170.1" cy="847.9" rx="84" ry="54.8" fill="#285688" opacity="0.25"/><circle cx="1170.1" cy="765.2" r="36.5" fill="#285688" opacity="0.25"/><ellipse cx="1170.1" cy="849.9" rx="84" ry="54.8" fill="#080b25"/><circle cx="1170.1" cy="767.7" r="36.5" fill="#080b25"/><ellipse cx="1249.4" cy="828.3" rx="62.9" ry="41" fill="#285688" opacity="0.23"/><circle cx="1249.4" cy="766.3" r="27.3" fill="#285688" opacity="0.23"/><ellipse cx="1249.4" cy="830.3" rx="62.9" ry="41" fill="#080b25"/><circle cx="1249.4" cy="768.8" r="27.3" fill="#080b25"/><ellipse cx="1308.7" cy="830.7" rx="80.1" ry="52.2" fill="#285688" opacity="0.21"/><circle cx="1308.7" cy="751.8" r="34.8" fill="#285688" opacity="0.21"/><ellipse cx="1308.7" cy="832.7" rx="80.1" ry="52.2" fill="#080b25"/><circle cx="1308.7" cy="754.3" r="34.8" fill="#080b25"/><ellipse cx="1379.2" cy="854.8" rx="80.9" ry="52.8" fill="#285688" opacity="0.19"/><circle cx="1379.2" cy="775.1" r="35.2" fill="#285688" opacity="0.19"/><ellipse cx="1379.2" cy="856.8" rx="80.9" ry="52.8" fill="#080b25"/><circle cx="1379.2" cy="777.6" r="35.2" fill="#080b25"/><ellipse cx="1466.7" cy="830.3" rx="72.5" ry="47.3" fill="#285688" opacity="0.17"/><circle cx="1466.7" cy="758.8" r="31.5" fill="#285688" opacity="0.17"/><ellipse cx="1466.7" cy="832.3" rx="72.5" ry="47.3" fill="#080b25"/><circle cx="1466.7" cy="761.3" r="31.5" fill="#080b25"/><ellipse cx="1557.9" cy="848" rx="83.8" ry="54.7" fill="#285688" opacity="0.14"/><circle cx="1557.9" cy="765.5" r="36.5" fill="#285688" opacity="0.14"/><ellipse cx="1557.9" cy="850" rx="83.8" ry="54.7" fill="#080b25"/><circle cx="1557.9" cy="768" r="36.5" fill="#080b25"/><ellipse cx="1666.1" cy="816.8" rx="79.4" ry="51.8" fill="#285688" opacity="0.11"/><circle cx="1666.1" cy="738.6" r="34.5" fill="#285688" opacity="0.11"/><ellipse cx="1666.1" cy="818.8" rx="79.4" ry="51.8" fill="#080b25"/><circle cx="1666.1" cy="741.1" r="34.5" fill="#080b25"/><ellipse cx="1762.1" cy="819.7" rx="72.9" ry="47.6" fill="#285688" opacity="0.09"/><circle cx="1762.1" cy="747.9" r="31.7" fill="#285688" opacity="0.09"/><ellipse cx="1762.1" cy="821.7" rx="72.9" ry="47.6" fill="#080b25"/><circle cx="1762.1" cy="750.4" r="31.7" fill="#080b25"/><ellipse cx="1823.4" cy="816.5" rx="72.1" ry="47" fill="#285688" opacity="0.07"/><circle cx="1823.4" cy="745.4" r="31.4" fill="#285688" opacity="0.07"/><ellipse cx="1823.4" cy="818.5" rx="72.1" ry="47" fill="#080b25"/><circle cx="1823.4" cy="747.9" r="31.4" fill="#080b25"/><ellipse cx="1887.2" cy="834.4" rx="88.2" ry="57.5" fill="#285688" opacity="0.05"/><circle cx="1887.2" cy="747.6" r="38.4" fill="#285688" opacity="0.05"/><ellipse cx="1887.2" cy="836.4" rx="88.2" ry="57.5" fill="#080b25"/><circle cx="1887.2" cy="750.1" r="38.4" fill="#080b25"/><ellipse cx="1973.7" cy="846.4" rx="90.1" ry="58.7" fill="#285688" opacity="0.03"/><circle cx="1973.7" cy="757.8" r="39.2" fill="#285688" opacity="0.03"/><ellipse cx="1973.7" cy="848.4" rx="90.1" ry="58.7" fill="#080b25"/><circle cx="1973.7" cy="760.3" r="39.2" fill="#080b25"/><ellipse cx="2061.2" cy="856" rx="80.1" ry="52.2" fill="#285688" opacity="0.03"/><circle cx="2061.2" cy="777.1" r="34.8" fill="#285688" opacity="0.03"/><ellipse cx="2061.2" cy="858" rx="80.1" ry="52.2" fill="#080b25"/><circle cx="2061.2" cy="779.6" r="34.8" fill="#080b25"/><ellipse cx="-9.8" cy="956" rx="126.9" ry="82.8" fill="#245480" opacity="0.03"/><circle cx="-9.8" cy="831.4" r="55.2" fill="#245480" opacity="0.03"/><ellipse cx="-9.8" cy="958" rx="126.9" ry="82.8" fill="#070a21"/><circle cx="-9.8" cy="833.9" r="55.2" fill="#070a21"/><ellipse cx="83.3" cy="949" rx="99.4" ry="64.8" fill="#245480" opacity="0.06"/><circle cx="83.3" cy="851.3" r="43.2" fill="#245480" opacity="0.06"/><ellipse cx="83.3" cy="951" rx="99.4" ry="64.8" fill="#070a21"/><circle cx="83.3" cy="853.8" r="43.2" fill="#070a21"/><ellipse cx="209.1" cy="918.4" rx="114.8" ry="74.9" fill="#245480" opacity="0.09"/><circle cx="209.1" cy="805.6" r="49.9" fill="#245480" opacity="0.09"/><ellipse cx="209.1" cy="920.4" rx="114.8" ry="74.9" fill="#070a21"/><circle cx="209.1" cy="808.1" r="49.9" fill="#070a21"/><ellipse cx="345.7" cy="932.1" rx="135.5" ry="88.4" fill="#245480" opacity="0.12"/><circle cx="345.7" cy="799" r="58.9" fill="#245480" opacity="0.12"/><ellipse cx="345.7" cy="934.1" rx="135.5" ry="88.4" fill="#070a21"/><circle cx="345.7" cy="801.5" r="58.9" fill="#070a21"/><ellipse cx="467.6" cy="944.5" rx="119.5" ry="77.9" fill="#245480" opacity="0.15"/><circle cx="467.6" cy="827.1" r="52" fill="#245480" opacity="0.15"/><ellipse cx="467.6" cy="946.5" rx="119.5" ry="77.9" fill="#070a21"/><circle cx="467.6" cy="829.6" r="52" fill="#070a21"/><ellipse cx="585.3" cy="932.6" rx="122.1" ry="79.7" fill="#245480" opacity="0.18"/><circle cx="585.3" cy="812.6" r="53.1" fill="#245480" opacity="0.18"/><ellipse cx="585.3" cy="934.6" rx="122.1" ry="79.7" fill="#070a21"/><circle cx="585.3" cy="815.1" r="53.1" fill="#070a21"/><ellipse cx="717.9" cy="935.3" rx="125" ry="81.5" fill="#245480" opacity="0.22"/><circle cx="717.9" cy="812.5" r="54.3" fill="#245480" opacity="0.22"/><ellipse cx="717.9" cy="937.3" rx="125" ry="81.5" fill="#070a21"/><circle cx="717.9" cy="815" r="54.3" fill="#070a21"/><ellipse cx="830.3" cy="897.9" rx="103.3" ry="67.4" fill="#245480" opacity="0.24"/><circle cx="830.3" cy="796.3" r="44.9" fill="#245480" opacity="0.24"/><ellipse cx="830.3" cy="899.9" rx="103.3" ry="67.4" fill="#070a21"/><circle cx="830.3" cy="798.8" r="44.9" fill="#070a21"/><ellipse cx="923.1" cy="929.4" rx="126.7" ry="82.6" fill="#245480" opacity="0.27"/><circle cx="923.1" cy="804.9" r="55.1" fill="#245480" opacity="0.27"/><ellipse cx="923.1" cy="931.4" rx="126.7" ry="82.6" fill="#070a21"/><circle cx="923.1" cy="807.4" r="55.1" fill="#070a21"/><ellipse cx="1042.7" cy="973.5" rx="126.4" ry="82.5" fill="#245480" opacity="0.26"/><circle cx="1042.7" cy="849.4" r="55" fill="#245480" opacity="0.26"/><ellipse cx="1042.7" cy="975.5" rx="126.4" ry="82.5" fill="#070a21"/><circle cx="1042.7" cy="851.9" r="55" fill="#070a21"/><ellipse cx="1136.1" cy="987.8" rx="135.4" ry="88.3" fill="#245480" opacity="0.24"/><circle cx="1136.1" cy="854.8" r="58.9" fill="#245480" opacity="0.24"/><ellipse cx="1136.1" cy="989.8" rx="135.4" ry="88.3" fill="#070a21"/><circle cx="1136.1" cy="857.3" r="58.9" fill="#070a21"/><ellipse cx="1231.4" cy="959.7" rx="111.8" ry="72.9" fill="#245480" opacity="0.22"/><circle cx="1231.4" cy="849.8" r="48.6" fill="#245480" opacity="0.22"/><ellipse cx="1231.4" cy="961.7" rx="111.8" ry="72.9" fill="#070a21"/><circle cx="1231.4" cy="852.3" r="48.6" fill="#070a21"/><ellipse cx="1357.7" cy="955.4" rx="103.2" ry="67.3" fill="#245480" opacity="0.18"/><circle cx="1357.7" cy="853.9" r="44.9" fill="#245480" opacity="0.18"/><ellipse cx="1357.7" cy="957.4" rx="103.2" ry="67.3" fill="#070a21"/><circle cx="1357.7" cy="856.4" r="44.9" fill="#070a21"/><ellipse cx="1487.5" cy="974.8" rx="125.2" ry="81.7" fill="#245480" opacity="0.15"/><circle cx="1487.5" cy="851.7" r="54.5" fill="#245480" opacity="0.15"/><ellipse cx="1487.5" cy="976.8" rx="125.2" ry="81.7" fill="#070a21"/><circle cx="1487.5" cy="854.2" r="54.5" fill="#070a21"/><ellipse cx="1613" cy="981.5" rx="129.6" ry="84.5" fill="#245480" opacity="0.12"/><circle cx="1613" cy="854.2" r="56.3" fill="#245480" opacity="0.12"/><ellipse cx="1613" cy="983.5" rx="129.6" ry="84.5" fill="#070a21"/><circle cx="1613" cy="856.7" r="56.3" fill="#070a21"/><ellipse cx="1749" cy="921" rx="120.7" ry="78.7" fill="#245480" opacity="0.08"/><circle cx="1749" cy="802.4" r="52.5" fill="#245480" opacity="0.08"/><ellipse cx="1749" cy="923" rx="120.7" ry="78.7" fill="#070a21"/><circle cx="1749" cy="804.9" r="52.5" fill="#070a21"/><ellipse cx="1873.6" cy="900.6" rx="94.4" ry="61.6" fill="#245480" opacity="0.05"/><circle cx="1873.6" cy="807.7" r="41" fill="#245480" opacity="0.05"/><ellipse cx="1873.6" cy="902.6" rx="94.4" ry="61.6" fill="#070a21"/><circle cx="1873.6" cy="810.2" r="41" fill="#070a21"/><ellipse cx="2003.7" cy="913.4" rx="112.4" ry="73.3" fill="#245480" opacity="0.03"/><circle cx="2003.7" cy="803" r="48.9" fill="#245480" opacity="0.03"/><ellipse cx="2003.7" cy="915.4" rx="112.4" ry="73.3" fill="#070a21"/><circle cx="2003.7" cy="805.5" r="48.9" fill="#070a21"/><ellipse cx="-84.7" cy="1070.9" rx="175.8" ry="114.7" fill="#1e4470" opacity="0.03"/><circle cx="-84.7" cy="898.4" r="76.4" fill="#1e4470" opacity="0.03"/><ellipse cx="-84.7" cy="1072.9" rx="175.8" ry="114.7" fill="#06091e"/><circle cx="-84.7" cy="900.9" r="76.4" fill="#06091e"/><ellipse cx="92.3" cy="1113.2" rx="172.3" ry="112.4" fill="#1e4470" opacity="0.05"/><circle cx="92.3" cy="944.2" r="74.9" fill="#1e4470" opacity="0.05"/><ellipse cx="92.3" cy="1115.2" rx="172.3" ry="112.4" fill="#06091e"/><circle cx="92.3" cy="946.7" r="74.9" fill="#06091e"/><ellipse cx="333.8" cy="1142.3" rx="186.2" ry="121.4" fill="#1e4470" opacity="0.10"/><circle cx="333.8" cy="959.7" r="80.9" fill="#1e4470" opacity="0.10"/><ellipse cx="333.8" cy="1144.3" rx="186.2" ry="121.4" fill="#06091e"/><circle cx="333.8" cy="962.2" r="80.9" fill="#06091e"/><ellipse cx="490.6" cy="1078.4" rx="196.9" ry="128.4" fill="#1e4470" opacity="0.14"/><circle cx="490.6" cy="885.2" r="85.6" fill="#1e4470" opacity="0.14"/><ellipse cx="490.6" cy="1080.4" rx="196.9" ry="128.4" fill="#06091e"/><circle cx="490.6" cy="887.7" r="85.6" fill="#06091e"/><ellipse cx="708.4" cy="1088.2" rx="160.6" ry="104.7" fill="#1e4470" opacity="0.18"/><circle cx="708.4" cy="930.6" r="69.8" fill="#1e4470" opacity="0.18"/><ellipse cx="708.4" cy="1090.2" rx="160.6" ry="104.7" fill="#06091e"/><circle cx="708.4" cy="933.1" r="69.8" fill="#06091e"/><ellipse cx="868.9" cy="1107.3" rx="174.6" ry="113.9" fill="#1e4470" opacity="0.22"/><circle cx="868.9" cy="935.9" r="75.9" fill="#1e4470" opacity="0.22"/><ellipse cx="868.9" cy="1109.3" rx="174.6" ry="113.9" fill="#06091e"/><circle cx="868.9" cy="938.4" r="75.9" fill="#06091e"/><ellipse cx="1065.1" cy="1115.2" rx="187.4" ry="122.2" fill="#1e4470" opacity="0.22"/><circle cx="1065.1" cy="931.3" r="81.5" fill="#1e4470" opacity="0.22"/><ellipse cx="1065.1" cy="1117.2" rx="187.4" ry="122.2" fill="#06091e"/><circle cx="1065.1" cy="933.8" r="81.5" fill="#06091e"/><ellipse cx="1216.5" cy="1096.2" rx="202.9" ry="132.3" fill="#1e4470" opacity="0.19"/><circle cx="1216.5" cy="897.2" r="88.2" fill="#1e4470" opacity="0.19"/><ellipse cx="1216.5" cy="1098.2" rx="202.9" ry="132.3" fill="#06091e"/><circle cx="1216.5" cy="899.7" r="88.2" fill="#06091e"/><ellipse cx="1448.9" cy="1089.5" rx="138.8" ry="90.6" fill="#1e4470" opacity="0.14"/><circle cx="1448.9" cy="953.1" r="60.4" fill="#1e4470" opacity="0.14"/><ellipse cx="1448.9" cy="1091.5" rx="138.8" ry="90.6" fill="#06091e"/><circle cx="1448.9" cy="955.6" r="60.4" fill="#06091e"/><ellipse cx="1585.9" cy="1061.2" rx="165.1" ry="107.7" fill="#1e4470" opacity="0.11"/><circle cx="1585.9" cy="899.2" r="71.8" fill="#1e4470" opacity="0.11"/><ellipse cx="1585.9" cy="1063.2" rx="165.1" ry="107.7" fill="#06091e"/><circle cx="1585.9" cy="901.7" r="71.8" fill="#06091e"/><ellipse cx="1785.6" cy="1054" rx="173" ry="112.8" fill="#1e4470" opacity="0.06"/><circle cx="1785.6" cy="884.2" r="75.2" fill="#1e4470" opacity="0.06"/><ellipse cx="1785.6" cy="1056" rx="173" ry="112.8" fill="#06091e"/><circle cx="1785.6" cy="886.7" r="75.2" fill="#06091e"/><ellipse cx="1923.9" cy="1061.5" rx="182.2" ry="118.8" fill="#1e4470" opacity="0.04"/><circle cx="1923.9" cy="882.8" r="79.2" fill="#1e4470" opacity="0.04"/><ellipse cx="1923.9" cy="1063.5" rx="182.2" ry="118.8" fill="#06091e"/><circle cx="1923.9" cy="885.3" r="79.2" fill="#06091e"/><ellipse cx="2115.6" cy="1089.7" rx="161.6" ry="105.4" fill="#1e4470" opacity="0.03"/><circle cx="2115.6" cy="931.1" r="70.2" fill="#1e4470" opacity="0.03"/><ellipse cx="2115.6" cy="1091.7" rx="161.6" ry="105.4" fill="#06091e"/><circle cx="2115.6" cy="933.6" r="70.2" fill="#06091e"/><ellipse cx="-53.9" cy="1285.4" rx="262.6" ry="171.3" fill="#183658" opacity="0.03"/><circle cx="-53.9" cy="1028" r="114.2" fill="#183658" opacity="0.03"/><ellipse cx="-53.9" cy="1287.4" rx="262.6" ry="171.3" fill="#05081b"/><circle cx="-53.9" cy="1030.5" r="114.2" fill="#05081b"/><ellipse cx="254.1" cy="1193.3" rx="202.8" ry="132.3" fill="#183658" opacity="0.06"/><circle cx="254.1" cy="994.4" r="88.2" fill="#183658" opacity="0.06"/><ellipse cx="254.1" cy="1195.3" rx="202.8" ry="132.3" fill="#05081b"/><circle cx="254.1" cy="996.9" r="88.2" fill="#05081b"/><ellipse cx="557.6" cy="1322.6" rx="264.9" ry="172.8" fill="#183658" opacity="0.11"/><circle cx="557.6" cy="1062.9" r="115.2" fill="#183658" opacity="0.11"/><ellipse cx="557.6" cy="1324.6" rx="264.9" ry="172.8" fill="#05081b"/><circle cx="557.6" cy="1065.4" r="115.2" fill="#05081b"/><ellipse cx="769.5" cy="1249.9" rx="216.1" ry="140.9" fill="#183658" opacity="0.15"/><circle cx="769.5" cy="1038.1" r="93.9" fill="#183658" opacity="0.15"/><ellipse cx="769.5" cy="1251.9" rx="216.1" ry="140.9" fill="#05081b"/><circle cx="769.5" cy="1040.6" r="93.9" fill="#05081b"/><ellipse cx="1073.1" cy="1280" rx="253.9" ry="165.6" fill="#183658" opacity="0.16"/><circle cx="1073.1" cy="1031.1" r="110.4" fill="#183658" opacity="0.16"/><ellipse cx="1073.1" cy="1282" rx="253.9" ry="165.6" fill="#05081b"/><circle cx="1073.1" cy="1033.6" r="110.4" fill="#05081b"/><ellipse cx="1404.2" cy="1264.8" rx="243.9" ry="159" fill="#183658" opacity="0.11"/><circle cx="1404.2" cy="1025.7" r="106" fill="#183658" opacity="0.11"/><ellipse cx="1404.2" cy="1266.8" rx="243.9" ry="159" fill="#05081b"/><circle cx="1404.2" cy="1028.2" r="106" fill="#05081b"/><ellipse cx="1698" cy="1327.7" rx="232.3" ry="151.5" fill="#183658" opacity="0.06"/><circle cx="1698" cy="1100" r="101" fill="#183658" opacity="0.06"/><ellipse cx="1698" cy="1329.7" rx="232.3" ry="151.5" fill="#05081b"/><circle cx="1698" cy="1102.5" r="101" fill="#05081b"/><ellipse cx="1934" cy="1266.8" rx="275.1" ry="179.4" fill="#183658" opacity="0.03"/><circle cx="1934" cy="997.2" r="119.6" fill="#183658" opacity="0.03"/><ellipse cx="1934" cy="1268.8" rx="275.1" ry="179.4" fill="#05081b"/><circle cx="1934" cy="999.7" r="119.6" fill="#05081b"/><ellipse cx="2125.2" cy="1236" rx="245.3" ry="160" fill="#183658" opacity="0.03"/><circle cx="2125.2" cy="995.5" r="106.7" fill="#183658" opacity="0.03"/><ellipse cx="2125.2" cy="1238" rx="245.3" ry="160" fill="#05081b"/><circle cx="2125.2" cy="998" r="106.7" fill="#05081b"/><ellipse cx="-226.2" cy="1513.9" rx="357.5" ry="233.1" fill="#142644" opacity="0.03"/><circle cx="-226.2" cy="1163.7" r="155.4" fill="#142644" opacity="0.03"/><ellipse cx="-226.2" cy="1515.9" rx="357.5" ry="233.1" fill="#040719"/><circle cx="-226.2" cy="1166.2" r="155.4" fill="#040719"/><ellipse cx="19.9" cy="1485.3" rx="342.9" ry="223.6" fill="#142644" opacity="0.03"/><circle cx="19.9" cy="1149.3" r="149.1" fill="#142644" opacity="0.03"/><ellipse cx="19.9" cy="1487.3" rx="342.9" ry="223.6" fill="#040719"/><circle cx="19.9" cy="1151.8" r="149.1" fill="#040719"/><ellipse cx="267.1" cy="1508.4" rx="351" ry="228.9" fill="#142644" opacity="0.05"/><circle cx="267.1" cy="1164.5" r="152.6" fill="#142644" opacity="0.05"/><ellipse cx="267.1" cy="1510.4" rx="351" ry="228.9" fill="#040719"/><circle cx="267.1" cy="1167" r="152.6" fill="#040719"/><ellipse cx="635.5" cy="1431.5" rx="276" ry="180" fill="#142644" opacity="0.10"/><circle cx="635.5" cy="1161" r="120" fill="#142644" opacity="0.10"/><ellipse cx="635.5" cy="1433.5" rx="276" ry="180" fill="#040719"/><circle cx="635.5" cy="1163.5" r="120" fill="#040719"/><ellipse cx="937.3" cy="1534.1" rx="304.8" ry="198.8" fill="#142644" opacity="0.14"/><circle cx="937.3" cy="1235.5" r="132.5" fill="#142644" opacity="0.14"/><ellipse cx="937.3" cy="1536.1" rx="304.8" ry="198.8" fill="#040719"/><circle cx="937.3" cy="1238" r="132.5" fill="#040719"/><ellipse cx="1191.6" cy="1556.9" rx="330.9" ry="215.8" fill="#142644" opacity="0.11"/><circle cx="1191.6" cy="1232.7" r="143.9" fill="#142644" opacity="0.11"/><ellipse cx="1191.6" cy="1558.9" rx="330.9" ry="215.8" fill="#040719"/><circle cx="1191.6" cy="1235.2" r="143.9" fill="#040719"/><ellipse cx="1604.5" cy="1639" rx="375.2" ry="244.7" fill="#142644" opacity="0.06"/><circle cx="1604.5" cy="1271.4" r="163.1" fill="#142644" opacity="0.06"/><ellipse cx="1604.5" cy="1641" rx="375.2" ry="244.7" fill="#040719"/><circle cx="1604.5" cy="1273.9" r="163.1" fill="#040719"/><ellipse cx="1922.2" cy="1539.3" rx="296.9" ry="193.6" fill="#142644" opacity="0.03"/><circle cx="1922.2" cy="1248.4" r="129.1" fill="#142644" opacity="0.03"/><ellipse cx="1922.2" cy="1541.3" rx="296.9" ry="193.6" fill="#040719"/><circle cx="1922.2" cy="1250.9" r="129.1" fill="#040719"/><ellipse cx="2216.1" cy="1550.9" rx="378" ry="246.5" fill="#142644" opacity="0.03"/><circle cx="2216.1" cy="1180.6" r="164.3" fill="#142644" opacity="0.03"/><ellipse cx="2216.1" cy="1552.9" rx="378" ry="246.5" fill="#040719"/><circle cx="2216.1" cy="1183.1" r="164.3" fill="#040719"/><ellipse cx="975" cy="705" rx="560" ry="100" fill="url(#sglow)" opacity="0.2"/><rect width="1996" height="1131" fill="url(#svig)"/></symbol></svg>
<div id="win">
<div class="abs" style="left:-496px;top:-280px;width:3840px;height:2160px">
<div class="abs" style="left:496px;top:280px;width:2848px;height:140px;background:rgb(122,132,147);border-radius:26px 26px 0 0;"></div>
<div class="abs" style="left:496px;top:398px;width:2848px;height:122px;background:rgb(146,147,149);border-radius:18px 18px 0 0;"></div>
<div class="abs" style="left:496px;top:514px;width:2848px;height:1366px;background:rgb(144,145,147);"></div>
<div class="abs" style="left:496px;top:512.5px;width:2848px;height:1.5px;background:rgb(128,129,131);"></div>
<svg style="left:0px;top:0px;" width="3840" height="420" viewBox="0 0 3840 420"><path d="M1842 398.5 A32 32 0 0 0 1874 366.5 L1874 322.5 A24 24 0 0 1 1898 298.5 L2498 298.5 A24 24 0 0 1 2522 322.5 L2522 366.5 A32 32 0 0 0 2554 398.5 Z" fill="rgb(146,147,149)"/></svg>
<svg style="left:520px;top:300px;" width="320" height="80" viewBox="0 0 320 80"><g stroke="rgb(24,74,150)" stroke-width="6.4" fill="none"><path d="M22.9 25 L53.3 54.8 M53.3 25 L22.9 54.8"/><rect x="138.2" y="24.2" width="30.6" height="30.3"/></g><rect x="255.5" y="56.5" width="36.5" height="6.6" fill="rgb(24,74,150)" transform="translate(0 -20)"/></svg>
<svg style="left:1780px;top:312px;" width="56" height="56" viewBox="0 0 56 56"><path d="M28 14.5 V41.5 M14.5 28 H41.5" stroke="rgb(44,45,48)" stroke-width="4.6" fill="none"/></svg>
<svg style="left:1900px;top:320px;" width="40" height="40" viewBox="0 0 40 40"><path d="M10.6 9.6 L30.6 30.6 M30.6 9.6 L10.6 30.6" stroke="rgb(28,28,31)" stroke-width="4.6" fill="none" transform="translate(0 0)"/></svg>
<div class="t" style="top:321.75px;font-size:35.5px;color:rgb(30,30,33);left:2291.00px;">YouTube</div>
<svg style="left:2453px;top:325px;" width="43" height="30" viewBox="0 0 43 30"><rect x="0.8" y="0.8" width="41" height="28.2" rx="7.5" fill="rgb(150,16,20)"/><path d="M17 8.6 L28.2 15 L17 21.4Z" fill="rgb(150,150,152)"/></svg>
<div class="abs" style="left:2563px;top:310px;width:298px;height:60px;background:rgb(31,76,139);border-radius:18px;"></div><div class="t rtl" dir="rtl" style="top:321.43px;font-size:37.3px;color:rgb(180,186,198);right:997.00px;transform:scaleX(1.015);transform-origin:right center;-webkit-text-stroke:0.85px rgb(180,186,198);">רשתות חברתיות</div><div class="abs" style="left:2569.5px;top:392.8px;width:285.5px;height:9.199999999999989px;background:rgb(31,76,139);border-radius:5px 5px 0 0;"></div>
<div class="abs" style="left:2891px;top:310px;width:158px;height:60px;background:rgb(140,104,18);border-radius:18px;"></div><div class="t rtl" dir="rtl" style="top:321.43px;font-size:37.3px;color:rgb(30,28,24);right:809.50px;-webkit-text-stroke:0.85px rgb(30,28,24);">לימודים</div><div class="abs" style="left:2897px;top:392.8px;width:146px;height:9.199999999999989px;background:rgb(140,104,18);border-radius:5px 5px 0 0;"></div>
<div class="abs" style="left:3079px;top:310px;width:144px;height:60px;background:rgb(98,48,145);border-radius:18px;"></div><div class="t rtl" dir="rtl" style="top:321.43px;font-size:37.3px;color:rgb(190,182,202);right:635.50px;transform:scaleX(1.035);transform-origin:right center;-webkit-text-stroke:0.85px rgb(190,182,202);">מוזיקה</div><div class="abs" style="left:3085.5px;top:392.8px;width:131.5px;height:9.199999999999989px;background:rgb(98,48,145);border-radius:5px 5px 0 0;"></div>
<div class="abs" style="left:2540px;top:398.5px;width:804px;height:13.5px;background:rgb(146,147,149);border-radius:0 18px 0 0;"></div>
<div class="abs" style="left:3242px;top:299px;width:81px;height:81px;background:rgb(136,140,149);border-radius:26px;"></div>
<svg style="left:3262px;top:322px;" width="40" height="36" viewBox="0 0 40 36"><path d="M10.4 13.6 L20 23.2 L29.6 13.6" stroke="rgb(52,54,58)" stroke-width="4.7" fill="none"/></svg>
<svg style="left:3262px;top:430px;" width="52" height="52" viewBox="0 0 52 52"><path d="M8.6 25.2 H39 M24.6 10.4 L39.4 25.2 L24.6 40" stroke="rgb(54,55,59)" stroke-width="3.4" fill="none"/></svg>
<svg style="left:3173px;top:430px;" width="52" height="52" viewBox="0 0 52 52"><path d="M42 25.2 H11.6 M26 10.4 L11.2 25.2 L26 40" stroke="rgb(112,113,116)" stroke-width="3.4" fill="none"/></svg>
<svg style="left:3083px;top:430px;" width="52" height="52" viewBox="0 0 52 52"><path d="M37.81 16.62 A14.6 14.6 0 1 0 39.96 29.47 M42.3 9.2 V20.6 H30.2" stroke="rgb(54,55,59)" stroke-width="3.4" fill="none"/></svg>
<div class="abs" style="left:846.5px;top:414px;width:2198.5px;height:84px;background:rgb(137,138,142);border-radius:42px;"></div>
<div class="abs" style="left:2974.5px;top:425.5px;width:60.0px;height:60.0px;background:rgb(146,147,151);border-radius:50%;"></div>
<svg style="left:2974.5px;top:424.7px;" width="60" height="60" viewBox="0 0 60 60"><g stroke="rgb(40,41,45)" stroke-width="3.2" fill="none"><circle cx="20" cy="22.2" r="4.2"/><path d="M30.6 22.2 H43.8 M15.6 37.4 H28.6"/><circle cx="39.4" cy="37.4" r="4.6"/></g></svg>
<div class="t" style="top:435.28px;font-size:37px;color:rgb(34,35,40);letter-spacing:-0.5px;right:886.00px;">youtube.com<span style="color:rgb(62,64,68)">/watch/</span></div>
<svg style="left:869.7px;top:426px;" width="60" height="60" viewBox="0 0 60 60"><polygon points="30.00,14.20 34.58,25.29 46.55,26.22 37.42,34.01 40.23,45.68 30.00,39.40 19.77,45.68 22.58,34.01 13.45,26.22 25.42,25.29" stroke="rgb(54,55,59)" stroke-width="3.5" fill="none" stroke-linejoin="miter"/></svg>
<svg style="left:758px;top:428px;" width="56" height="56" viewBox="0 0 56 56"><path d="M8.3 13.2 H18.3 A5 5 0 0 1 28.3 13.2 H38.7 V23.2 A5 5 0 0 1 38.7 33.2 V43.6 H8.3 V33.4 A5 5 0 0 0 8.3 23.4 Z" stroke="rgb(52,53,57)" stroke-width="3.6" fill="none" stroke-linejoin="round"/></svg>
<div class="abs" style="left:534.8px;top:431.6px;width:50px;height:50px;border-radius:50%;overflow:hidden;background:rgb(137,139,142)"><svg width="50" height="50" viewBox="0 0 51 51" style="left:0;top:0"><rect width="51" height="51" fill="rgb(138,140,143)"/><rect x="3" y="6" width="11" height="30" rx="5" fill="rgb(146,147,150)"/><rect x="36" y="8" width="11" height="32" rx="5" fill="rgb(147,148,151)"/><path d="M2 52 Q4 36 19 33.5 L25.5 47 L32 33.5 Q47 36 49 52Z" fill="rgb(149,150,153)"/><path d="M20.3 31 H29.6 V40 L27.8 49 H23.4 L20.8 40Z" fill="rgb(96,62,58)"/><path d="M14.6 21 Q12.6 3 25 2 Q38 2.4 36.6 20.5 L33 22 H17.4Z" fill="rgb(36,33,35)"/><ellipse cx="25.2" cy="22.6" rx="9" ry="11.6" fill="rgb(101,69,59)"/><path d="M16.6 17.5 Q17.6 9.6 25.4 9.8 Q33 9.8 34 17.5 Q30 11.6 25.2 11.8 Q20 11.8 16.6 17.5Z" fill="rgb(36,33,35)"/><ellipse cx="25.6" cy="28.4" rx="3.4" ry="1.1" fill="rgb(150,140,138)"/></svg></div>
</div>
<div class="abs" style="left:-496px;top:-280px;width:3840px;height:2160px">
<svg style="left:3260px;top:540px;" width="40" height="36" viewBox="0 0 40 36"><path d="M4 6.6 H35 M4 17.1 H35 M4 27.5 H35" stroke="rgb(30,30,33)" stroke-width="2.6"/></svg>
<svg style="left:3061px;top:540px;" width="52" height="36" viewBox="0 0 52 36"><rect x="1" y="1" width="48.4" height="33.6" rx="9" fill="rgb(152,16,20)"/><path d="M19.6 10.6 L33 17.8 L19.6 25Z" fill="rgb(150,150,152)"/></svg>
<div class="t" style="top:537.25px;font-size:42px;color:rgb(30,30,33);font-weight:bold;letter-spacing:-1px;left:3115.00px;transform:scaleX(0.6);transform-origin:left center;">YouTube</div>
<div class="abs" style="left:1385px;top:524px;width:1024px;height:67.5px;border-radius:34px;border:1.6px solid rgb(126,127,129);background:rgb(145,146,148)"></div>
<div class="abs" style="left:1385px;top:524px;width:108.5px;height:67.5px;background:rgb(141,142,144);border-radius:34px 0 0 34px;border:1.6px solid rgb(126,127,129);"></div>
<svg style="left:1405px;top:536px;" width="46" height="46" viewBox="0 0 46 46"><circle cx="22" cy="20.6" r="12.5" stroke="rgb(30,30,33)" stroke-width="2.2" fill="none"/><path d="M30.9 29.4 L38.2 36.6" stroke="rgb(30,30,33)" stroke-width="2.2"/></svg>
<div class="t rtl" dir="rtl" style="top:540.07px;font-size:33px;color:rgb(100,101,104);right:1458.50px;transform:scaleX(0.86);transform-origin:right center;">חיפוש</div>
<div class="abs" style="left:1289px;top:523px;width:68px;height:68px;background:rgb(137,138,140);border-radius:50%;"></div>
<svg style="left:1303px;top:537px;" width="40" height="42" viewBox="0 0 40 42"><rect x="15.5" y="5.9" width="9.8" height="22" rx="4.9" fill="rgb(28,28,31)"/><path d="M9.6 20.5 A10.8 10.8 0 0 0 31.2 20.5 M20.4 31.5 V37.5" stroke="rgb(28,28,31)" stroke-width="2.2" fill="none"/></svg>
<div class="abs" style="left:1230.5px;top:640px;width:1996px;height:1131px;border-radius:26px 26px 20px 20px;overflow:hidden;background:#14121f"><svg width="1996" height="1131" style="left:0;top:0;filter:saturate(0.9)"><use href="#scene" width="1996" height="1131"/></svg><div class="abs" style="left:0;top:0;width:100%;height:100%;background:rgba(40,38,46,0.32)"></div></div>
<div class="abs" style="left:2620.5px;top:1601.5px;width:568.5px;height:121.5px;background:rgb(32,33,38);border-radius:61px;"></div>
<div class="t rtl" dir="rtl" style="top:1640.74px;font-size:40px;color:#ffffff;right:805.20px;transform:scaleX(0.94);transform-origin:right center;">מופעל בטלוויזיה בסלון</div>
<svg style="left:3066px;top:1638px;" width="58" height="48" viewBox="0 0 58 48"><g stroke="#fff" stroke-width="4.2" fill="none" stroke-linecap="butt"><path d="M5.4 14.5 V9.6 A3.4 3.4 0 0 1 8.8 6.2 H48.6 A3.4 3.4 0 0 1 52 9.6 V39 A3.4 3.4 0 0 1 48.6 42.4 H34"/><path d="M3.4 24.6 A19.4 19.4 0 0 1 22.8 44"/><path d="M3.4 33 A11 11 0 0 1 14.4 44"/></g><path d="M3.4 38.8 A5.4 5.4 0 0 1 8.8 44.2 H3.4Z" fill="#fff"/></svg>
<div class="t rtl" dir="rtl" style="top:1793.02px;font-size:41.8px;color:rgb(44,45,49);right:617.50px;">הופעה חיה – פאלם ספרינגס</div>
<div class="abs" style="left:905.5px;top:880px;width:286.5px;height:166px;background:rgb(134,135,137);border-radius:11px;"></div>
<div class="abs" style="left:905.5px;top:1063px;width:286.5px;height:166px;background:rgb(134,135,137);border-radius:11px;"></div>
<div class="abs" style="left:905.5px;top:1242.5px;width:286.5px;height:166.5px;background:rgb(134,135,137);border-radius:11px;"></div>
<div class="abs" style="left:905.5px;top:1422px;width:286.5px;height:171px;background:rgb(134,135,137);border-radius:11px;"></div>
<div class="abs" style="left:905.5px;top:1601px;width:286.5px;height:166px;background:rgb(134,135,137);border-radius:11px;"></div>
<div class="abs" style="left:905.5px;top:1777px;width:286.5px;height:123px;background:rgb(134,135,137);border-radius:11px;"></div>
<div class="abs" style="left:610.5px;top:1066.5px;width:285.5px;height:33.0px;background:rgb(137,138,140);border-radius:16.5px;"></div>
<div class="abs" style="left:553px;top:1104.5px;width:343px;height:32.0px;background:rgb(137,138,140);border-radius:16.0px;"></div>
<div class="abs" style="left:745px;top:1141.5px;width:151px;height:26.0px;background:rgb(137,138,140);border-radius:13.0px;"></div>
<div class="abs" style="left:668px;top:1172.5px;width:228px;height:26.0px;background:rgb(137,138,140);border-radius:13.0px;"></div>
<div class="abs" style="left:610.5px;top:1242.5px;width:285.5px;height:32.5px;background:rgb(137,138,140);border-radius:16.25px;"></div>
<div class="abs" style="left:553px;top:1281px;width:343px;height:32px;background:rgb(137,138,140);border-radius:16.0px;"></div>
<div class="abs" style="left:745px;top:1321px;width:151px;height:27px;background:rgb(137,138,140);border-radius:13.5px;"></div>
<div class="abs" style="left:646px;top:1355px;width:250px;height:26.5px;background:rgb(137,138,140);border-radius:13.25px;"></div>
<div class="abs" style="left:610.5px;top:1431.5px;width:285.5px;height:33.0px;background:rgb(137,138,140);border-radius:16.5px;"></div>
<div class="abs" style="left:688px;top:1469px;width:208px;height:26px;background:rgb(137,138,140);border-radius:13.0px;"></div>
<div class="abs" style="left:542px;top:1606px;width:354px;height:32.5px;background:rgb(137,138,140);border-radius:16.25px;"></div>
<div class="abs" style="left:589px;top:1643.5px;width:307px;height:32.5px;background:rgb(137,138,140);border-radius:16.25px;"></div>
<div class="abs" style="left:745px;top:1683px;width:151px;height:25px;background:rgb(137,138,140);border-radius:12.5px;"></div>
<div class="abs" style="left:562px;top:1713px;width:334px;height:26px;background:rgb(137,138,140);border-radius:13.0px;"></div>
<div class="abs" style="left:562px;top:1776.5px;width:334px;height:33.0px;background:rgb(137,138,140);border-radius:16.5px;"></div>
<div class="abs" style="left:589px;top:1815px;width:307px;height:32px;background:rgb(137,138,140);border-radius:16.0px;"></div>
<div class="abs" style="left:745px;top:1854px;width:151px;height:36px;background:rgb(137,138,140);border-radius:18.0px;"></div>
</div>
</div>
<div class="abs" style="left:609.7px;top:399.3px;width:114px;height:114px;border-radius:50%;background:rgb(232,233,237);box-shadow:0 8px 26px rgba(0,0,0,0.26),0 2px 6px rgba(0,0,0,0.14)"></div>
<svg style="left:630px;top:432px;" width="80" height="56" viewBox="0 0 80 56"><g fill="#000"><rect x="10.2" y="10.1" width="34" height="6.5"/><rect x="10.2" y="19.9" width="34" height="6.5"/><rect x="10.2" y="31.2" width="22.4" height="6.5"/><rect x="51.2" y="9.8" width="5.9" height="31"/><rect x="51.2" y="9.8" width="12.4" height="5.4"/><circle cx="46.6" cy="40.3" r="8.3"/></g></svg>
<div class="abs" style="left:531px;top:557px;width:800.8px;height:471.5px;border-radius:14px 14px 17px 17px;box-shadow:0 9px 34px rgba(0,0,0,0.24),0 2px 8px rgba(0,0,0,0.12);background:#fff;overflow:hidden"><div class="abs" style="left:0;top:0;width:100%;height:265px;background:rgb(6,8,18)"></div><svg width="380" height="265" style="left:0;top:0;overflow:hidden" viewBox="0 0 380 265"><g transform="translate(-88.6 -20) scale(0.2852)"><use href="#scene" width="1996" height="1131"/></g></svg><div class="abs" style="left:336px;top:0;width:44px;height:265px;background:linear-gradient(90deg,rgba(6,8,18,0),rgba(6,8,18,1) 80%)"></div><div class="abs" style="left:0;top:369px;width:100%;height:1.3px;background:rgb(146,154,200)"></div></div>
<div class="abs" style="left:1233.5px;top:595.5px;width:57.5px;height:16.5px;background:rgb(207,212,250);border-radius:9px;"></div>
<div class="abs" style="left:1034px;top:644.5px;width:257px;height:16.5px;background:rgb(207,212,250);border-radius:9px;"></div>
<div class="abs" style="left:1157px;top:672px;width:134px;height:18px;background:rgb(207,212,250);border-radius:9px;"></div>
<svg style="left:0px;top:0px;" width="3840" height="2160" viewBox="0 0 3840 2160"><g fill="rgb(207,212,250)" stroke="rgb(207,212,250)" stroke-width="3" stroke-linejoin="round"><path d="M1246 750.2 L1260.6 760.6 L1246 771.0Z"/><path d="M1267.6 750.2 L1281.5 760.6 L1267.6 771.0Z"/><path d="M1176 748.1999999999999 L1198 760.8 L1176 773.4Z"/><path d="M1102 750.2 L1088 760.6 L1102 771.0Z"/><path d="M1123.4 750.2 L1109 760.6 L1123.4 771.0Z"/></g><rect x="1051.6" y="735.4" width="3.8" height="50.2" rx="1.9" fill="rgb(207,212,250)"/><g stroke="rgb(207,212,250)" stroke-width="4.2" fill="none"><path d="M982.5 740.2 L995.4 753.1 M982.2 753.8 H997.5 V741.2"/><path d="M1002.4 742.8 H1024.8 V760.2"/><path d="M984.3 758 V774.4 H1005"/></g><rect x="1008.2" y="763.2" width="18.8" height="12.6" fill="rgb(207,212,250)"/></svg>
<div class="t rtl" dir="rtl" style="top:855.15px;font-size:36.8px;color:rgb(26,26,29);right:2632.50px;transform:scaleX(0.95);transform-origin:right center;-webkit-text-stroke:0.35px rgb(26,26,29);">כתוביות מיידיות</div>
<div class="t rtl" dir="rtl" style="top:958.85px;font-size:36.8px;color:rgb(26,26,29);right:2632.50px;transform:scaleX(0.95);transform-origin:right center;-webkit-text-stroke:0.35px rgb(26,26,29);">הגדרות לכתוביות</div>
<svg style="left:0px;top:0px;" width="3840" height="2160" viewBox="0 0 3840 2160"><g stroke="#111" fill="none"><rect x="1242.1" y="858.6" width="40" height="31" rx="2.6" stroke-width="4.5"/><path d="M1248.5 873.2 H1253 M1256.4 873.2 H1275.6 M1248.5 879.9 H1267.7 M1271 879.9 H1275.6" stroke-width="3.5"/><rect x="578.4" y="863.5" width="44.2" height="22" rx="11" stroke-width="5"/><path d="M584.3 960 H567.7 V996 H604 V979.3" stroke-width="4.1"/><path d="M588.4 960 H604.1 V975.8 M604.6 959.6 L579.6 984.6" stroke-width="4.1"/></g><circle cx="589.5" cy="874.5" r="6.7" fill="#111"/><polygon points="1257.03,963.27 1257.54,957.20 1266.66,957.20 1267.17,963.27 1271.98,966.05 1277.48,963.45 1282.04,971.35 1277.04,974.82 1277.04,980.38 1282.04,983.85 1277.48,991.75 1271.98,989.15 1267.17,991.93 1266.66,998.00 1257.54,998.00 1257.03,991.93 1252.22,989.15 1246.72,991.75 1242.16,983.85 1247.16,980.38 1247.16,974.82 1242.16,971.35 1246.72,963.45 1252.22,966.05" fill="none" stroke="#111" stroke-width="4" stroke-linejoin="miter"/><circle cx="1262.1" cy="977.6" r="7.2" fill="#111"/></svg>
</body></html>
